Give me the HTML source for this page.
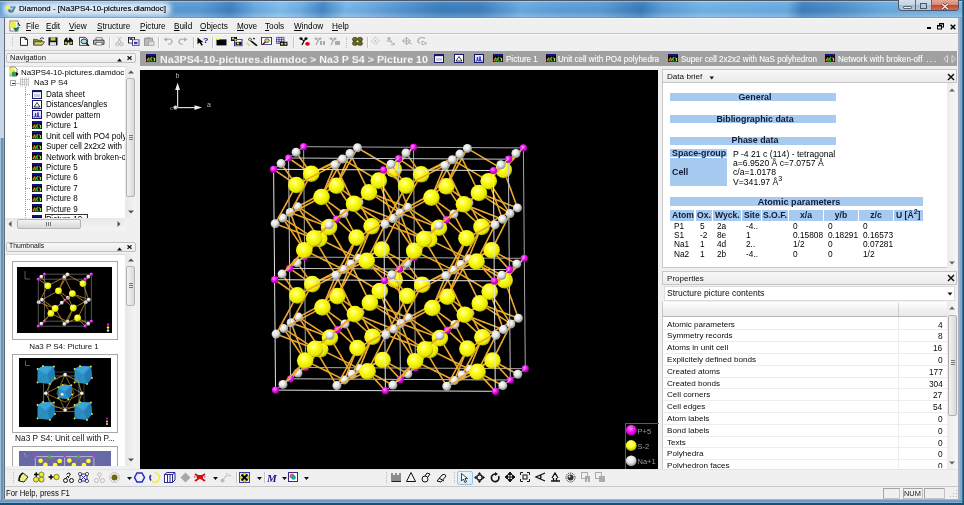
<!DOCTYPE html><html><head><meta charset="utf-8"><style>html,body{margin:0;padding:0;width:964px;height:505px;overflow:hidden;position:relative;background:#f0f0f0;font-family:'Liberation Sans',sans-serif;} div{will-change:transform}</style></head><body>
<div style="position:absolute;left:0px;top:0px;width:964px;height:505px;background:#6a9cc8;"></div><div style="position:absolute;left:0px;top:0px;width:964px;height:18px;background:linear-gradient(95deg,#5c9cd6 0px,#5a9ad4 200px,#3f80c0 230px,#6aaae0 255px,#80bcec 280px,#6eaee4 300px,#4586c4 322px,#78b6e8 345px,#6aa8de 370px,#5494d0 400px,#3c7ebe 440px,#4080c0 480px,#6aaae0 520px,#5e9ed8 560px,#5a9ad4 600px,#4686c4 625px,#3a7cbc 640px,#5c9cd6 660px,#72b2e6 700px,#6aaae0 785px,#3f80be 800px,#4a8ac6 830px,#6aaade 880px,#78b4e4 964px);"></div><div style="position:absolute;left:0px;top:0px;width:964px;height:18px;background:linear-gradient(to bottom,rgba(255,255,255,0.10) 0,rgba(255,255,255,0) 40%,rgba(0,0,0,0.03) 60%,rgba(255,255,255,0.22) 100%);"></div><div style="position:absolute;left:3px;top:2px;width:168px;height:14px;border-radius:7px;background:rgba(226,236,246,0.95);filter:blur(2.5px);"></div><div style="position:absolute;left:0px;top:0px;width:964px;height:1px;background:#4a5868;"></div><div style="position:absolute;left:0px;top:1px;width:964px;height:1px;background:rgba(255,255,255,0.35);"></div><div style="position:absolute;left:18.5px;top:4.08px;white-space:pre;font-family:'Liberation Sans',sans-serif;font-size:7.94px;line-height:9.940000000000001px;color:#0a1420;text-shadow:0 0 0.4px rgba(0,0,0,0.6);">Diamond - [Na3PS4-10-pictures.diamdoc]</div><svg style="position:absolute;left:5px;top:4px;overflow:visible" width="12" height="10"><polygon points="1,2.5 11,2.5 8,8.5 4,8.5" fill="#4f7394"/><polygon points="3,3.5 9,3.5 6.5,7" fill="#a8d0e0"/><circle cx="3" cy="3.5" r="2.2" fill="#f4f070"/></svg><div style="position:absolute;left:898px;top:0;width:59px;height:10px;border:1px solid #4a5868;border-top:none;border-radius:0 0 4px 4px;overflow:hidden;background:linear-gradient(to bottom,#d4e0ec,#c4d4e4 50%,#a6bcd2 55%,#b4cade);"><div style="position:absolute;left:32px;top:0;width:27px;height:10px;background:linear-gradient(to bottom,#e4a898,#d88c78 45%,#c8482c 55%,#d46a50);"></div><div style="position:absolute;left:15.5px;top:0;width:1px;height:10px;background:#5a6878"></div><div style="position:absolute;left:32px;top:0;width:1px;height:10px;background:#5a6878"></div><div style="position:absolute;left:4px;top:5.5px;width:6.5px;height:0.5px;background:#e8eef4;border:1px solid #5a6a7a;border-radius:1px"></div><div style="position:absolute;left:21px;top:2.5px;width:5px;height:4px;border:1px solid #4a5a6a;border-top-width:1.5px;background:#b8c8d8"></div></div><svg style="position:absolute;left:941px;top:2.5px;overflow:visible" width="8" height="7"><path d="M1 0.8 L7 6.2 M7 0.8 L1 6.2" stroke="#6a2a20" stroke-width="2.6"/><path d="M1 0.8 L7 6.2 M7 0.8 L1 6.2" stroke="#f4f0f0" stroke-width="1.5"/></svg><div style="position:absolute;left:5px;top:18px;width:953px;height:481px;background:#f0f0f0;"></div><div style="position:absolute;left:0px;top:18px;width:4px;height:120px;background:#c8d8e8;"></div><div style="position:absolute;left:0px;top:138px;width:1px;height:367px;background:#a0c0dc;"></div><div style="position:absolute;left:1px;top:138px;width:2px;height:367px;background:#6a90b4;"></div><div style="position:absolute;left:3px;top:138px;width:1px;height:367px;background:#8aaccc;"></div><div style="position:absolute;left:4px;top:18px;width:1px;height:482px;background:#5f6b77;"></div><div style="position:absolute;left:958px;top:18px;width:1px;height:482px;background:#a8b0bc;"></div><div style="position:absolute;left:959px;top:18px;width:1px;height:487px;background:#9ab4d4;"></div><div style="position:absolute;left:960px;top:18px;width:1px;height:487px;background:#82a8cc;"></div><div style="position:absolute;left:961px;top:18px;width:1px;height:487px;background:#70acd0;"></div><div style="position:absolute;left:962px;top:0px;width:1px;height:505px;background:#3a7090;"></div><div style="position:absolute;left:963px;top:0px;width:1px;height:505px;background:#1a5070;"></div><div style="position:absolute;left:4px;top:499px;width:955px;height:1px;background:#a8b4c0;"></div><div style="position:absolute;left:0px;top:500px;width:962px;height:1px;background:#7a98b8;"></div><div style="position:absolute;left:0px;top:501px;width:962px;height:1px;background:#6a9cc8;"></div><div style="position:absolute;left:0px;top:502px;width:962px;height:1px;background:#78b0dc;"></div><div style="position:absolute;left:0px;top:503px;width:964px;height:2px;background:#1a5070;"></div><div style="position:absolute;left:5px;top:18px;width:953px;height:15px;background:#f0f0f0;"></div><div style="position:absolute;left:5px;top:18px;width:953px;height:1px;background:#f8f8f8;"></div><div style="position:absolute;left:0px;top:17px;width:964px;height:1px;background:rgba(90,110,130,0.35);"></div><div style="position:absolute;left:5px;top:33px;width:953px;height:1px;background:#c4c4c4;"></div><div style="position:absolute;left:5px;top:34px;width:953px;height:1px;background:#fafafa;"></div><svg style="position:absolute;left:8px;top:20px;overflow:visible" width="13" height="13"><rect x="2" y="1" width="8" height="10" fill="#fff" stroke="#666" stroke-width="0.8"/><circle cx="5" cy="5" r="3.2" fill="#eeee40"/><path d="M5 8 L12 7 L8 12 Z" fill="#1e7a50"/><path d="M10 3 L12 6" stroke="#000" stroke-width="1"/></svg><div style="position:absolute;left:25.7px;top:21.86px;white-space:pre;font-family:'Liberation Sans',sans-serif;font-size:8.2px;line-height:10.2px;color:#000;"><span style="text-decoration:underline;text-underline-offset:1.2px;text-decoration-thickness:0.6px">F</span>ile</div><div style="position:absolute;left:46.2px;top:21.86px;white-space:pre;font-family:'Liberation Sans',sans-serif;font-size:8.2px;line-height:10.2px;color:#000;"><span style="text-decoration:underline;text-underline-offset:1.2px;text-decoration-thickness:0.6px">E</span>dit</div><div style="position:absolute;left:69.3px;top:21.86px;white-space:pre;font-family:'Liberation Sans',sans-serif;font-size:8.2px;line-height:10.2px;color:#000;"><span style="text-decoration:underline;text-underline-offset:1.2px;text-decoration-thickness:0.6px">V</span>iew</div><div style="position:absolute;left:96.6px;top:21.86px;white-space:pre;font-family:'Liberation Sans',sans-serif;font-size:8.2px;line-height:10.2px;color:#000;"><span style="text-decoration:underline;text-underline-offset:1.2px;text-decoration-thickness:0.6px">S</span>tructure</div><div style="position:absolute;left:139.8px;top:21.86px;white-space:pre;font-family:'Liberation Sans',sans-serif;font-size:8.2px;line-height:10.2px;color:#000;"><span style="text-decoration:underline;text-underline-offset:1.2px;text-decoration-thickness:0.6px">P</span>icture</div><div style="position:absolute;left:174.1px;top:21.86px;white-space:pre;font-family:'Liberation Sans',sans-serif;font-size:8.2px;line-height:10.2px;color:#000;"><span style="text-decoration:underline;text-underline-offset:1.2px;text-decoration-thickness:0.6px">B</span>uild</div><div style="position:absolute;left:199.9px;top:21.86px;white-space:pre;font-family:'Liberation Sans',sans-serif;font-size:8.2px;line-height:10.2px;color:#000;"><span style="text-decoration:underline;text-underline-offset:1.2px;text-decoration-thickness:0.6px">O</span>bjects</div><div style="position:absolute;left:236.6px;top:21.86px;white-space:pre;font-family:'Liberation Sans',sans-serif;font-size:8.2px;line-height:10.2px;color:#000;"><span style="text-decoration:underline;text-underline-offset:1.2px;text-decoration-thickness:0.6px">M</span>ove</div><div style="position:absolute;left:265.2px;top:21.86px;white-space:pre;font-family:'Liberation Sans',sans-serif;font-size:8.2px;line-height:10.2px;color:#000;"><span style="text-decoration:underline;text-underline-offset:1.2px;text-decoration-thickness:0.6px">T</span>ools</div><div style="position:absolute;left:293.6px;top:21.86px;white-space:pre;font-family:'Liberation Sans',sans-serif;font-size:8.2px;line-height:10.2px;color:#000;"><span style="text-decoration:underline;text-underline-offset:1.2px;text-decoration-thickness:0.6px">W</span>indow</div><div style="position:absolute;left:332.4px;top:21.86px;white-space:pre;font-family:'Liberation Sans',sans-serif;font-size:8.2px;line-height:10.2px;color:#000;"><span style="text-decoration:underline;text-underline-offset:1.2px;text-decoration-thickness:0.6px">H</span>elp</div><div style="position:absolute;left:927px;top:26.5px;width:4px;height:2px;background:#000"></div><svg style="position:absolute;left:937px;top:23px;overflow:visible" width="7" height="7"><rect x="2.5" y="0.5" width="4" height="3.5" fill="none" stroke="#000" stroke-width="1"/><rect x="2" y="0" width="5" height="1.5" fill="#000"/><rect x="0.5" y="2.5" width="4" height="3.5" fill="#f0f0f0" stroke="#000" stroke-width="1"/><rect x="0" y="2" width="5" height="1.5" fill="#000"/></svg><svg style="position:absolute;left:949.5px;top:23.5px;overflow:visible" width="6" height="6"><path d="M0.7 0.7 L5.3 5.3 M5.3 0.7 L0.7 5.3" stroke="#000" stroke-width="1.5"/></svg><div style="position:absolute;left:5px;top:35px;width:953px;height:15px;background:#f0f0f0;"></div><div style="position:absolute;left:5px;top:50px;width:135px;height:1px;background:#d0d0d0;"></div><div style="position:absolute;left:12px;top:37px;width:1px;height:1px;background:#bcbcbc;"></div><div style="position:absolute;left:12px;top:39px;width:1px;height:1px;background:#bcbcbc;"></div><div style="position:absolute;left:12px;top:41px;width:1px;height:1px;background:#bcbcbc;"></div><div style="position:absolute;left:12px;top:43px;width:1px;height:1px;background:#bcbcbc;"></div><div style="position:absolute;left:12px;top:45px;width:1px;height:1px;background:#bcbcbc;"></div><svg style="position:absolute;left:19px;top:37px;overflow:visible" width="12" height="9.6" viewBox="0 0 12 12" preserveAspectRatio="none"><path d="M1.5 0.5 H6 L8.5 3 V10.5 H1.5 Z" fill="#fff" stroke="#111"/><path d="M6 0.5 V3 H8.5" fill="none" stroke="#111"/></svg><svg style="position:absolute;left:33px;top:37px;overflow:visible" width="12" height="9.6" viewBox="0 0 12 12" preserveAspectRatio="none"><path d="M0.5 3 H4 L5 4 H9 V10 H0.5 Z" fill="#8a8a20" stroke="#333" stroke-width="0.8"/><path d="M2 6 H11.5 L9.5 10 H0.5 Z" fill="#d8d860" stroke="#333" stroke-width="0.8"/><path d="M7 2 Q9 0 11 2" stroke="#333" fill="none"/></svg><svg style="position:absolute;left:48px;top:37px;overflow:visible" width="12" height="9.6" viewBox="0 0 12 12" preserveAspectRatio="none"><rect x="0.5" y="0.5" width="9" height="10" fill="#111"/><rect x="2.5" y="0.5" width="5" height="4" fill="#c8c850"/><rect x="2" y="6.5" width="6" height="4" fill="#dde"/></svg><svg style="position:absolute;left:63px;top:37px;overflow:visible" width="12" height="9.6" viewBox="0 0 12 12" preserveAspectRatio="none"><path d="M1 4 L3 1 H4.5 V4 H6 V1 H7.5 L10 4 V10 H6.5 V7 H4.5 V10 H1 Z" fill="#111"/><rect x="1.8" y="6" width="2" height="3" fill="#c8c840"/><rect x="7.2" y="6" width="2" height="3" fill="#c8c840"/></svg><svg style="position:absolute;left:79px;top:37px;overflow:visible" width="12" height="9.6" viewBox="0 0 12 12" preserveAspectRatio="none"><path d="M0.5 0.5 H6 L8.5 3 V10.5 H0.5 Z" fill="#fff" stroke="#333"/><circle cx="5" cy="5.5" r="3" fill="#9ee0f0" stroke="#222"/><path d="M7 8 L10 11" stroke="#111" stroke-width="1.6"/></svg><svg style="position:absolute;left:93px;top:37px;overflow:visible" width="12" height="9.6" viewBox="0 0 12 12" preserveAspectRatio="none"><rect x="3" y="1" width="6" height="3" fill="#fff" stroke="#555" stroke-width="0.8"/><path d="M0.5 4 H11 V9 H0.5 Z" fill="#bbb" stroke="#333"/><rect x="3" y="7" width="6" height="3" fill="#fff" stroke="#555" stroke-width="0.8"/></svg><svg style="position:absolute;left:115px;top:37px;overflow:visible" width="12" height="9.6" viewBox="0 0 12 12" preserveAspectRatio="none"><circle cx="2.5" cy="9" r="1.8" fill="none" stroke="#aaa"/><circle cx="6.5" cy="9" r="1.8" fill="none" stroke="#aaa"/><path d="M2.5 7 L6 0.5 M6.5 7 L3 0.5" stroke="#aaa"/></svg><svg style="position:absolute;left:128px;top:37px;overflow:visible" width="12" height="9.6" viewBox="0 0 12 12" preserveAspectRatio="none"><rect x="0.5" y="0.5" width="6" height="7" fill="#fff" stroke="#222"/><rect x="4.5" y="3.5" width="6.5" height="7" fill="#fff" stroke="#3a3aa0"/><rect x="6" y="6" width="3.5" height="3" fill="#3a3aa0"/><rect x="1.5" y="1.5" width="3" height="2" fill="#222"/></svg><svg style="position:absolute;left:144px;top:37px;overflow:visible" width="12" height="9.6" viewBox="0 0 12 12" preserveAspectRatio="none"><rect x="0.5" y="1.5" width="8" height="9" fill="#bbb" stroke="#999"/><rect x="2.5" y="0.5" width="4" height="2" fill="#999"/><rect x="4.5" y="5.5" width="5.5" height="5" fill="#ddd" stroke="#aaa"/></svg><svg style="position:absolute;left:163px;top:37px;overflow:visible" width="12" height="9.6" viewBox="0 0 12 12" preserveAspectRatio="none"><path d="M3 3 Q9 1 9 6 Q9 9 5 9" fill="none" stroke="#aaa" stroke-width="1.3"/><path d="M0.5 3 L4 0.5 L4 5.5 Z" fill="#aaa"/></svg><svg style="position:absolute;left:178px;top:37px;overflow:visible" width="12" height="9.6" viewBox="0 0 12 12" preserveAspectRatio="none"><path d="M7 3 Q1 1 1 6 Q1 9 5 9" fill="none" stroke="#aaa" stroke-width="1.3"/><path d="M9.5 3 L6 0.5 L6 5.5 Z" fill="#aaa"/></svg><svg style="position:absolute;left:196.5px;top:37px;overflow:visible" width="12" height="9.6" viewBox="0 0 12 12" preserveAspectRatio="none"><path d="M0.5 0.5 L0.5 9 L2.5 7 L4.5 11 L6 10 L4 6.5 L6.5 6.5 Z" fill="#000"/><text x="6" y="8" font-family="Liberation Sans" font-weight="bold" font-size="9" fill="#1a1a7a">?</text></svg><svg style="position:absolute;left:215.5px;top:37px;overflow:visible" width="12" height="9.6" viewBox="0 0 12 12" preserveAspectRatio="none"><rect x="0.5" y="3.5" width="10" height="7" fill="#000"/><rect x="0.5" y="3" width="10" height="1" fill="#222266"/><circle cx="2" cy="2" r="1.8" fill="#ffff40"/></svg><svg style="position:absolute;left:230.5px;top:37px;overflow:visible" width="12" height="9.6" viewBox="0 0 12 12" preserveAspectRatio="none"><rect x="3.5" y="3" width="7.5" height="8" fill="#fff" stroke="#2a2a90"/><rect x="0" y="0" width="6" height="5" fill="#111"/><circle cx="2" cy="2" r="1.3" fill="#d8d860"/><circle cx="4.5" cy="3.5" r="1.2" fill="#d8d860"/><rect x="4.5" y="6" width="6" height="4" fill="#111"/><circle cx="7" cy="8" r="1.3" fill="#d8d860"/></svg><svg style="position:absolute;left:245.5px;top:37px;overflow:visible" width="12" height="9.6" viewBox="0 0 12 12" preserveAspectRatio="none"><path d="M5 5 L11 11" stroke="#111" stroke-width="2"/><path d="M4 1 L6 3 L4 5 L2 3 Z" fill="#d8d860" stroke="#111" stroke-width="0.6"/><circle cx="1.5" cy="8" r="1.2" fill="#d8d860"/><circle cx="3" cy="10" r="1.2" fill="#d8d860"/><circle cx="8" cy="2" r="1" fill="#111"/></svg><svg style="position:absolute;left:261px;top:37px;overflow:visible" width="12" height="9.6" viewBox="0 0 12 12" preserveAspectRatio="none"><rect x="0.5" y="0.5" width="10" height="9" fill="#fff" stroke="#2a2a90"/><circle cx="6" cy="4.5" r="2.3" fill="#d8d860" stroke="#222" stroke-width="0.7"/><path d="M4.5 6 L1.5 9.5" stroke="#600" stroke-width="1.4"/></svg><svg style="position:absolute;left:276px;top:37px;overflow:visible" width="12" height="9.6" viewBox="0 0 12 12" preserveAspectRatio="none"><path d="M0.5 0.5 H8 V8 H0.5 Z M3 0.5 V8 M5.5 0.5 V8 M0.5 3 H8 M0.5 5.5 H8" fill="none" stroke="#3a3aa0" stroke-width="0.9"/><rect x="4" y="6" width="7.5" height="5" fill="#111"/><circle cx="6" cy="8.5" r="1.2" fill="#d8d860"/><circle cx="9.5" cy="8.5" r="1.2" fill="#d8d860"/></svg><svg style="position:absolute;left:298.5px;top:37px;overflow:visible" width="12" height="9.6" viewBox="0 0 12 12" preserveAspectRatio="none"><circle cx="2" cy="2" r="1.6" fill="#111"/><circle cx="7" cy="2" r="1.6" fill="#111"/><path d="M2 2 L5 5 L7 2 M5 5 L3 10" stroke="#111" stroke-width="1.3" fill="none"/><circle cx="8.5" cy="8.5" r="2.3" fill="#e00000"/></svg><svg style="position:absolute;left:313.5px;top:37px;overflow:visible" width="12" height="9.6" viewBox="0 0 12 12" preserveAspectRatio="none"><circle cx="2" cy="2" r="1.5" fill="#aaa"/><circle cx="6" cy="2" r="1.5" fill="#aaa"/><path d="M2 2 L4 5 L6 2 M4 5 L2 10" stroke="#aaa" stroke-width="1.2" fill="none"/><rect x="6" y="5" width="2" height="5" fill="#aaa"/><rect x="9" y="5" width="2" height="5" fill="#aaa"/></svg><svg style="position:absolute;left:329px;top:37px;overflow:visible" width="12" height="9.6" viewBox="0 0 12 12" preserveAspectRatio="none"><circle cx="2" cy="2" r="1.5" fill="#aaa"/><circle cx="6" cy="2" r="1.5" fill="#aaa"/><path d="M2 2 L4 5 L6 2 M4 5 L2 10" stroke="#aaa" stroke-width="1.2" fill="none"/><rect x="6" y="5" width="5" height="5" fill="#aaa"/></svg><svg style="position:absolute;left:351.5px;top:37px;overflow:visible" width="12" height="9.6" viewBox="0 0 12 12" preserveAspectRatio="none"><circle cx="3" cy="3" r="2.6" fill="#6a6a20" stroke="#222" stroke-width="0.6"/><circle cx="8" cy="3" r="2.6" fill="#6a6a20" stroke="#222" stroke-width="0.6"/><circle cx="3" cy="8" r="2.6" fill="#6a6a20" stroke="#222" stroke-width="0.6"/><circle cx="8" cy="8" r="2.6" fill="#6a6a20" stroke="#222" stroke-width="0.6"/><circle cx="5.5" cy="5.5" r="1.2" fill="#f0f060"/></svg><svg style="position:absolute;left:371px;top:37px;overflow:visible" width="12" height="9.6" viewBox="0 0 12 12" preserveAspectRatio="none"><path d="M4.5 0.5 L8.5 5 L4.5 9.5 L0.5 5 Z" fill="none" stroke="#aaa" stroke-dasharray="1.5 1"/><circle cx="4.5" cy="5" r="1" fill="#aaa"/></svg><svg style="position:absolute;left:385.5px;top:37px;overflow:visible" width="12" height="9.6" viewBox="0 0 12 12" preserveAspectRatio="none"><circle cx="3" cy="2" r="1.6" fill="#aaa"/><path d="M0.5 5 H6 M3 5 L9 9 L5 10" stroke="#aaa" fill="none"/></svg><svg style="position:absolute;left:401.5px;top:37px;overflow:visible" width="12" height="9.6" viewBox="0 0 12 12" preserveAspectRatio="none"><path d="M4.5 0.5 L8.5 5 L4.5 9.5 L0.5 5 Z M0.5 5 H8.5 M4.5 0.5 V9.5" fill="none" stroke="#aaa"/><path d="M6 7 L10 9" stroke="#aaa"/></svg><svg style="position:absolute;left:416.5px;top:37px;overflow:visible" width="12" height="9.6" viewBox="0 0 12 12" preserveAspectRatio="none"><path d="M8 2 Q5 -1 2 2 Q-1 6 3 8" fill="none" stroke="#aaa" stroke-width="1.3"/><path d="M5 5 L10 8 L5 10 Z" fill="none" stroke="#aaa"/></svg><div style="position:absolute;left:109px;top:37px;width:1px;height:11px;background:#c4c4c4;"></div><div style="position:absolute;left:110px;top:37px;width:1px;height:11px;background:#fcfcfc;"></div><div style="position:absolute;left:158px;top:37px;width:1px;height:11px;background:#c4c4c4;"></div><div style="position:absolute;left:159px;top:37px;width:1px;height:11px;background:#fcfcfc;"></div><div style="position:absolute;left:193px;top:37px;width:1px;height:11px;background:#c4c4c4;"></div><div style="position:absolute;left:194px;top:37px;width:1px;height:11px;background:#fcfcfc;"></div><div style="position:absolute;left:212px;top:37px;width:1px;height:11px;background:#c4c4c4;"></div><div style="position:absolute;left:213px;top:37px;width:1px;height:11px;background:#fcfcfc;"></div><div style="position:absolute;left:293px;top:37px;width:1px;height:11px;background:#c4c4c4;"></div><div style="position:absolute;left:294px;top:37px;width:1px;height:11px;background:#fcfcfc;"></div><div style="position:absolute;left:346px;top:37px;width:1px;height:1px;background:#bcbcbc;"></div><div style="position:absolute;left:346px;top:39px;width:1px;height:1px;background:#bcbcbc;"></div><div style="position:absolute;left:346px;top:41px;width:1px;height:1px;background:#bcbcbc;"></div><div style="position:absolute;left:346px;top:43px;width:1px;height:1px;background:#bcbcbc;"></div><div style="position:absolute;left:346px;top:45px;width:1px;height:1px;background:#bcbcbc;"></div><div style="position:absolute;left:346px;top:47px;width:1px;height:1px;background:#bcbcbc;"></div><div style="position:absolute;left:367px;top:37px;width:1px;height:11px;background:#c4c4c4;"></div><div style="position:absolute;left:368px;top:37px;width:1px;height:11px;background:#fcfcfc;"></div><div style="position:absolute;left:140px;top:51px;width:817px;height:14.5px;background:#a0a0a0;"></div><div style="position:absolute;left:140px;top:66px;width:519px;height:3px;background:#f4f4f4;"></div><div style="position:absolute;left:159.6px;top:52.56px;white-space:pre;font-family:'Liberation Sans',sans-serif;font-size:10.68px;line-height:12.68px;color:#f6f6f6;font-weight:bold;transform:scaleY(0.9);transform-origin:0 10px;">Na3PS4-10-pictures.diamdoc &gt; Na3 P S4 &gt; Picture 10</div><svg style="position:absolute;left:146px;top:54px;overflow:visible" width="10" height="8"><rect x="0" y="0" width="10" height="8" fill="#050505"/><path d="M0 0 H10 L9.5 2 H0.5 Z" fill="#10108a"/><path d="M1 7 L3 3.5" stroke="#e07010" stroke-width="1.6"/><path d="M3 7 L6 3 M4 4 L6 7" stroke="#30c030" stroke-width="1.3"/><path d="M7 3 L8.5 5" stroke="#d02040" stroke-width="1.3"/><path d="M8.5 4 V7" stroke="#a8e050" stroke-width="1.3"/><path d="M1.5 7.5 H9" stroke="#108010" stroke-width="0.8"/></svg><svg style="position:absolute;left:433.5px;top:54px;overflow:visible" width="10" height="9"><rect x="0.5" y="0.5" width="9" height="8" fill="#f4f4f4" stroke="#18186a"/><rect x="0.5" y="0.5" width="9" height="1.6" fill="#18186a"/><rect x="2" y="4" width="6" height="3" fill="#c8c8d8"/></svg><svg style="position:absolute;left:453.5px;top:54px;overflow:visible" width="10" height="9"><rect x="0.5" y="0.5" width="9" height="8" fill="#fff" stroke="#18186a"/><path d="M2 7 L5 2.5 L8 7 Z" fill="none" stroke="#222" stroke-width="0.9"/></svg><svg style="position:absolute;left:473.5px;top:54px;overflow:visible" width="10" height="9"><rect x="0.5" y="0.5" width="9" height="8" fill="#e0e4ff" stroke="#18186a"/><path d="M1.5 7 L3 7 L3.5 3 L4 7 L5.5 7 L6 2.5 L6.5 7 L8.5 7" fill="none" stroke="#2222aa" stroke-width="0.9"/></svg><svg style="position:absolute;left:493px;top:54px;overflow:visible" width="10" height="8"><rect x="0" y="0" width="10" height="8" fill="#050505"/><path d="M0 0 H10 L9.5 2 H0.5 Z" fill="#10108a"/><path d="M1 7 L3 3.5" stroke="#e07010" stroke-width="1.6"/><path d="M3 7 L6 3 M4 4 L6 7" stroke="#30c030" stroke-width="1.3"/><path d="M7 3 L8.5 5" stroke="#d02040" stroke-width="1.3"/><path d="M8.5 4 V7" stroke="#a8e050" stroke-width="1.3"/><path d="M1.5 7.5 H9" stroke="#108010" stroke-width="0.8"/></svg><div style="position:absolute;left:506px;top:55.18px;white-space:pre;font-family:'Liberation Sans',sans-serif;font-size:8.06px;line-height:10.06px;color:#f6f6f6;transform:scaleY(1.12);transform-origin:0 7.8px;text-shadow:0 0 0.4px rgba(255,255,255,0.6);">Picture 1</div><svg style="position:absolute;left:545.5px;top:54px;overflow:visible" width="10" height="8"><rect x="0" y="0" width="10" height="8" fill="#050505"/><path d="M0 0 H10 L9.5 2 H0.5 Z" fill="#10108a"/><path d="M1 7 L3 3.5" stroke="#e07010" stroke-width="1.6"/><path d="M3 7 L6 3 M4 4 L6 7" stroke="#30c030" stroke-width="1.3"/><path d="M7 3 L8.5 5" stroke="#d02040" stroke-width="1.3"/><path d="M8.5 4 V7" stroke="#a8e050" stroke-width="1.3"/><path d="M1.5 7.5 H9" stroke="#108010" stroke-width="0.8"/></svg><div style="position:absolute;left:558.2px;top:55.18px;white-space:pre;font-family:'Liberation Sans',sans-serif;font-size:8.06px;line-height:10.06px;color:#f6f6f6;transform:scaleY(1.12);transform-origin:0 7.8px;text-shadow:0 0 0.4px rgba(255,255,255,0.6);">Unit cell with PO4 polyhedra</div><svg style="position:absolute;left:667.5px;top:54px;overflow:visible" width="10" height="8"><rect x="0" y="0" width="10" height="8" fill="#050505"/><path d="M0 0 H10 L9.5 2 H0.5 Z" fill="#10108a"/><path d="M1 7 L3 3.5" stroke="#e07010" stroke-width="1.6"/><path d="M3 7 L6 3 M4 4 L6 7" stroke="#30c030" stroke-width="1.3"/><path d="M7 3 L8.5 5" stroke="#d02040" stroke-width="1.3"/><path d="M8.5 4 V7" stroke="#a8e050" stroke-width="1.3"/><path d="M1.5 7.5 H9" stroke="#108010" stroke-width="0.8"/></svg><div style="position:absolute;left:680.5px;top:55.18px;white-space:pre;font-family:'Liberation Sans',sans-serif;font-size:8.06px;line-height:10.06px;color:#f6f6f6;transform:scaleY(1.12);transform-origin:0 7.8px;text-shadow:0 0 0.4px rgba(255,255,255,0.6);">Super cell 2x2x2 with NaS polyhedron</div><svg style="position:absolute;left:824.5px;top:54px;overflow:visible" width="10" height="8"><rect x="0" y="0" width="10" height="8" fill="#050505"/><path d="M0 0 H10 L9.5 2 H0.5 Z" fill="#10108a"/><path d="M1 7 L3 3.5" stroke="#e07010" stroke-width="1.6"/><path d="M3 7 L6 3 M4 4 L6 7" stroke="#30c030" stroke-width="1.3"/><path d="M7 3 L8.5 5" stroke="#d02040" stroke-width="1.3"/><path d="M8.5 4 V7" stroke="#a8e050" stroke-width="1.3"/><path d="M1.5 7.5 H9" stroke="#108010" stroke-width="0.8"/></svg><div style="position:absolute;left:837.6px;top:55.18px;white-space:pre;font-family:'Liberation Sans',sans-serif;font-size:8.06px;line-height:10.06px;color:#f6f6f6;transform:scaleY(1.12);transform-origin:0 7.8px;text-shadow:0 0 0.4px rgba(255,255,255,0.6);">Network with broken-off<span style="letter-spacing:1.6px"> ...</span></div><svg style="position:absolute;left:943px;top:55px;overflow:visible" width="6" height="8"><path d="M4.5 0.5 L0.8 4 L4.5 7.5 Z" fill="none" stroke="#e0e0e0" stroke-width="0.9"/></svg><svg style="position:absolute;left:951px;top:55px;overflow:visible" width="6" height="8"><path d="M1 0.5 L4.7 4 L1 7.5 Z" fill="none" stroke="#e0e0e0" stroke-width="0.9"/></svg><div style="position:absolute;left:140px;top:70px;width:518.2px;height:398.5px;background:#000;"></div><div style="position:absolute;left:658.2px;top:66px;width:3.8px;height:403px;background:#f0f0f0;"></div><svg style="position:absolute;left:0;top:0" width="964" height="505"><defs>
<radialGradient id="gSm" cx="0.4" cy="0.35" r="0.65"><stop offset="0" stop-color="#ffffb0"/><stop offset="0.35" stop-color="#ffff20"/><stop offset="0.85" stop-color="#e6e600"/><stop offset="1" stop-color="#a8a800"/></radialGradient>
<radialGradient id="gNm" cx="0.4" cy="0.35" r="0.65"><stop offset="0" stop-color="#ffffff"/><stop offset="0.5" stop-color="#e4e4e4"/><stop offset="1" stop-color="#8c8c8c"/></radialGradient>
<radialGradient id="gPm" cx="0.4" cy="0.35" r="0.65"><stop offset="0" stop-color="#ff90ff"/><stop offset="0.5" stop-color="#f010f0"/><stop offset="1" stop-color="#a000a0"/></radialGradient>
</defs><line x1="305.5" y1="367.5" x2="415.4" y2="368.1" stroke="#a8a8a8" stroke-width="1.0"/><line x1="305.5" y1="367.5" x2="304.6" y2="257.1" stroke="#a8a8a8" stroke-width="1.0"/><line x1="304.6" y1="257.1" x2="414.4" y2="257.7" stroke="#a8a8a8" stroke-width="1.0"/><line x1="304.6" y1="257.1" x2="303.6" y2="146.7" stroke="#a8a8a8" stroke-width="1.0"/><line x1="303.6" y1="146.7" x2="413.5" y2="147.3" stroke="#a8a8a8" stroke-width="1.0"/><line x1="415.4" y1="368.1" x2="525.3" y2="368.7" stroke="#a8a8a8" stroke-width="1.0"/><line x1="415.4" y1="368.1" x2="414.4" y2="257.7" stroke="#a8a8a8" stroke-width="1.0"/><line x1="414.4" y1="257.7" x2="524.3" y2="258.3" stroke="#a8a8a8" stroke-width="1.0"/><line x1="414.4" y1="257.7" x2="413.5" y2="147.3" stroke="#a8a8a8" stroke-width="1.0"/><line x1="413.5" y1="147.3" x2="523.4" y2="147.9" stroke="#a8a8a8" stroke-width="1.0"/><line x1="525.3" y1="368.7" x2="524.3" y2="258.3" stroke="#a8a8a8" stroke-width="1.0"/><line x1="524.3" y1="258.3" x2="523.4" y2="147.9" stroke="#a8a8a8" stroke-width="1.0"/><line x1="305.5" y1="367.5" x2="312.9" y2="358.4" stroke="#eaa82c" stroke-width="1.6" stroke-linecap="round"/><line x1="304.6" y1="257.1" x2="311.9" y2="248.0" stroke="#eaa82c" stroke-width="1.6" stroke-linecap="round"/><line x1="415.4" y1="368.1" x2="422.8" y2="359.0" stroke="#eaa82c" stroke-width="1.6" stroke-linecap="round"/><line x1="414.4" y1="257.7" x2="421.8" y2="248.6" stroke="#eaa82c" stroke-width="1.6" stroke-linecap="round"/><line x1="414.4" y1="257.7" x2="404.6" y2="268.7" stroke="#eaa82c" stroke-width="1.6" stroke-linecap="round"/><line x1="413.5" y1="147.3" x2="403.7" y2="158.3" stroke="#eaa82c" stroke-width="1.6" stroke-linecap="round"/><line x1="524.3" y1="258.3" x2="514.5" y2="269.3" stroke="#eaa82c" stroke-width="1.6" stroke-linecap="round"/><line x1="523.4" y1="147.9" x2="513.6" y2="158.9" stroke="#eaa82c" stroke-width="1.6" stroke-linecap="round"/><line x1="360.0" y1="312.6" x2="348.7" y2="304.3" stroke="#eaa82c" stroke-width="1.6" stroke-linecap="round"/><line x1="359.0" y1="202.2" x2="347.7" y2="193.9" stroke="#eaa82c" stroke-width="1.6" stroke-linecap="round"/><line x1="469.9" y1="313.2" x2="458.6" y2="304.9" stroke="#eaa82c" stroke-width="1.6" stroke-linecap="round"/><line x1="468.9" y1="202.8" x2="457.6" y2="194.5" stroke="#eaa82c" stroke-width="1.6" stroke-linecap="round"/><line x1="360.0" y1="312.6" x2="366.2" y2="324.6" stroke="#eaa82c" stroke-width="1.6" stroke-linecap="round"/><line x1="359.0" y1="202.2" x2="365.3" y2="214.2" stroke="#eaa82c" stroke-width="1.6" stroke-linecap="round"/><line x1="469.9" y1="313.2" x2="476.1" y2="325.2" stroke="#eaa82c" stroke-width="1.6" stroke-linecap="round"/><line x1="468.9" y1="202.8" x2="475.2" y2="214.8" stroke="#eaa82c" stroke-width="1.6" stroke-linecap="round"/><circle cx="305.5" cy="367.5" r="3.6" fill="url(#gPm)"/><circle cx="304.6" cy="257.1" r="3.6" fill="url(#gPm)"/><circle cx="303.6" cy="146.7" r="3.6" fill="url(#gPm)"/><circle cx="415.4" cy="368.1" r="3.6" fill="url(#gPm)"/><circle cx="414.4" cy="257.7" r="3.6" fill="url(#gPm)"/><circle cx="413.5" cy="147.3" r="3.6" fill="url(#gPm)"/><circle cx="525.3" cy="368.7" r="3.6" fill="url(#gPm)"/><circle cx="524.3" cy="258.3" r="3.6" fill="url(#gPm)"/><circle cx="523.4" cy="147.9" r="3.6" fill="url(#gPm)"/><circle cx="360.0" cy="312.6" r="4.5" fill="url(#gNm)"/><circle cx="359.0" cy="202.2" r="4.5" fill="url(#gNm)"/><circle cx="469.9" cy="313.2" r="4.5" fill="url(#gNm)"/><circle cx="468.9" cy="202.8" r="4.5" fill="url(#gNm)"/><line x1="359.4" y1="368.6" x2="339.8" y2="358.9" stroke="#eaa82c" stroke-width="1.6" stroke-linecap="round"/><line x1="358.4" y1="258.2" x2="338.8" y2="248.5" stroke="#eaa82c" stroke-width="1.6" stroke-linecap="round"/><line x1="469.3" y1="369.2" x2="449.7" y2="359.5" stroke="#eaa82c" stroke-width="1.6" stroke-linecap="round"/><line x1="468.3" y1="258.8" x2="448.7" y2="249.1" stroke="#eaa82c" stroke-width="1.6" stroke-linecap="round"/><line x1="358.4" y1="258.2" x2="376.6" y2="268.9" stroke="#eaa82c" stroke-width="1.6" stroke-linecap="round"/><line x1="357.5" y1="147.8" x2="375.6" y2="158.5" stroke="#eaa82c" stroke-width="1.6" stroke-linecap="round"/><line x1="468.3" y1="258.8" x2="486.5" y2="269.5" stroke="#eaa82c" stroke-width="1.6" stroke-linecap="round"/><line x1="467.4" y1="148.4" x2="485.5" y2="159.1" stroke="#eaa82c" stroke-width="1.6" stroke-linecap="round"/><line x1="358.4" y1="258.2" x2="347.9" y2="277.2" stroke="#eaa82c" stroke-width="1.6" stroke-linecap="round"/><line x1="357.5" y1="147.8" x2="347.0" y2="166.8" stroke="#eaa82c" stroke-width="1.6" stroke-linecap="round"/><line x1="468.3" y1="258.8" x2="457.8" y2="277.8" stroke="#eaa82c" stroke-width="1.6" stroke-linecap="round"/><line x1="467.4" y1="148.4" x2="456.9" y2="167.4" stroke="#eaa82c" stroke-width="1.6" stroke-linecap="round"/><line x1="359.4" y1="368.6" x2="365.9" y2="352.6" stroke="#eaa82c" stroke-width="1.6" stroke-linecap="round"/><line x1="358.4" y1="258.2" x2="365.0" y2="242.2" stroke="#eaa82c" stroke-width="1.6" stroke-linecap="round"/><line x1="469.3" y1="369.2" x2="475.8" y2="353.2" stroke="#eaa82c" stroke-width="1.6" stroke-linecap="round"/><line x1="468.3" y1="258.8" x2="474.9" y2="242.8" stroke="#eaa82c" stroke-width="1.6" stroke-linecap="round"/><circle cx="359.4" cy="368.6" r="4.5" fill="url(#gNm)"/><circle cx="358.4" cy="258.2" r="4.5" fill="url(#gNm)"/><circle cx="357.5" cy="147.8" r="4.5" fill="url(#gNm)"/><circle cx="469.3" cy="369.2" r="4.5" fill="url(#gNm)"/><circle cx="468.3" cy="258.8" r="4.5" fill="url(#gNm)"/><circle cx="467.4" cy="148.4" r="4.5" fill="url(#gNm)"/><line x1="320.2" y1="349.3" x2="312.9" y2="358.4" stroke="#eaa82c" stroke-width="1.6" stroke-linecap="round"/><line x1="319.3" y1="238.9" x2="311.9" y2="248.0" stroke="#eaa82c" stroke-width="1.6" stroke-linecap="round"/><line x1="430.1" y1="349.9" x2="422.8" y2="359.0" stroke="#eaa82c" stroke-width="1.6" stroke-linecap="round"/><line x1="429.2" y1="239.5" x2="421.8" y2="248.6" stroke="#eaa82c" stroke-width="1.6" stroke-linecap="round"/><line x1="394.8" y1="279.7" x2="404.6" y2="268.7" stroke="#eaa82c" stroke-width="1.6" stroke-linecap="round"/><line x1="393.8" y1="169.3" x2="403.7" y2="158.3" stroke="#eaa82c" stroke-width="1.6" stroke-linecap="round"/><line x1="504.7" y1="280.3" x2="514.5" y2="269.3" stroke="#eaa82c" stroke-width="1.6" stroke-linecap="round"/><line x1="503.7" y1="169.9" x2="513.6" y2="158.9" stroke="#eaa82c" stroke-width="1.6" stroke-linecap="round"/><line x1="320.2" y1="349.3" x2="339.8" y2="358.9" stroke="#eaa82c" stroke-width="1.6" stroke-linecap="round"/><line x1="320.2" y1="349.3" x2="309.4" y2="333.2" stroke="#eaa82c" stroke-width="1.6" stroke-linecap="round"/><line x1="320.2" y1="349.3" x2="309.1" y2="361.2" stroke="#eaa82c" stroke-width="1.6" stroke-linecap="round"/><line x1="319.3" y1="238.9" x2="338.8" y2="248.5" stroke="#eaa82c" stroke-width="1.6" stroke-linecap="round"/><line x1="319.3" y1="238.9" x2="308.5" y2="222.8" stroke="#eaa82c" stroke-width="1.6" stroke-linecap="round"/><line x1="319.3" y1="238.9" x2="308.2" y2="250.8" stroke="#eaa82c" stroke-width="1.6" stroke-linecap="round"/><line x1="430.1" y1="349.9" x2="449.7" y2="359.5" stroke="#eaa82c" stroke-width="1.6" stroke-linecap="round"/><line x1="430.1" y1="349.9" x2="419.3" y2="333.8" stroke="#eaa82c" stroke-width="1.6" stroke-linecap="round"/><line x1="430.1" y1="349.9" x2="419.0" y2="361.8" stroke="#eaa82c" stroke-width="1.6" stroke-linecap="round"/><line x1="429.2" y1="239.5" x2="448.7" y2="249.1" stroke="#eaa82c" stroke-width="1.6" stroke-linecap="round"/><line x1="429.2" y1="239.5" x2="418.4" y2="223.4" stroke="#eaa82c" stroke-width="1.6" stroke-linecap="round"/><line x1="429.2" y1="239.5" x2="418.1" y2="251.4" stroke="#eaa82c" stroke-width="1.6" stroke-linecap="round"/><line x1="394.8" y1="279.7" x2="376.6" y2="268.9" stroke="#eaa82c" stroke-width="1.6" stroke-linecap="round"/><line x1="394.8" y1="279.7" x2="401.6" y2="298.7" stroke="#eaa82c" stroke-width="1.6" stroke-linecap="round"/><line x1="394.8" y1="279.7" x2="400.9" y2="271.5" stroke="#eaa82c" stroke-width="1.6" stroke-linecap="round"/><line x1="393.8" y1="169.3" x2="375.6" y2="158.5" stroke="#eaa82c" stroke-width="1.6" stroke-linecap="round"/><line x1="393.8" y1="169.3" x2="400.7" y2="188.3" stroke="#eaa82c" stroke-width="1.6" stroke-linecap="round"/><line x1="393.8" y1="169.3" x2="399.9" y2="161.1" stroke="#eaa82c" stroke-width="1.6" stroke-linecap="round"/><line x1="504.7" y1="280.3" x2="486.5" y2="269.5" stroke="#eaa82c" stroke-width="1.6" stroke-linecap="round"/><line x1="504.7" y1="280.3" x2="511.5" y2="299.3" stroke="#eaa82c" stroke-width="1.6" stroke-linecap="round"/><line x1="504.7" y1="280.3" x2="510.8" y2="272.1" stroke="#eaa82c" stroke-width="1.6" stroke-linecap="round"/><line x1="503.7" y1="169.9" x2="485.5" y2="159.1" stroke="#eaa82c" stroke-width="1.6" stroke-linecap="round"/><line x1="503.7" y1="169.9" x2="510.6" y2="188.9" stroke="#eaa82c" stroke-width="1.6" stroke-linecap="round"/><line x1="503.7" y1="169.9" x2="509.8" y2="161.7" stroke="#eaa82c" stroke-width="1.6" stroke-linecap="round"/><circle cx="320.2" cy="349.3" r="8.3" fill="url(#gSm)"/><circle cx="319.3" cy="238.9" r="8.3" fill="url(#gSm)"/><circle cx="430.1" cy="349.9" r="8.3" fill="url(#gSm)"/><circle cx="429.2" cy="239.5" r="8.3" fill="url(#gSm)"/><circle cx="394.8" cy="279.7" r="8.3" fill="url(#gSm)"/><circle cx="393.8" cy="169.3" r="8.3" fill="url(#gSm)"/><circle cx="504.7" cy="280.3" r="8.3" fill="url(#gSm)"/><circle cx="503.7" cy="169.9" r="8.3" fill="url(#gSm)"/><line x1="337.4" y1="296.1" x2="344.9" y2="307.2" stroke="#eaa82c" stroke-width="1.6" stroke-linecap="round"/><line x1="372.5" y1="336.7" x2="362.5" y2="327.5" stroke="#eaa82c" stroke-width="1.6" stroke-linecap="round"/><line x1="336.5" y1="185.7" x2="344.0" y2="196.8" stroke="#eaa82c" stroke-width="1.6" stroke-linecap="round"/><line x1="371.6" y1="226.3" x2="361.5" y2="217.1" stroke="#eaa82c" stroke-width="1.6" stroke-linecap="round"/><line x1="447.3" y1="296.7" x2="454.8" y2="307.8" stroke="#eaa82c" stroke-width="1.6" stroke-linecap="round"/><line x1="482.4" y1="337.3" x2="472.4" y2="328.1" stroke="#eaa82c" stroke-width="1.6" stroke-linecap="round"/><line x1="446.4" y1="186.3" x2="453.9" y2="197.4" stroke="#eaa82c" stroke-width="1.6" stroke-linecap="round"/><line x1="481.5" y1="226.9" x2="471.4" y2="217.7" stroke="#eaa82c" stroke-width="1.6" stroke-linecap="round"/><line x1="337.4" y1="296.1" x2="347.9" y2="277.2" stroke="#eaa82c" stroke-width="1.6" stroke-linecap="round"/><line x1="337.4" y1="296.1" x2="318.0" y2="306.6" stroke="#eaa82c" stroke-width="1.6" stroke-linecap="round"/><line x1="337.4" y1="296.1" x2="344.2" y2="280.0" stroke="#eaa82c" stroke-width="1.6" stroke-linecap="round"/><line x1="337.4" y1="296.1" x2="348.7" y2="304.3" stroke="#eaa82c" stroke-width="1.6" stroke-linecap="round"/><line x1="336.5" y1="185.7" x2="347.0" y2="166.8" stroke="#eaa82c" stroke-width="1.6" stroke-linecap="round"/><line x1="336.5" y1="185.7" x2="317.1" y2="196.2" stroke="#eaa82c" stroke-width="1.6" stroke-linecap="round"/><line x1="336.5" y1="185.7" x2="343.2" y2="169.6" stroke="#eaa82c" stroke-width="1.6" stroke-linecap="round"/><line x1="336.5" y1="185.7" x2="347.7" y2="193.9" stroke="#eaa82c" stroke-width="1.6" stroke-linecap="round"/><line x1="447.3" y1="296.7" x2="457.8" y2="277.8" stroke="#eaa82c" stroke-width="1.6" stroke-linecap="round"/><line x1="447.3" y1="296.7" x2="427.9" y2="307.2" stroke="#eaa82c" stroke-width="1.6" stroke-linecap="round"/><line x1="447.3" y1="296.7" x2="454.1" y2="280.6" stroke="#eaa82c" stroke-width="1.6" stroke-linecap="round"/><line x1="447.3" y1="296.7" x2="458.6" y2="304.9" stroke="#eaa82c" stroke-width="1.6" stroke-linecap="round"/><line x1="446.4" y1="186.3" x2="456.9" y2="167.4" stroke="#eaa82c" stroke-width="1.6" stroke-linecap="round"/><line x1="446.4" y1="186.3" x2="427.0" y2="196.8" stroke="#eaa82c" stroke-width="1.6" stroke-linecap="round"/><line x1="446.4" y1="186.3" x2="453.1" y2="170.2" stroke="#eaa82c" stroke-width="1.6" stroke-linecap="round"/><line x1="446.4" y1="186.3" x2="457.6" y2="194.5" stroke="#eaa82c" stroke-width="1.6" stroke-linecap="round"/><line x1="372.5" y1="336.7" x2="365.9" y2="352.6" stroke="#eaa82c" stroke-width="1.6" stroke-linecap="round"/><line x1="372.5" y1="336.7" x2="390.5" y2="327.2" stroke="#eaa82c" stroke-width="1.6" stroke-linecap="round"/><line x1="372.5" y1="336.7" x2="362.2" y2="355.5" stroke="#eaa82c" stroke-width="1.6" stroke-linecap="round"/><line x1="372.5" y1="336.7" x2="366.2" y2="324.6" stroke="#eaa82c" stroke-width="1.6" stroke-linecap="round"/><line x1="371.6" y1="226.3" x2="365.0" y2="242.2" stroke="#eaa82c" stroke-width="1.6" stroke-linecap="round"/><line x1="371.6" y1="226.3" x2="389.6" y2="216.8" stroke="#eaa82c" stroke-width="1.6" stroke-linecap="round"/><line x1="371.6" y1="226.3" x2="361.2" y2="245.1" stroke="#eaa82c" stroke-width="1.6" stroke-linecap="round"/><line x1="371.6" y1="226.3" x2="365.3" y2="214.2" stroke="#eaa82c" stroke-width="1.6" stroke-linecap="round"/><line x1="482.4" y1="337.3" x2="475.8" y2="353.2" stroke="#eaa82c" stroke-width="1.6" stroke-linecap="round"/><line x1="482.4" y1="337.3" x2="500.4" y2="327.8" stroke="#eaa82c" stroke-width="1.6" stroke-linecap="round"/><line x1="482.4" y1="337.3" x2="472.1" y2="356.1" stroke="#eaa82c" stroke-width="1.6" stroke-linecap="round"/><line x1="482.4" y1="337.3" x2="476.1" y2="325.2" stroke="#eaa82c" stroke-width="1.6" stroke-linecap="round"/><line x1="481.5" y1="226.9" x2="474.9" y2="242.8" stroke="#eaa82c" stroke-width="1.6" stroke-linecap="round"/><line x1="481.5" y1="226.9" x2="499.5" y2="217.4" stroke="#eaa82c" stroke-width="1.6" stroke-linecap="round"/><line x1="481.5" y1="226.9" x2="471.1" y2="245.7" stroke="#eaa82c" stroke-width="1.6" stroke-linecap="round"/><line x1="481.5" y1="226.9" x2="475.2" y2="214.8" stroke="#eaa82c" stroke-width="1.6" stroke-linecap="round"/><circle cx="337.4" cy="296.1" r="8.3" fill="url(#gSm)"/><circle cx="336.5" cy="185.7" r="8.3" fill="url(#gSm)"/><circle cx="447.3" cy="296.7" r="8.3" fill="url(#gSm)"/><circle cx="446.4" cy="186.3" r="8.3" fill="url(#gSm)"/><circle cx="372.5" cy="336.7" r="8.3" fill="url(#gSm)"/><circle cx="371.6" cy="226.3" r="8.3" fill="url(#gSm)"/><circle cx="482.4" cy="337.3" r="8.3" fill="url(#gSm)"/><circle cx="481.5" cy="226.9" r="8.3" fill="url(#gSm)"/><line x1="298.6" y1="317.1" x2="309.4" y2="333.2" stroke="#eaa82c" stroke-width="1.6" stroke-linecap="round"/><line x1="297.7" y1="206.7" x2="308.5" y2="222.8" stroke="#eaa82c" stroke-width="1.6" stroke-linecap="round"/><line x1="408.5" y1="317.7" x2="419.3" y2="333.8" stroke="#eaa82c" stroke-width="1.6" stroke-linecap="round"/><line x1="407.6" y1="207.3" x2="418.4" y2="223.4" stroke="#eaa82c" stroke-width="1.6" stroke-linecap="round"/><line x1="408.5" y1="317.7" x2="401.6" y2="298.7" stroke="#eaa82c" stroke-width="1.6" stroke-linecap="round"/><line x1="407.6" y1="207.3" x2="400.7" y2="188.3" stroke="#eaa82c" stroke-width="1.6" stroke-linecap="round"/><line x1="518.4" y1="318.3" x2="511.5" y2="299.3" stroke="#eaa82c" stroke-width="1.6" stroke-linecap="round"/><line x1="517.5" y1="207.9" x2="510.6" y2="188.9" stroke="#eaa82c" stroke-width="1.6" stroke-linecap="round"/><line x1="298.6" y1="317.1" x2="318.0" y2="306.6" stroke="#eaa82c" stroke-width="1.6" stroke-linecap="round"/><line x1="297.7" y1="206.7" x2="317.1" y2="196.2" stroke="#eaa82c" stroke-width="1.6" stroke-linecap="round"/><line x1="408.5" y1="317.7" x2="427.9" y2="307.2" stroke="#eaa82c" stroke-width="1.6" stroke-linecap="round"/><line x1="407.6" y1="207.3" x2="427.0" y2="196.8" stroke="#eaa82c" stroke-width="1.6" stroke-linecap="round"/><line x1="408.5" y1="317.7" x2="390.5" y2="327.2" stroke="#eaa82c" stroke-width="1.6" stroke-linecap="round"/><line x1="407.6" y1="207.3" x2="389.6" y2="216.8" stroke="#eaa82c" stroke-width="1.6" stroke-linecap="round"/><line x1="518.4" y1="318.3" x2="500.4" y2="327.8" stroke="#eaa82c" stroke-width="1.6" stroke-linecap="round"/><line x1="517.5" y1="207.9" x2="499.5" y2="217.4" stroke="#eaa82c" stroke-width="1.6" stroke-linecap="round"/><line x1="298.6" y1="317.1" x2="314.3" y2="327.3" stroke="#eaa82c" stroke-width="1.6" stroke-linecap="round"/><line x1="297.7" y1="206.7" x2="313.4" y2="216.9" stroke="#eaa82c" stroke-width="1.6" stroke-linecap="round"/><line x1="408.5" y1="317.7" x2="424.2" y2="327.9" stroke="#eaa82c" stroke-width="1.6" stroke-linecap="round"/><line x1="407.6" y1="207.3" x2="423.3" y2="217.5" stroke="#eaa82c" stroke-width="1.6" stroke-linecap="round"/><line x1="408.5" y1="317.7" x2="389.2" y2="310.3" stroke="#eaa82c" stroke-width="1.6" stroke-linecap="round"/><line x1="407.6" y1="207.3" x2="388.3" y2="199.9" stroke="#eaa82c" stroke-width="1.6" stroke-linecap="round"/><line x1="518.4" y1="318.3" x2="499.1" y2="310.9" stroke="#eaa82c" stroke-width="1.6" stroke-linecap="round"/><line x1="517.5" y1="207.9" x2="498.2" y2="200.5" stroke="#eaa82c" stroke-width="1.6" stroke-linecap="round"/><circle cx="298.6" cy="317.1" r="4.5" fill="url(#gNm)"/><circle cx="297.7" cy="206.7" r="4.5" fill="url(#gNm)"/><circle cx="408.5" cy="317.7" r="4.5" fill="url(#gNm)"/><circle cx="407.6" cy="207.3" r="4.5" fill="url(#gNm)"/><circle cx="518.4" cy="318.3" r="4.5" fill="url(#gNm)"/><circle cx="517.5" cy="207.9" r="4.5" fill="url(#gNm)"/><line x1="305.5" y1="367.5" x2="290.5" y2="378.8" stroke="#b7b7b7" stroke-width="1.0"/><line x1="304.6" y1="257.1" x2="289.6" y2="268.4" stroke="#b7b7b7" stroke-width="1.0"/><line x1="303.6" y1="146.7" x2="288.6" y2="158.0" stroke="#b7b7b7" stroke-width="1.0"/><line x1="415.4" y1="368.1" x2="400.4" y2="379.4" stroke="#b7b7b7" stroke-width="1.0"/><line x1="414.4" y1="257.7" x2="399.4" y2="269.0" stroke="#b7b7b7" stroke-width="1.0"/><line x1="413.5" y1="147.3" x2="398.5" y2="158.6" stroke="#b7b7b7" stroke-width="1.0"/><line x1="525.3" y1="368.7" x2="510.3" y2="380.0" stroke="#b7b7b7" stroke-width="1.0"/><line x1="524.3" y1="258.3" x2="509.3" y2="269.6" stroke="#b7b7b7" stroke-width="1.0"/><line x1="523.4" y1="147.9" x2="508.4" y2="159.2" stroke="#b7b7b7" stroke-width="1.0"/><line x1="352.5" y1="318.2" x2="344.9" y2="307.2" stroke="#eaa82c" stroke-width="1.6" stroke-linecap="round"/><line x1="352.5" y1="318.2" x2="362.5" y2="327.5" stroke="#eaa82c" stroke-width="1.6" stroke-linecap="round"/><line x1="352.5" y1="318.2" x2="341.3" y2="327.9" stroke="#eaa82c" stroke-width="1.6" stroke-linecap="round"/><line x1="352.5" y1="318.2" x2="361.2" y2="310.5" stroke="#eaa82c" stroke-width="1.6" stroke-linecap="round"/><line x1="351.5" y1="207.8" x2="344.0" y2="196.8" stroke="#eaa82c" stroke-width="1.6" stroke-linecap="round"/><line x1="351.5" y1="207.8" x2="361.5" y2="217.1" stroke="#eaa82c" stroke-width="1.6" stroke-linecap="round"/><line x1="351.5" y1="207.8" x2="340.3" y2="217.5" stroke="#eaa82c" stroke-width="1.6" stroke-linecap="round"/><line x1="351.5" y1="207.8" x2="360.3" y2="200.1" stroke="#eaa82c" stroke-width="1.6" stroke-linecap="round"/><line x1="462.4" y1="318.8" x2="454.8" y2="307.8" stroke="#eaa82c" stroke-width="1.6" stroke-linecap="round"/><line x1="462.4" y1="318.8" x2="472.4" y2="328.1" stroke="#eaa82c" stroke-width="1.6" stroke-linecap="round"/><line x1="462.4" y1="318.8" x2="451.2" y2="328.5" stroke="#eaa82c" stroke-width="1.6" stroke-linecap="round"/><line x1="462.4" y1="318.8" x2="471.1" y2="311.1" stroke="#eaa82c" stroke-width="1.6" stroke-linecap="round"/><line x1="461.4" y1="208.4" x2="453.9" y2="197.4" stroke="#eaa82c" stroke-width="1.6" stroke-linecap="round"/><line x1="461.4" y1="208.4" x2="471.4" y2="217.7" stroke="#eaa82c" stroke-width="1.6" stroke-linecap="round"/><line x1="461.4" y1="208.4" x2="450.2" y2="218.1" stroke="#eaa82c" stroke-width="1.6" stroke-linecap="round"/><line x1="461.4" y1="208.4" x2="470.2" y2="200.7" stroke="#eaa82c" stroke-width="1.6" stroke-linecap="round"/><line x1="298.0" y1="373.1" x2="309.1" y2="361.2" stroke="#eaa82c" stroke-width="1.6" stroke-linecap="round"/><line x1="297.1" y1="262.8" x2="308.2" y2="250.8" stroke="#eaa82c" stroke-width="1.6" stroke-linecap="round"/><line x1="407.9" y1="373.8" x2="419.0" y2="361.8" stroke="#eaa82c" stroke-width="1.6" stroke-linecap="round"/><line x1="406.9" y1="263.4" x2="418.1" y2="251.4" stroke="#eaa82c" stroke-width="1.6" stroke-linecap="round"/><line x1="406.9" y1="263.4" x2="400.9" y2="271.5" stroke="#eaa82c" stroke-width="1.6" stroke-linecap="round"/><line x1="406.0" y1="153.0" x2="399.9" y2="161.1" stroke="#eaa82c" stroke-width="1.6" stroke-linecap="round"/><line x1="516.8" y1="263.9" x2="510.8" y2="272.1" stroke="#eaa82c" stroke-width="1.6" stroke-linecap="round"/><line x1="515.9" y1="153.5" x2="509.8" y2="161.7" stroke="#eaa82c" stroke-width="1.6" stroke-linecap="round"/><line x1="297.1" y1="262.8" x2="304.7" y2="273.4" stroke="#eaa82c" stroke-width="1.6" stroke-linecap="round"/><line x1="296.1" y1="152.3" x2="303.7" y2="163.0" stroke="#eaa82c" stroke-width="1.6" stroke-linecap="round"/><line x1="406.9" y1="263.4" x2="414.6" y2="274.0" stroke="#eaa82c" stroke-width="1.6" stroke-linecap="round"/><line x1="406.0" y1="153.0" x2="413.6" y2="163.6" stroke="#eaa82c" stroke-width="1.6" stroke-linecap="round"/><line x1="407.9" y1="373.8" x2="395.3" y2="366.9" stroke="#eaa82c" stroke-width="1.6" stroke-linecap="round"/><line x1="406.9" y1="263.4" x2="394.3" y2="256.5" stroke="#eaa82c" stroke-width="1.6" stroke-linecap="round"/><line x1="517.8" y1="374.3" x2="505.2" y2="367.5" stroke="#eaa82c" stroke-width="1.6" stroke-linecap="round"/><line x1="516.8" y1="263.9" x2="504.2" y2="257.1" stroke="#eaa82c" stroke-width="1.6" stroke-linecap="round"/><circle cx="352.5" cy="318.2" r="3.6" fill="url(#gPm)"/><circle cx="351.5" cy="207.8" r="3.6" fill="url(#gPm)"/><circle cx="462.4" cy="318.8" r="3.6" fill="url(#gPm)"/><circle cx="461.4" cy="208.4" r="3.6" fill="url(#gPm)"/><circle cx="298.0" cy="373.1" r="4.5" fill="url(#gNm)"/><circle cx="297.1" cy="262.8" r="4.5" fill="url(#gNm)"/><circle cx="296.1" cy="152.3" r="4.5" fill="url(#gNm)"/><circle cx="407.9" cy="373.8" r="4.5" fill="url(#gNm)"/><circle cx="406.9" cy="263.4" r="4.5" fill="url(#gNm)"/><circle cx="406.0" cy="153.0" r="4.5" fill="url(#gNm)"/><circle cx="517.8" cy="374.3" r="4.5" fill="url(#gNm)"/><circle cx="516.8" cy="263.9" r="4.5" fill="url(#gNm)"/><circle cx="515.9" cy="153.5" r="4.5" fill="url(#gNm)"/><line x1="350.9" y1="263.9" x2="331.6" y2="274.0" stroke="#eaa82c" stroke-width="1.6" stroke-linecap="round"/><line x1="350.0" y1="153.5" x2="330.6" y2="163.6" stroke="#eaa82c" stroke-width="1.6" stroke-linecap="round"/><line x1="460.8" y1="264.5" x2="441.5" y2="274.6" stroke="#eaa82c" stroke-width="1.6" stroke-linecap="round"/><line x1="459.9" y1="154.1" x2="440.5" y2="164.2" stroke="#eaa82c" stroke-width="1.6" stroke-linecap="round"/><line x1="351.9" y1="374.3" x2="367.2" y2="367.1" stroke="#eaa82c" stroke-width="1.6" stroke-linecap="round"/><line x1="350.9" y1="263.9" x2="366.3" y2="256.7" stroke="#eaa82c" stroke-width="1.6" stroke-linecap="round"/><line x1="461.8" y1="374.9" x2="477.1" y2="367.7" stroke="#eaa82c" stroke-width="1.6" stroke-linecap="round"/><line x1="460.8" y1="264.5" x2="476.2" y2="257.3" stroke="#eaa82c" stroke-width="1.6" stroke-linecap="round"/><line x1="350.9" y1="263.9" x2="344.2" y2="280.0" stroke="#eaa82c" stroke-width="1.6" stroke-linecap="round"/><line x1="350.0" y1="153.5" x2="343.2" y2="169.6" stroke="#eaa82c" stroke-width="1.6" stroke-linecap="round"/><line x1="460.8" y1="264.5" x2="454.1" y2="280.6" stroke="#eaa82c" stroke-width="1.6" stroke-linecap="round"/><line x1="459.9" y1="154.1" x2="453.1" y2="170.2" stroke="#eaa82c" stroke-width="1.6" stroke-linecap="round"/><line x1="351.9" y1="374.3" x2="362.2" y2="355.5" stroke="#eaa82c" stroke-width="1.6" stroke-linecap="round"/><line x1="350.9" y1="263.9" x2="361.2" y2="245.1" stroke="#eaa82c" stroke-width="1.6" stroke-linecap="round"/><line x1="461.8" y1="374.9" x2="472.1" y2="356.1" stroke="#eaa82c" stroke-width="1.6" stroke-linecap="round"/><line x1="460.8" y1="264.5" x2="471.1" y2="245.7" stroke="#eaa82c" stroke-width="1.6" stroke-linecap="round"/><line x1="351.9" y1="374.3" x2="340.9" y2="355.9" stroke="#eaa82c" stroke-width="1.6" stroke-linecap="round"/><line x1="350.9" y1="263.9" x2="340.0" y2="245.5" stroke="#eaa82c" stroke-width="1.6" stroke-linecap="round"/><line x1="461.8" y1="374.9" x2="450.8" y2="356.5" stroke="#eaa82c" stroke-width="1.6" stroke-linecap="round"/><line x1="460.8" y1="264.5" x2="449.9" y2="246.1" stroke="#eaa82c" stroke-width="1.6" stroke-linecap="round"/><line x1="350.9" y1="263.9" x2="360.4" y2="283.3" stroke="#eaa82c" stroke-width="1.6" stroke-linecap="round"/><line x1="350.0" y1="153.5" x2="359.5" y2="172.9" stroke="#eaa82c" stroke-width="1.6" stroke-linecap="round"/><line x1="460.8" y1="264.5" x2="470.3" y2="283.9" stroke="#eaa82c" stroke-width="1.6" stroke-linecap="round"/><line x1="459.9" y1="154.1" x2="469.4" y2="173.5" stroke="#eaa82c" stroke-width="1.6" stroke-linecap="round"/><circle cx="351.9" cy="374.3" r="4.5" fill="url(#gNm)"/><circle cx="350.9" cy="263.9" r="4.5" fill="url(#gNm)"/><circle cx="350.0" cy="153.5" r="4.5" fill="url(#gNm)"/><circle cx="461.8" cy="374.9" r="4.5" fill="url(#gNm)"/><circle cx="460.8" cy="264.5" r="4.5" fill="url(#gNm)"/><circle cx="459.9" cy="154.1" r="4.5" fill="url(#gNm)"/><line x1="330.0" y1="337.5" x2="341.3" y2="327.9" stroke="#eaa82c" stroke-width="1.6" stroke-linecap="round"/><line x1="369.9" y1="302.8" x2="361.2" y2="310.5" stroke="#eaa82c" stroke-width="1.6" stroke-linecap="round"/><line x1="329.1" y1="227.1" x2="340.3" y2="217.5" stroke="#eaa82c" stroke-width="1.6" stroke-linecap="round"/><line x1="369.0" y1="192.4" x2="360.3" y2="200.1" stroke="#eaa82c" stroke-width="1.6" stroke-linecap="round"/><line x1="439.9" y1="338.1" x2="451.2" y2="328.5" stroke="#eaa82c" stroke-width="1.6" stroke-linecap="round"/><line x1="479.8" y1="303.4" x2="471.1" y2="311.1" stroke="#eaa82c" stroke-width="1.6" stroke-linecap="round"/><line x1="439.0" y1="227.7" x2="450.2" y2="218.1" stroke="#eaa82c" stroke-width="1.6" stroke-linecap="round"/><line x1="478.9" y1="193.0" x2="470.2" y2="200.7" stroke="#eaa82c" stroke-width="1.6" stroke-linecap="round"/><line x1="330.0" y1="337.5" x2="310.6" y2="330.1" stroke="#eaa82c" stroke-width="1.6" stroke-linecap="round"/><line x1="330.0" y1="337.5" x2="314.3" y2="327.3" stroke="#eaa82c" stroke-width="1.6" stroke-linecap="round"/><line x1="330.0" y1="337.5" x2="340.9" y2="355.9" stroke="#eaa82c" stroke-width="1.6" stroke-linecap="round"/><line x1="330.0" y1="337.5" x2="337.5" y2="330.7" stroke="#eaa82c" stroke-width="1.6" stroke-linecap="round"/><line x1="329.1" y1="227.1" x2="309.6" y2="219.7" stroke="#eaa82c" stroke-width="1.6" stroke-linecap="round"/><line x1="329.1" y1="227.1" x2="313.4" y2="216.9" stroke="#eaa82c" stroke-width="1.6" stroke-linecap="round"/><line x1="329.1" y1="227.1" x2="340.0" y2="245.5" stroke="#eaa82c" stroke-width="1.6" stroke-linecap="round"/><line x1="329.1" y1="227.1" x2="336.6" y2="220.3" stroke="#eaa82c" stroke-width="1.6" stroke-linecap="round"/><line x1="439.9" y1="338.1" x2="420.5" y2="330.7" stroke="#eaa82c" stroke-width="1.6" stroke-linecap="round"/><line x1="439.9" y1="338.1" x2="424.2" y2="327.9" stroke="#eaa82c" stroke-width="1.6" stroke-linecap="round"/><line x1="439.9" y1="338.1" x2="450.8" y2="356.5" stroke="#eaa82c" stroke-width="1.6" stroke-linecap="round"/><line x1="439.9" y1="338.1" x2="447.4" y2="331.3" stroke="#eaa82c" stroke-width="1.6" stroke-linecap="round"/><line x1="439.0" y1="227.7" x2="419.5" y2="220.3" stroke="#eaa82c" stroke-width="1.6" stroke-linecap="round"/><line x1="439.0" y1="227.7" x2="423.3" y2="217.5" stroke="#eaa82c" stroke-width="1.6" stroke-linecap="round"/><line x1="439.0" y1="227.7" x2="449.9" y2="246.1" stroke="#eaa82c" stroke-width="1.6" stroke-linecap="round"/><line x1="439.0" y1="227.7" x2="446.5" y2="220.9" stroke="#eaa82c" stroke-width="1.6" stroke-linecap="round"/><line x1="369.9" y1="302.8" x2="385.5" y2="313.1" stroke="#eaa82c" stroke-width="1.6" stroke-linecap="round"/><line x1="369.9" y1="302.8" x2="389.2" y2="310.3" stroke="#eaa82c" stroke-width="1.6" stroke-linecap="round"/><line x1="369.9" y1="302.8" x2="360.4" y2="283.3" stroke="#eaa82c" stroke-width="1.6" stroke-linecap="round"/><line x1="369.9" y1="302.8" x2="357.5" y2="313.3" stroke="#eaa82c" stroke-width="1.6" stroke-linecap="round"/><line x1="369.0" y1="192.4" x2="384.5" y2="202.7" stroke="#eaa82c" stroke-width="1.6" stroke-linecap="round"/><line x1="369.0" y1="192.4" x2="388.3" y2="199.9" stroke="#eaa82c" stroke-width="1.6" stroke-linecap="round"/><line x1="369.0" y1="192.4" x2="359.5" y2="172.9" stroke="#eaa82c" stroke-width="1.6" stroke-linecap="round"/><line x1="369.0" y1="192.4" x2="356.5" y2="202.9" stroke="#eaa82c" stroke-width="1.6" stroke-linecap="round"/><line x1="479.8" y1="303.4" x2="495.4" y2="313.7" stroke="#eaa82c" stroke-width="1.6" stroke-linecap="round"/><line x1="479.8" y1="303.4" x2="499.1" y2="310.9" stroke="#eaa82c" stroke-width="1.6" stroke-linecap="round"/><line x1="479.8" y1="303.4" x2="470.3" y2="283.9" stroke="#eaa82c" stroke-width="1.6" stroke-linecap="round"/><line x1="479.8" y1="303.4" x2="467.4" y2="313.9" stroke="#eaa82c" stroke-width="1.6" stroke-linecap="round"/><line x1="478.9" y1="193.0" x2="494.4" y2="203.3" stroke="#eaa82c" stroke-width="1.6" stroke-linecap="round"/><line x1="478.9" y1="193.0" x2="498.2" y2="200.5" stroke="#eaa82c" stroke-width="1.6" stroke-linecap="round"/><line x1="478.9" y1="193.0" x2="469.4" y2="173.5" stroke="#eaa82c" stroke-width="1.6" stroke-linecap="round"/><line x1="478.9" y1="193.0" x2="466.4" y2="203.5" stroke="#eaa82c" stroke-width="1.6" stroke-linecap="round"/><circle cx="330.0" cy="337.5" r="8.3" fill="url(#gSm)"/><circle cx="329.1" cy="227.1" r="8.3" fill="url(#gSm)"/><circle cx="439.9" cy="338.1" r="8.3" fill="url(#gSm)"/><circle cx="439.0" cy="227.7" r="8.3" fill="url(#gSm)"/><circle cx="369.9" cy="302.8" r="8.3" fill="url(#gSm)"/><circle cx="369.0" cy="192.4" r="8.3" fill="url(#gSm)"/><circle cx="479.8" cy="303.4" r="8.3" fill="url(#gSm)"/><circle cx="478.9" cy="193.0" r="8.3" fill="url(#gSm)"/><line x1="312.3" y1="284.1" x2="300.9" y2="276.2" stroke="#eaa82c" stroke-width="1.6" stroke-linecap="round"/><line x1="311.3" y1="173.7" x2="300.0" y2="165.8" stroke="#eaa82c" stroke-width="1.6" stroke-linecap="round"/><line x1="382.6" y1="360.0" x2="391.5" y2="369.7" stroke="#eaa82c" stroke-width="1.6" stroke-linecap="round"/><line x1="422.2" y1="284.7" x2="410.8" y2="276.8" stroke="#eaa82c" stroke-width="1.6" stroke-linecap="round"/><line x1="381.7" y1="249.6" x2="390.6" y2="259.3" stroke="#eaa82c" stroke-width="1.6" stroke-linecap="round"/><line x1="421.2" y1="174.3" x2="409.9" y2="166.4" stroke="#eaa82c" stroke-width="1.6" stroke-linecap="round"/><line x1="492.5" y1="360.6" x2="501.4" y2="370.3" stroke="#eaa82c" stroke-width="1.6" stroke-linecap="round"/><line x1="491.6" y1="250.2" x2="500.5" y2="259.9" stroke="#eaa82c" stroke-width="1.6" stroke-linecap="round"/><line x1="312.3" y1="284.1" x2="327.8" y2="276.8" stroke="#eaa82c" stroke-width="1.6" stroke-linecap="round"/><line x1="312.3" y1="284.1" x2="301.7" y2="303.4" stroke="#eaa82c" stroke-width="1.6" stroke-linecap="round"/><line x1="312.3" y1="284.1" x2="331.6" y2="274.0" stroke="#eaa82c" stroke-width="1.6" stroke-linecap="round"/><line x1="312.3" y1="284.1" x2="304.7" y2="273.4" stroke="#eaa82c" stroke-width="1.6" stroke-linecap="round"/><line x1="311.3" y1="173.7" x2="326.9" y2="166.4" stroke="#eaa82c" stroke-width="1.6" stroke-linecap="round"/><line x1="311.3" y1="173.7" x2="300.8" y2="193.0" stroke="#eaa82c" stroke-width="1.6" stroke-linecap="round"/><line x1="311.3" y1="173.7" x2="330.6" y2="163.6" stroke="#eaa82c" stroke-width="1.6" stroke-linecap="round"/><line x1="311.3" y1="173.7" x2="303.7" y2="163.0" stroke="#eaa82c" stroke-width="1.6" stroke-linecap="round"/><line x1="422.2" y1="284.7" x2="437.7" y2="277.4" stroke="#eaa82c" stroke-width="1.6" stroke-linecap="round"/><line x1="422.2" y1="284.7" x2="411.6" y2="304.0" stroke="#eaa82c" stroke-width="1.6" stroke-linecap="round"/><line x1="422.2" y1="284.7" x2="441.5" y2="274.6" stroke="#eaa82c" stroke-width="1.6" stroke-linecap="round"/><line x1="422.2" y1="284.7" x2="414.6" y2="274.0" stroke="#eaa82c" stroke-width="1.6" stroke-linecap="round"/><line x1="421.2" y1="174.3" x2="436.8" y2="167.0" stroke="#eaa82c" stroke-width="1.6" stroke-linecap="round"/><line x1="421.2" y1="174.3" x2="410.7" y2="193.6" stroke="#eaa82c" stroke-width="1.6" stroke-linecap="round"/><line x1="421.2" y1="174.3" x2="440.5" y2="164.2" stroke="#eaa82c" stroke-width="1.6" stroke-linecap="round"/><line x1="421.2" y1="174.3" x2="413.6" y2="163.6" stroke="#eaa82c" stroke-width="1.6" stroke-linecap="round"/><line x1="382.6" y1="360.0" x2="363.5" y2="369.9" stroke="#eaa82c" stroke-width="1.6" stroke-linecap="round"/><line x1="382.6" y1="360.0" x2="391.8" y2="341.7" stroke="#eaa82c" stroke-width="1.6" stroke-linecap="round"/><line x1="382.6" y1="360.0" x2="367.2" y2="367.1" stroke="#eaa82c" stroke-width="1.6" stroke-linecap="round"/><line x1="382.6" y1="360.0" x2="395.3" y2="366.9" stroke="#eaa82c" stroke-width="1.6" stroke-linecap="round"/><line x1="381.7" y1="249.6" x2="362.5" y2="259.5" stroke="#eaa82c" stroke-width="1.6" stroke-linecap="round"/><line x1="381.7" y1="249.6" x2="390.9" y2="231.3" stroke="#eaa82c" stroke-width="1.6" stroke-linecap="round"/><line x1="381.7" y1="249.6" x2="366.3" y2="256.7" stroke="#eaa82c" stroke-width="1.6" stroke-linecap="round"/><line x1="381.7" y1="249.6" x2="394.3" y2="256.5" stroke="#eaa82c" stroke-width="1.6" stroke-linecap="round"/><line x1="492.5" y1="360.6" x2="473.4" y2="370.5" stroke="#eaa82c" stroke-width="1.6" stroke-linecap="round"/><line x1="492.5" y1="360.6" x2="501.7" y2="342.3" stroke="#eaa82c" stroke-width="1.6" stroke-linecap="round"/><line x1="492.5" y1="360.6" x2="477.1" y2="367.7" stroke="#eaa82c" stroke-width="1.6" stroke-linecap="round"/><line x1="492.5" y1="360.6" x2="505.2" y2="367.5" stroke="#eaa82c" stroke-width="1.6" stroke-linecap="round"/><line x1="491.6" y1="250.2" x2="472.4" y2="260.1" stroke="#eaa82c" stroke-width="1.6" stroke-linecap="round"/><line x1="491.6" y1="250.2" x2="500.8" y2="231.9" stroke="#eaa82c" stroke-width="1.6" stroke-linecap="round"/><line x1="491.6" y1="250.2" x2="476.2" y2="257.3" stroke="#eaa82c" stroke-width="1.6" stroke-linecap="round"/><line x1="491.6" y1="250.2" x2="504.2" y2="257.1" stroke="#eaa82c" stroke-width="1.6" stroke-linecap="round"/><circle cx="312.3" cy="284.1" r="8.3" fill="url(#gSm)"/><circle cx="311.3" cy="173.7" r="8.3" fill="url(#gSm)"/><circle cx="422.2" cy="284.7" r="8.3" fill="url(#gSm)"/><circle cx="421.2" cy="174.3" r="8.3" fill="url(#gSm)"/><circle cx="382.6" cy="360.0" r="8.3" fill="url(#gSm)"/><circle cx="381.7" cy="249.6" r="8.3" fill="url(#gSm)"/><circle cx="492.5" cy="360.6" r="8.3" fill="url(#gSm)"/><circle cx="491.6" cy="250.2" r="8.3" fill="url(#gSm)"/><line x1="291.1" y1="322.8" x2="298.2" y2="341.7" stroke="#eaa82c" stroke-width="1.6" stroke-linecap="round"/><line x1="290.2" y1="212.4" x2="297.2" y2="231.3" stroke="#eaa82c" stroke-width="1.6" stroke-linecap="round"/><line x1="401.0" y1="323.4" x2="408.1" y2="342.3" stroke="#eaa82c" stroke-width="1.6" stroke-linecap="round"/><line x1="400.1" y1="213.0" x2="407.1" y2="231.9" stroke="#eaa82c" stroke-width="1.6" stroke-linecap="round"/><line x1="401.0" y1="323.4" x2="390.4" y2="307.2" stroke="#eaa82c" stroke-width="1.6" stroke-linecap="round"/><line x1="400.1" y1="213.0" x2="389.4" y2="196.8" stroke="#eaa82c" stroke-width="1.6" stroke-linecap="round"/><line x1="510.9" y1="324.0" x2="500.3" y2="307.8" stroke="#eaa82c" stroke-width="1.6" stroke-linecap="round"/><line x1="510.0" y1="213.6" x2="499.3" y2="197.4" stroke="#eaa82c" stroke-width="1.6" stroke-linecap="round"/><line x1="291.1" y1="322.8" x2="301.7" y2="303.4" stroke="#eaa82c" stroke-width="1.6" stroke-linecap="round"/><line x1="290.2" y1="212.4" x2="300.8" y2="193.0" stroke="#eaa82c" stroke-width="1.6" stroke-linecap="round"/><line x1="401.0" y1="323.4" x2="411.6" y2="304.0" stroke="#eaa82c" stroke-width="1.6" stroke-linecap="round"/><line x1="400.1" y1="213.0" x2="410.7" y2="193.6" stroke="#eaa82c" stroke-width="1.6" stroke-linecap="round"/><line x1="401.0" y1="323.4" x2="391.8" y2="341.7" stroke="#eaa82c" stroke-width="1.6" stroke-linecap="round"/><line x1="400.1" y1="213.0" x2="390.9" y2="231.3" stroke="#eaa82c" stroke-width="1.6" stroke-linecap="round"/><line x1="510.9" y1="324.0" x2="501.7" y2="342.3" stroke="#eaa82c" stroke-width="1.6" stroke-linecap="round"/><line x1="510.0" y1="213.6" x2="500.8" y2="231.9" stroke="#eaa82c" stroke-width="1.6" stroke-linecap="round"/><line x1="291.1" y1="322.8" x2="310.6" y2="330.1" stroke="#eaa82c" stroke-width="1.6" stroke-linecap="round"/><line x1="290.2" y1="212.4" x2="309.6" y2="219.7" stroke="#eaa82c" stroke-width="1.6" stroke-linecap="round"/><line x1="401.0" y1="323.4" x2="420.5" y2="330.7" stroke="#eaa82c" stroke-width="1.6" stroke-linecap="round"/><line x1="400.1" y1="213.0" x2="419.5" y2="220.3" stroke="#eaa82c" stroke-width="1.6" stroke-linecap="round"/><line x1="401.0" y1="323.4" x2="385.5" y2="313.1" stroke="#eaa82c" stroke-width="1.6" stroke-linecap="round"/><line x1="400.1" y1="213.0" x2="384.5" y2="202.7" stroke="#eaa82c" stroke-width="1.6" stroke-linecap="round"/><line x1="510.9" y1="324.0" x2="495.4" y2="313.7" stroke="#eaa82c" stroke-width="1.6" stroke-linecap="round"/><line x1="510.0" y1="213.6" x2="494.4" y2="203.3" stroke="#eaa82c" stroke-width="1.6" stroke-linecap="round"/><circle cx="291.1" cy="322.8" r="4.5" fill="url(#gNm)"/><circle cx="290.2" cy="212.4" r="4.5" fill="url(#gNm)"/><circle cx="401.0" cy="323.4" r="4.5" fill="url(#gNm)"/><circle cx="400.1" cy="213.0" r="4.5" fill="url(#gNm)"/><circle cx="510.9" cy="324.0" r="4.5" fill="url(#gNm)"/><circle cx="510.0" cy="213.6" r="4.5" fill="url(#gNm)"/><line x1="290.5" y1="378.8" x2="400.4" y2="379.4" stroke="#c7c7c7" stroke-width="1.0"/><line x1="290.5" y1="378.8" x2="289.6" y2="268.4" stroke="#c7c7c7" stroke-width="1.0"/><line x1="289.6" y1="268.4" x2="399.4" y2="269.0" stroke="#c7c7c7" stroke-width="1.0"/><line x1="289.6" y1="268.4" x2="288.6" y2="158.0" stroke="#c7c7c7" stroke-width="1.0"/><line x1="288.6" y1="158.0" x2="398.5" y2="158.6" stroke="#c7c7c7" stroke-width="1.0"/><line x1="400.4" y1="379.4" x2="510.3" y2="380.0" stroke="#c7c7c7" stroke-width="1.0"/><line x1="400.4" y1="379.4" x2="399.4" y2="269.0" stroke="#c7c7c7" stroke-width="1.0"/><line x1="399.4" y1="269.0" x2="509.3" y2="269.6" stroke="#c7c7c7" stroke-width="1.0"/><line x1="399.4" y1="269.0" x2="398.5" y2="158.6" stroke="#c7c7c7" stroke-width="1.0"/><line x1="398.5" y1="158.6" x2="508.4" y2="159.2" stroke="#c7c7c7" stroke-width="1.0"/><line x1="510.3" y1="380.0" x2="509.3" y2="269.6" stroke="#c7c7c7" stroke-width="1.0"/><line x1="509.3" y1="269.6" x2="508.4" y2="159.2" stroke="#c7c7c7" stroke-width="1.0"/><line x1="290.5" y1="378.8" x2="297.9" y2="369.7" stroke="#eaa82c" stroke-width="1.6" stroke-linecap="round"/><line x1="289.6" y1="268.4" x2="296.9" y2="259.3" stroke="#eaa82c" stroke-width="1.6" stroke-linecap="round"/><line x1="289.6" y1="268.4" x2="300.9" y2="276.2" stroke="#eaa82c" stroke-width="1.6" stroke-linecap="round"/><line x1="288.6" y1="158.0" x2="300.0" y2="165.8" stroke="#eaa82c" stroke-width="1.6" stroke-linecap="round"/><line x1="400.4" y1="379.4" x2="407.8" y2="370.3" stroke="#eaa82c" stroke-width="1.6" stroke-linecap="round"/><line x1="400.4" y1="379.4" x2="391.5" y2="369.7" stroke="#eaa82c" stroke-width="1.6" stroke-linecap="round"/><line x1="399.4" y1="269.0" x2="406.8" y2="259.9" stroke="#eaa82c" stroke-width="1.6" stroke-linecap="round"/><line x1="399.4" y1="269.0" x2="389.6" y2="280.0" stroke="#eaa82c" stroke-width="1.6" stroke-linecap="round"/><line x1="399.4" y1="269.0" x2="410.8" y2="276.8" stroke="#eaa82c" stroke-width="1.6" stroke-linecap="round"/><line x1="399.4" y1="269.0" x2="390.6" y2="259.3" stroke="#eaa82c" stroke-width="1.6" stroke-linecap="round"/><line x1="398.5" y1="158.6" x2="388.7" y2="169.6" stroke="#eaa82c" stroke-width="1.6" stroke-linecap="round"/><line x1="398.5" y1="158.6" x2="409.9" y2="166.4" stroke="#eaa82c" stroke-width="1.6" stroke-linecap="round"/><line x1="510.3" y1="380.0" x2="501.4" y2="370.3" stroke="#eaa82c" stroke-width="1.6" stroke-linecap="round"/><line x1="509.3" y1="269.6" x2="499.5" y2="280.6" stroke="#eaa82c" stroke-width="1.6" stroke-linecap="round"/><line x1="509.3" y1="269.6" x2="500.5" y2="259.9" stroke="#eaa82c" stroke-width="1.6" stroke-linecap="round"/><line x1="508.4" y1="159.2" x2="498.6" y2="170.2" stroke="#eaa82c" stroke-width="1.6" stroke-linecap="round"/><line x1="345.0" y1="323.9" x2="333.7" y2="315.6" stroke="#eaa82c" stroke-width="1.6" stroke-linecap="round"/><line x1="344.0" y1="213.5" x2="332.7" y2="205.2" stroke="#eaa82c" stroke-width="1.6" stroke-linecap="round"/><line x1="454.9" y1="324.5" x2="443.6" y2="316.2" stroke="#eaa82c" stroke-width="1.6" stroke-linecap="round"/><line x1="453.9" y1="214.1" x2="442.6" y2="205.8" stroke="#eaa82c" stroke-width="1.6" stroke-linecap="round"/><line x1="345.0" y1="323.9" x2="351.2" y2="335.9" stroke="#eaa82c" stroke-width="1.6" stroke-linecap="round"/><line x1="344.0" y1="213.5" x2="350.3" y2="225.5" stroke="#eaa82c" stroke-width="1.6" stroke-linecap="round"/><line x1="454.9" y1="324.5" x2="461.1" y2="336.5" stroke="#eaa82c" stroke-width="1.6" stroke-linecap="round"/><line x1="453.9" y1="214.1" x2="460.2" y2="226.1" stroke="#eaa82c" stroke-width="1.6" stroke-linecap="round"/><line x1="345.0" y1="323.9" x2="337.5" y2="330.7" stroke="#eaa82c" stroke-width="1.6" stroke-linecap="round"/><line x1="344.0" y1="213.5" x2="336.6" y2="220.3" stroke="#eaa82c" stroke-width="1.6" stroke-linecap="round"/><line x1="454.9" y1="324.5" x2="447.4" y2="331.3" stroke="#eaa82c" stroke-width="1.6" stroke-linecap="round"/><line x1="453.9" y1="214.1" x2="446.5" y2="220.9" stroke="#eaa82c" stroke-width="1.6" stroke-linecap="round"/><line x1="345.0" y1="323.9" x2="357.5" y2="313.3" stroke="#eaa82c" stroke-width="1.6" stroke-linecap="round"/><line x1="344.0" y1="213.5" x2="356.5" y2="202.9" stroke="#eaa82c" stroke-width="1.6" stroke-linecap="round"/><line x1="454.9" y1="324.5" x2="467.4" y2="313.9" stroke="#eaa82c" stroke-width="1.6" stroke-linecap="round"/><line x1="453.9" y1="214.1" x2="466.4" y2="203.5" stroke="#eaa82c" stroke-width="1.6" stroke-linecap="round"/><circle cx="290.5" cy="378.8" r="3.6" fill="url(#gPm)"/><circle cx="289.6" cy="268.4" r="3.6" fill="url(#gPm)"/><circle cx="288.6" cy="158.0" r="3.6" fill="url(#gPm)"/><circle cx="400.4" cy="379.4" r="3.6" fill="url(#gPm)"/><circle cx="399.4" cy="269.0" r="3.6" fill="url(#gPm)"/><circle cx="398.5" cy="158.6" r="3.6" fill="url(#gPm)"/><circle cx="510.3" cy="380.0" r="3.6" fill="url(#gPm)"/><circle cx="509.3" cy="269.6" r="3.6" fill="url(#gPm)"/><circle cx="508.4" cy="159.2" r="3.6" fill="url(#gPm)"/><circle cx="345.0" cy="323.9" r="4.5" fill="url(#gNm)"/><circle cx="344.0" cy="213.5" r="4.5" fill="url(#gNm)"/><circle cx="454.9" cy="324.5" r="4.5" fill="url(#gNm)"/><circle cx="453.9" cy="214.1" r="4.5" fill="url(#gNm)"/><line x1="344.4" y1="379.9" x2="324.8" y2="370.2" stroke="#eaa82c" stroke-width="1.6" stroke-linecap="round"/><line x1="343.4" y1="269.5" x2="323.8" y2="259.8" stroke="#eaa82c" stroke-width="1.6" stroke-linecap="round"/><line x1="454.3" y1="380.5" x2="434.7" y2="370.8" stroke="#eaa82c" stroke-width="1.6" stroke-linecap="round"/><line x1="453.3" y1="270.1" x2="433.7" y2="260.4" stroke="#eaa82c" stroke-width="1.6" stroke-linecap="round"/><line x1="343.4" y1="269.5" x2="361.6" y2="280.2" stroke="#eaa82c" stroke-width="1.6" stroke-linecap="round"/><line x1="342.5" y1="159.1" x2="360.6" y2="169.8" stroke="#eaa82c" stroke-width="1.6" stroke-linecap="round"/><line x1="453.3" y1="270.1" x2="471.5" y2="280.8" stroke="#eaa82c" stroke-width="1.6" stroke-linecap="round"/><line x1="452.4" y1="159.7" x2="470.5" y2="170.4" stroke="#eaa82c" stroke-width="1.6" stroke-linecap="round"/><line x1="343.4" y1="269.5" x2="327.8" y2="276.8" stroke="#eaa82c" stroke-width="1.6" stroke-linecap="round"/><line x1="342.5" y1="159.1" x2="326.9" y2="166.4" stroke="#eaa82c" stroke-width="1.6" stroke-linecap="round"/><line x1="453.3" y1="270.1" x2="437.7" y2="277.4" stroke="#eaa82c" stroke-width="1.6" stroke-linecap="round"/><line x1="452.4" y1="159.7" x2="436.8" y2="167.0" stroke="#eaa82c" stroke-width="1.6" stroke-linecap="round"/><line x1="344.4" y1="379.9" x2="363.5" y2="369.9" stroke="#eaa82c" stroke-width="1.6" stroke-linecap="round"/><line x1="343.4" y1="269.5" x2="362.5" y2="259.5" stroke="#eaa82c" stroke-width="1.6" stroke-linecap="round"/><line x1="454.3" y1="380.5" x2="473.4" y2="370.5" stroke="#eaa82c" stroke-width="1.6" stroke-linecap="round"/><line x1="453.3" y1="270.1" x2="472.4" y2="260.1" stroke="#eaa82c" stroke-width="1.6" stroke-linecap="round"/><line x1="343.4" y1="269.5" x2="332.9" y2="288.5" stroke="#eaa82c" stroke-width="1.6" stroke-linecap="round"/><line x1="342.5" y1="159.1" x2="332.0" y2="178.1" stroke="#eaa82c" stroke-width="1.6" stroke-linecap="round"/><line x1="453.3" y1="270.1" x2="442.8" y2="289.1" stroke="#eaa82c" stroke-width="1.6" stroke-linecap="round"/><line x1="452.4" y1="159.7" x2="441.9" y2="178.7" stroke="#eaa82c" stroke-width="1.6" stroke-linecap="round"/><line x1="344.4" y1="379.9" x2="350.9" y2="363.9" stroke="#eaa82c" stroke-width="1.6" stroke-linecap="round"/><line x1="343.4" y1="269.5" x2="350.0" y2="253.5" stroke="#eaa82c" stroke-width="1.6" stroke-linecap="round"/><line x1="454.3" y1="380.5" x2="460.8" y2="364.5" stroke="#eaa82c" stroke-width="1.6" stroke-linecap="round"/><line x1="453.3" y1="270.1" x2="459.9" y2="254.1" stroke="#eaa82c" stroke-width="1.6" stroke-linecap="round"/><circle cx="344.4" cy="379.9" r="4.5" fill="url(#gNm)"/><circle cx="343.4" cy="269.5" r="4.5" fill="url(#gNm)"/><circle cx="342.5" cy="159.1" r="4.5" fill="url(#gNm)"/><circle cx="454.3" cy="380.5" r="4.5" fill="url(#gNm)"/><circle cx="453.3" cy="270.1" r="4.5" fill="url(#gNm)"/><circle cx="452.4" cy="159.7" r="4.5" fill="url(#gNm)"/><line x1="305.2" y1="360.6" x2="297.9" y2="369.7" stroke="#eaa82c" stroke-width="1.6" stroke-linecap="round"/><line x1="304.3" y1="250.2" x2="296.9" y2="259.3" stroke="#eaa82c" stroke-width="1.6" stroke-linecap="round"/><line x1="415.1" y1="361.2" x2="407.8" y2="370.3" stroke="#eaa82c" stroke-width="1.6" stroke-linecap="round"/><line x1="414.2" y1="250.8" x2="406.8" y2="259.9" stroke="#eaa82c" stroke-width="1.6" stroke-linecap="round"/><line x1="379.8" y1="291.0" x2="389.6" y2="280.0" stroke="#eaa82c" stroke-width="1.6" stroke-linecap="round"/><line x1="378.8" y1="180.6" x2="388.7" y2="169.6" stroke="#eaa82c" stroke-width="1.6" stroke-linecap="round"/><line x1="489.7" y1="291.6" x2="499.5" y2="280.6" stroke="#eaa82c" stroke-width="1.6" stroke-linecap="round"/><line x1="488.7" y1="181.2" x2="498.6" y2="170.2" stroke="#eaa82c" stroke-width="1.6" stroke-linecap="round"/><line x1="305.2" y1="360.6" x2="324.8" y2="370.2" stroke="#eaa82c" stroke-width="1.6" stroke-linecap="round"/><line x1="305.2" y1="360.6" x2="298.2" y2="341.7" stroke="#eaa82c" stroke-width="1.6" stroke-linecap="round"/><line x1="305.2" y1="360.6" x2="294.4" y2="344.5" stroke="#eaa82c" stroke-width="1.6" stroke-linecap="round"/><line x1="305.2" y1="360.6" x2="294.1" y2="372.5" stroke="#eaa82c" stroke-width="1.6" stroke-linecap="round"/><line x1="304.3" y1="250.2" x2="323.8" y2="259.8" stroke="#eaa82c" stroke-width="1.6" stroke-linecap="round"/><line x1="304.3" y1="250.2" x2="297.2" y2="231.3" stroke="#eaa82c" stroke-width="1.6" stroke-linecap="round"/><line x1="304.3" y1="250.2" x2="293.5" y2="234.1" stroke="#eaa82c" stroke-width="1.6" stroke-linecap="round"/><line x1="304.3" y1="250.2" x2="293.2" y2="262.1" stroke="#eaa82c" stroke-width="1.6" stroke-linecap="round"/><line x1="415.1" y1="361.2" x2="434.7" y2="370.8" stroke="#eaa82c" stroke-width="1.6" stroke-linecap="round"/><line x1="415.1" y1="361.2" x2="408.1" y2="342.3" stroke="#eaa82c" stroke-width="1.6" stroke-linecap="round"/><line x1="415.1" y1="361.2" x2="404.3" y2="345.1" stroke="#eaa82c" stroke-width="1.6" stroke-linecap="round"/><line x1="415.1" y1="361.2" x2="404.0" y2="373.1" stroke="#eaa82c" stroke-width="1.6" stroke-linecap="round"/><line x1="414.2" y1="250.8" x2="433.7" y2="260.4" stroke="#eaa82c" stroke-width="1.6" stroke-linecap="round"/><line x1="414.2" y1="250.8" x2="407.1" y2="231.9" stroke="#eaa82c" stroke-width="1.6" stroke-linecap="round"/><line x1="414.2" y1="250.8" x2="403.4" y2="234.7" stroke="#eaa82c" stroke-width="1.6" stroke-linecap="round"/><line x1="414.2" y1="250.8" x2="403.1" y2="262.7" stroke="#eaa82c" stroke-width="1.6" stroke-linecap="round"/><line x1="379.8" y1="291.0" x2="361.6" y2="280.2" stroke="#eaa82c" stroke-width="1.6" stroke-linecap="round"/><line x1="379.8" y1="291.0" x2="390.4" y2="307.2" stroke="#eaa82c" stroke-width="1.6" stroke-linecap="round"/><line x1="379.8" y1="291.0" x2="386.6" y2="310.0" stroke="#eaa82c" stroke-width="1.6" stroke-linecap="round"/><line x1="379.8" y1="291.0" x2="385.9" y2="282.8" stroke="#eaa82c" stroke-width="1.6" stroke-linecap="round"/><line x1="378.8" y1="180.6" x2="360.6" y2="169.8" stroke="#eaa82c" stroke-width="1.6" stroke-linecap="round"/><line x1="378.8" y1="180.6" x2="389.4" y2="196.8" stroke="#eaa82c" stroke-width="1.6" stroke-linecap="round"/><line x1="378.8" y1="180.6" x2="385.7" y2="199.6" stroke="#eaa82c" stroke-width="1.6" stroke-linecap="round"/><line x1="378.8" y1="180.6" x2="384.9" y2="172.4" stroke="#eaa82c" stroke-width="1.6" stroke-linecap="round"/><line x1="489.7" y1="291.6" x2="471.5" y2="280.8" stroke="#eaa82c" stroke-width="1.6" stroke-linecap="round"/><line x1="489.7" y1="291.6" x2="500.3" y2="307.8" stroke="#eaa82c" stroke-width="1.6" stroke-linecap="round"/><line x1="489.7" y1="291.6" x2="496.5" y2="310.6" stroke="#eaa82c" stroke-width="1.6" stroke-linecap="round"/><line x1="489.7" y1="291.6" x2="495.8" y2="283.4" stroke="#eaa82c" stroke-width="1.6" stroke-linecap="round"/><line x1="488.7" y1="181.2" x2="470.5" y2="170.4" stroke="#eaa82c" stroke-width="1.6" stroke-linecap="round"/><line x1="488.7" y1="181.2" x2="499.3" y2="197.4" stroke="#eaa82c" stroke-width="1.6" stroke-linecap="round"/><line x1="488.7" y1="181.2" x2="495.6" y2="200.2" stroke="#eaa82c" stroke-width="1.6" stroke-linecap="round"/><line x1="488.7" y1="181.2" x2="494.8" y2="173.0" stroke="#eaa82c" stroke-width="1.6" stroke-linecap="round"/><circle cx="305.2" cy="360.6" r="8.3" fill="url(#gSm)"/><circle cx="304.3" cy="250.2" r="8.3" fill="url(#gSm)"/><circle cx="415.1" cy="361.2" r="8.3" fill="url(#gSm)"/><circle cx="414.2" cy="250.8" r="8.3" fill="url(#gSm)"/><circle cx="379.8" cy="291.0" r="8.3" fill="url(#gSm)"/><circle cx="378.8" cy="180.6" r="8.3" fill="url(#gSm)"/><circle cx="489.7" cy="291.6" r="8.3" fill="url(#gSm)"/><circle cx="488.7" cy="181.2" r="8.3" fill="url(#gSm)"/><line x1="322.4" y1="307.4" x2="329.9" y2="318.5" stroke="#eaa82c" stroke-width="1.6" stroke-linecap="round"/><line x1="357.5" y1="348.0" x2="347.5" y2="338.8" stroke="#eaa82c" stroke-width="1.6" stroke-linecap="round"/><line x1="321.5" y1="197.0" x2="329.0" y2="208.1" stroke="#eaa82c" stroke-width="1.6" stroke-linecap="round"/><line x1="356.6" y1="237.6" x2="346.5" y2="228.4" stroke="#eaa82c" stroke-width="1.6" stroke-linecap="round"/><line x1="432.3" y1="308.0" x2="439.8" y2="319.1" stroke="#eaa82c" stroke-width="1.6" stroke-linecap="round"/><line x1="467.4" y1="348.6" x2="457.4" y2="339.4" stroke="#eaa82c" stroke-width="1.6" stroke-linecap="round"/><line x1="431.4" y1="197.6" x2="438.9" y2="208.7" stroke="#eaa82c" stroke-width="1.6" stroke-linecap="round"/><line x1="466.5" y1="238.2" x2="456.4" y2="229.0" stroke="#eaa82c" stroke-width="1.6" stroke-linecap="round"/><line x1="322.4" y1="307.4" x2="332.9" y2="288.5" stroke="#eaa82c" stroke-width="1.6" stroke-linecap="round"/><line x1="322.4" y1="307.4" x2="303.0" y2="317.9" stroke="#eaa82c" stroke-width="1.6" stroke-linecap="round"/><line x1="322.4" y1="307.4" x2="329.2" y2="291.3" stroke="#eaa82c" stroke-width="1.6" stroke-linecap="round"/><line x1="322.4" y1="307.4" x2="333.7" y2="315.6" stroke="#eaa82c" stroke-width="1.6" stroke-linecap="round"/><line x1="321.5" y1="197.0" x2="332.0" y2="178.1" stroke="#eaa82c" stroke-width="1.6" stroke-linecap="round"/><line x1="321.5" y1="197.0" x2="302.1" y2="207.5" stroke="#eaa82c" stroke-width="1.6" stroke-linecap="round"/><line x1="321.5" y1="197.0" x2="328.2" y2="180.9" stroke="#eaa82c" stroke-width="1.6" stroke-linecap="round"/><line x1="321.5" y1="197.0" x2="332.7" y2="205.2" stroke="#eaa82c" stroke-width="1.6" stroke-linecap="round"/><line x1="432.3" y1="308.0" x2="442.8" y2="289.1" stroke="#eaa82c" stroke-width="1.6" stroke-linecap="round"/><line x1="432.3" y1="308.0" x2="412.9" y2="318.5" stroke="#eaa82c" stroke-width="1.6" stroke-linecap="round"/><line x1="432.3" y1="308.0" x2="439.1" y2="291.9" stroke="#eaa82c" stroke-width="1.6" stroke-linecap="round"/><line x1="432.3" y1="308.0" x2="443.6" y2="316.2" stroke="#eaa82c" stroke-width="1.6" stroke-linecap="round"/><line x1="431.4" y1="197.6" x2="441.9" y2="178.7" stroke="#eaa82c" stroke-width="1.6" stroke-linecap="round"/><line x1="431.4" y1="197.6" x2="412.0" y2="208.1" stroke="#eaa82c" stroke-width="1.6" stroke-linecap="round"/><line x1="431.4" y1="197.6" x2="438.1" y2="181.5" stroke="#eaa82c" stroke-width="1.6" stroke-linecap="round"/><line x1="431.4" y1="197.6" x2="442.6" y2="205.8" stroke="#eaa82c" stroke-width="1.6" stroke-linecap="round"/><line x1="357.5" y1="348.0" x2="350.9" y2="363.9" stroke="#eaa82c" stroke-width="1.6" stroke-linecap="round"/><line x1="357.5" y1="348.0" x2="375.5" y2="338.5" stroke="#eaa82c" stroke-width="1.6" stroke-linecap="round"/><line x1="357.5" y1="348.0" x2="347.2" y2="366.8" stroke="#eaa82c" stroke-width="1.6" stroke-linecap="round"/><line x1="357.5" y1="348.0" x2="351.2" y2="335.9" stroke="#eaa82c" stroke-width="1.6" stroke-linecap="round"/><line x1="356.6" y1="237.6" x2="350.0" y2="253.5" stroke="#eaa82c" stroke-width="1.6" stroke-linecap="round"/><line x1="356.6" y1="237.6" x2="374.6" y2="228.1" stroke="#eaa82c" stroke-width="1.6" stroke-linecap="round"/><line x1="356.6" y1="237.6" x2="346.2" y2="256.4" stroke="#eaa82c" stroke-width="1.6" stroke-linecap="round"/><line x1="356.6" y1="237.6" x2="350.3" y2="225.5" stroke="#eaa82c" stroke-width="1.6" stroke-linecap="round"/><line x1="467.4" y1="348.6" x2="460.8" y2="364.5" stroke="#eaa82c" stroke-width="1.6" stroke-linecap="round"/><line x1="467.4" y1="348.6" x2="485.4" y2="339.1" stroke="#eaa82c" stroke-width="1.6" stroke-linecap="round"/><line x1="467.4" y1="348.6" x2="457.1" y2="367.4" stroke="#eaa82c" stroke-width="1.6" stroke-linecap="round"/><line x1="467.4" y1="348.6" x2="461.1" y2="336.5" stroke="#eaa82c" stroke-width="1.6" stroke-linecap="round"/><line x1="466.5" y1="238.2" x2="459.9" y2="254.1" stroke="#eaa82c" stroke-width="1.6" stroke-linecap="round"/><line x1="466.5" y1="238.2" x2="484.5" y2="228.7" stroke="#eaa82c" stroke-width="1.6" stroke-linecap="round"/><line x1="466.5" y1="238.2" x2="456.1" y2="257.0" stroke="#eaa82c" stroke-width="1.6" stroke-linecap="round"/><line x1="466.5" y1="238.2" x2="460.2" y2="226.1" stroke="#eaa82c" stroke-width="1.6" stroke-linecap="round"/><circle cx="322.4" cy="307.4" r="8.3" fill="url(#gSm)"/><circle cx="321.5" cy="197.0" r="8.3" fill="url(#gSm)"/><circle cx="432.3" cy="308.0" r="8.3" fill="url(#gSm)"/><circle cx="431.4" cy="197.6" r="8.3" fill="url(#gSm)"/><circle cx="357.5" cy="348.0" r="8.3" fill="url(#gSm)"/><circle cx="356.6" cy="237.6" r="8.3" fill="url(#gSm)"/><circle cx="467.4" cy="348.6" r="8.3" fill="url(#gSm)"/><circle cx="466.5" cy="238.2" r="8.3" fill="url(#gSm)"/><line x1="283.6" y1="328.4" x2="294.4" y2="344.5" stroke="#eaa82c" stroke-width="1.6" stroke-linecap="round"/><line x1="282.7" y1="218.0" x2="293.5" y2="234.1" stroke="#eaa82c" stroke-width="1.6" stroke-linecap="round"/><line x1="393.5" y1="329.0" x2="404.3" y2="345.1" stroke="#eaa82c" stroke-width="1.6" stroke-linecap="round"/><line x1="392.6" y1="218.6" x2="403.4" y2="234.7" stroke="#eaa82c" stroke-width="1.6" stroke-linecap="round"/><line x1="393.5" y1="329.0" x2="386.6" y2="310.0" stroke="#eaa82c" stroke-width="1.6" stroke-linecap="round"/><line x1="392.6" y1="218.6" x2="385.7" y2="199.6" stroke="#eaa82c" stroke-width="1.6" stroke-linecap="round"/><line x1="503.4" y1="329.6" x2="496.5" y2="310.6" stroke="#eaa82c" stroke-width="1.6" stroke-linecap="round"/><line x1="502.5" y1="219.2" x2="495.6" y2="200.2" stroke="#eaa82c" stroke-width="1.6" stroke-linecap="round"/><line x1="283.6" y1="328.4" x2="303.0" y2="317.9" stroke="#eaa82c" stroke-width="1.6" stroke-linecap="round"/><line x1="282.7" y1="218.0" x2="302.1" y2="207.5" stroke="#eaa82c" stroke-width="1.6" stroke-linecap="round"/><line x1="393.5" y1="329.0" x2="412.9" y2="318.5" stroke="#eaa82c" stroke-width="1.6" stroke-linecap="round"/><line x1="392.6" y1="218.6" x2="412.0" y2="208.1" stroke="#eaa82c" stroke-width="1.6" stroke-linecap="round"/><line x1="393.5" y1="329.0" x2="375.5" y2="338.5" stroke="#eaa82c" stroke-width="1.6" stroke-linecap="round"/><line x1="392.6" y1="218.6" x2="374.6" y2="228.1" stroke="#eaa82c" stroke-width="1.6" stroke-linecap="round"/><line x1="503.4" y1="329.6" x2="485.4" y2="339.1" stroke="#eaa82c" stroke-width="1.6" stroke-linecap="round"/><line x1="502.5" y1="219.2" x2="484.5" y2="228.7" stroke="#eaa82c" stroke-width="1.6" stroke-linecap="round"/><line x1="283.6" y1="328.4" x2="299.3" y2="338.6" stroke="#eaa82c" stroke-width="1.6" stroke-linecap="round"/><line x1="282.7" y1="218.0" x2="298.4" y2="228.2" stroke="#eaa82c" stroke-width="1.6" stroke-linecap="round"/><line x1="393.5" y1="329.0" x2="409.2" y2="339.2" stroke="#eaa82c" stroke-width="1.6" stroke-linecap="round"/><line x1="392.6" y1="218.6" x2="408.3" y2="228.8" stroke="#eaa82c" stroke-width="1.6" stroke-linecap="round"/><line x1="393.5" y1="329.0" x2="374.2" y2="321.6" stroke="#eaa82c" stroke-width="1.6" stroke-linecap="round"/><line x1="392.6" y1="218.6" x2="373.3" y2="211.2" stroke="#eaa82c" stroke-width="1.6" stroke-linecap="round"/><line x1="503.4" y1="329.6" x2="484.1" y2="322.2" stroke="#eaa82c" stroke-width="1.6" stroke-linecap="round"/><line x1="502.5" y1="219.2" x2="483.2" y2="211.8" stroke="#eaa82c" stroke-width="1.6" stroke-linecap="round"/><circle cx="283.6" cy="328.4" r="4.5" fill="url(#gNm)"/><circle cx="282.7" cy="218.0" r="4.5" fill="url(#gNm)"/><circle cx="393.5" cy="329.0" r="4.5" fill="url(#gNm)"/><circle cx="392.6" cy="218.6" r="4.5" fill="url(#gNm)"/><circle cx="503.4" cy="329.6" r="4.5" fill="url(#gNm)"/><circle cx="502.5" cy="219.2" r="4.5" fill="url(#gNm)"/><line x1="290.5" y1="378.8" x2="275.5" y2="390.1" stroke="#d6d6d6" stroke-width="1.0"/><line x1="289.6" y1="268.4" x2="274.6" y2="279.7" stroke="#d6d6d6" stroke-width="1.0"/><line x1="288.6" y1="158.0" x2="273.6" y2="169.3" stroke="#d6d6d6" stroke-width="1.0"/><line x1="400.4" y1="379.4" x2="385.4" y2="390.7" stroke="#d6d6d6" stroke-width="1.0"/><line x1="399.4" y1="269.0" x2="384.4" y2="280.3" stroke="#d6d6d6" stroke-width="1.0"/><line x1="398.5" y1="158.6" x2="383.5" y2="169.9" stroke="#d6d6d6" stroke-width="1.0"/><line x1="510.3" y1="380.0" x2="495.3" y2="391.3" stroke="#d6d6d6" stroke-width="1.0"/><line x1="509.3" y1="269.6" x2="494.3" y2="280.9" stroke="#d6d6d6" stroke-width="1.0"/><line x1="508.4" y1="159.2" x2="493.4" y2="170.5" stroke="#d6d6d6" stroke-width="1.0"/><line x1="337.5" y1="329.6" x2="329.9" y2="318.5" stroke="#eaa82c" stroke-width="1.6" stroke-linecap="round"/><line x1="337.5" y1="329.6" x2="347.5" y2="338.8" stroke="#eaa82c" stroke-width="1.6" stroke-linecap="round"/><line x1="337.5" y1="329.6" x2="326.3" y2="339.2" stroke="#eaa82c" stroke-width="1.6" stroke-linecap="round"/><line x1="337.5" y1="329.6" x2="346.2" y2="321.8" stroke="#eaa82c" stroke-width="1.6" stroke-linecap="round"/><line x1="336.5" y1="219.1" x2="329.0" y2="208.1" stroke="#eaa82c" stroke-width="1.6" stroke-linecap="round"/><line x1="336.5" y1="219.1" x2="346.5" y2="228.4" stroke="#eaa82c" stroke-width="1.6" stroke-linecap="round"/><line x1="336.5" y1="219.1" x2="325.3" y2="228.8" stroke="#eaa82c" stroke-width="1.6" stroke-linecap="round"/><line x1="336.5" y1="219.1" x2="345.3" y2="211.4" stroke="#eaa82c" stroke-width="1.6" stroke-linecap="round"/><line x1="447.4" y1="330.1" x2="439.8" y2="319.1" stroke="#eaa82c" stroke-width="1.6" stroke-linecap="round"/><line x1="447.4" y1="330.1" x2="457.4" y2="339.4" stroke="#eaa82c" stroke-width="1.6" stroke-linecap="round"/><line x1="447.4" y1="330.1" x2="436.2" y2="339.8" stroke="#eaa82c" stroke-width="1.6" stroke-linecap="round"/><line x1="447.4" y1="330.1" x2="456.1" y2="322.4" stroke="#eaa82c" stroke-width="1.6" stroke-linecap="round"/><line x1="446.4" y1="219.7" x2="438.9" y2="208.7" stroke="#eaa82c" stroke-width="1.6" stroke-linecap="round"/><line x1="446.4" y1="219.7" x2="456.4" y2="229.0" stroke="#eaa82c" stroke-width="1.6" stroke-linecap="round"/><line x1="446.4" y1="219.7" x2="435.2" y2="229.4" stroke="#eaa82c" stroke-width="1.6" stroke-linecap="round"/><line x1="446.4" y1="219.7" x2="455.2" y2="212.0" stroke="#eaa82c" stroke-width="1.6" stroke-linecap="round"/><line x1="283.0" y1="384.4" x2="294.1" y2="372.5" stroke="#eaa82c" stroke-width="1.6" stroke-linecap="round"/><line x1="282.1" y1="274.1" x2="293.2" y2="262.1" stroke="#eaa82c" stroke-width="1.6" stroke-linecap="round"/><line x1="392.9" y1="385.1" x2="404.0" y2="373.1" stroke="#eaa82c" stroke-width="1.6" stroke-linecap="round"/><line x1="391.9" y1="274.7" x2="403.1" y2="262.7" stroke="#eaa82c" stroke-width="1.6" stroke-linecap="round"/><line x1="391.9" y1="274.7" x2="385.9" y2="282.8" stroke="#eaa82c" stroke-width="1.6" stroke-linecap="round"/><line x1="391.0" y1="164.2" x2="384.9" y2="172.4" stroke="#eaa82c" stroke-width="1.6" stroke-linecap="round"/><line x1="501.8" y1="275.2" x2="495.8" y2="283.4" stroke="#eaa82c" stroke-width="1.6" stroke-linecap="round"/><line x1="500.9" y1="164.8" x2="494.8" y2="173.0" stroke="#eaa82c" stroke-width="1.6" stroke-linecap="round"/><line x1="282.1" y1="274.1" x2="289.7" y2="284.7" stroke="#eaa82c" stroke-width="1.6" stroke-linecap="round"/><line x1="281.1" y1="163.6" x2="288.7" y2="174.3" stroke="#eaa82c" stroke-width="1.6" stroke-linecap="round"/><line x1="391.9" y1="274.7" x2="399.6" y2="285.3" stroke="#eaa82c" stroke-width="1.6" stroke-linecap="round"/><line x1="391.0" y1="164.2" x2="398.6" y2="174.9" stroke="#eaa82c" stroke-width="1.6" stroke-linecap="round"/><line x1="392.9" y1="385.1" x2="380.3" y2="378.2" stroke="#eaa82c" stroke-width="1.6" stroke-linecap="round"/><line x1="391.9" y1="274.7" x2="379.3" y2="267.8" stroke="#eaa82c" stroke-width="1.6" stroke-linecap="round"/><line x1="502.8" y1="385.6" x2="490.2" y2="378.8" stroke="#eaa82c" stroke-width="1.6" stroke-linecap="round"/><line x1="501.8" y1="275.2" x2="489.2" y2="268.4" stroke="#eaa82c" stroke-width="1.6" stroke-linecap="round"/><circle cx="337.5" cy="329.6" r="3.6" fill="url(#gPm)"/><circle cx="336.5" cy="219.1" r="3.6" fill="url(#gPm)"/><circle cx="447.4" cy="330.1" r="3.6" fill="url(#gPm)"/><circle cx="446.4" cy="219.7" r="3.6" fill="url(#gPm)"/><circle cx="283.0" cy="384.4" r="4.5" fill="url(#gNm)"/><circle cx="282.1" cy="274.1" r="4.5" fill="url(#gNm)"/><circle cx="281.1" cy="163.6" r="4.5" fill="url(#gNm)"/><circle cx="392.9" cy="385.1" r="4.5" fill="url(#gNm)"/><circle cx="391.9" cy="274.7" r="4.5" fill="url(#gNm)"/><circle cx="391.0" cy="164.2" r="4.5" fill="url(#gNm)"/><circle cx="502.8" cy="385.6" r="4.5" fill="url(#gNm)"/><circle cx="501.8" cy="275.2" r="4.5" fill="url(#gNm)"/><circle cx="500.9" cy="164.8" r="4.5" fill="url(#gNm)"/><line x1="335.9" y1="275.2" x2="316.6" y2="285.3" stroke="#eaa82c" stroke-width="1.6" stroke-linecap="round"/><line x1="335.0" y1="164.8" x2="315.6" y2="174.9" stroke="#eaa82c" stroke-width="1.6" stroke-linecap="round"/><line x1="445.8" y1="275.8" x2="426.5" y2="285.9" stroke="#eaa82c" stroke-width="1.6" stroke-linecap="round"/><line x1="444.9" y1="165.4" x2="425.5" y2="175.5" stroke="#eaa82c" stroke-width="1.6" stroke-linecap="round"/><line x1="336.9" y1="385.6" x2="352.2" y2="378.4" stroke="#eaa82c" stroke-width="1.6" stroke-linecap="round"/><line x1="335.9" y1="275.2" x2="351.3" y2="268.0" stroke="#eaa82c" stroke-width="1.6" stroke-linecap="round"/><line x1="446.8" y1="386.2" x2="462.1" y2="379.0" stroke="#eaa82c" stroke-width="1.6" stroke-linecap="round"/><line x1="445.8" y1="275.8" x2="461.2" y2="268.6" stroke="#eaa82c" stroke-width="1.6" stroke-linecap="round"/><line x1="335.9" y1="275.2" x2="329.2" y2="291.3" stroke="#eaa82c" stroke-width="1.6" stroke-linecap="round"/><line x1="335.0" y1="164.8" x2="328.2" y2="180.9" stroke="#eaa82c" stroke-width="1.6" stroke-linecap="round"/><line x1="445.8" y1="275.8" x2="439.1" y2="291.9" stroke="#eaa82c" stroke-width="1.6" stroke-linecap="round"/><line x1="444.9" y1="165.4" x2="438.1" y2="181.5" stroke="#eaa82c" stroke-width="1.6" stroke-linecap="round"/><line x1="336.9" y1="385.6" x2="347.2" y2="366.8" stroke="#eaa82c" stroke-width="1.6" stroke-linecap="round"/><line x1="335.9" y1="275.2" x2="346.2" y2="256.4" stroke="#eaa82c" stroke-width="1.6" stroke-linecap="round"/><line x1="446.8" y1="386.2" x2="457.1" y2="367.4" stroke="#eaa82c" stroke-width="1.6" stroke-linecap="round"/><line x1="445.8" y1="275.8" x2="456.1" y2="257.0" stroke="#eaa82c" stroke-width="1.6" stroke-linecap="round"/><line x1="336.9" y1="385.6" x2="325.9" y2="367.2" stroke="#eaa82c" stroke-width="1.6" stroke-linecap="round"/><line x1="335.9" y1="275.2" x2="325.0" y2="256.8" stroke="#eaa82c" stroke-width="1.6" stroke-linecap="round"/><line x1="446.8" y1="386.2" x2="435.8" y2="367.8" stroke="#eaa82c" stroke-width="1.6" stroke-linecap="round"/><line x1="445.8" y1="275.8" x2="434.9" y2="257.4" stroke="#eaa82c" stroke-width="1.6" stroke-linecap="round"/><line x1="335.9" y1="275.2" x2="345.4" y2="294.6" stroke="#eaa82c" stroke-width="1.6" stroke-linecap="round"/><line x1="335.0" y1="164.8" x2="344.5" y2="184.2" stroke="#eaa82c" stroke-width="1.6" stroke-linecap="round"/><line x1="445.8" y1="275.8" x2="455.3" y2="295.2" stroke="#eaa82c" stroke-width="1.6" stroke-linecap="round"/><line x1="444.9" y1="165.4" x2="454.4" y2="184.8" stroke="#eaa82c" stroke-width="1.6" stroke-linecap="round"/><circle cx="336.9" cy="385.6" r="4.5" fill="url(#gNm)"/><circle cx="335.9" cy="275.2" r="4.5" fill="url(#gNm)"/><circle cx="335.0" cy="164.8" r="4.5" fill="url(#gNm)"/><circle cx="446.8" cy="386.2" r="4.5" fill="url(#gNm)"/><circle cx="445.8" cy="275.8" r="4.5" fill="url(#gNm)"/><circle cx="444.9" cy="165.4" r="4.5" fill="url(#gNm)"/><line x1="315.0" y1="348.8" x2="326.3" y2="339.2" stroke="#eaa82c" stroke-width="1.6" stroke-linecap="round"/><line x1="354.9" y1="314.1" x2="346.2" y2="321.8" stroke="#eaa82c" stroke-width="1.6" stroke-linecap="round"/><line x1="314.1" y1="238.4" x2="325.3" y2="228.8" stroke="#eaa82c" stroke-width="1.6" stroke-linecap="round"/><line x1="354.0" y1="203.7" x2="345.3" y2="211.4" stroke="#eaa82c" stroke-width="1.6" stroke-linecap="round"/><line x1="424.9" y1="349.4" x2="436.2" y2="339.8" stroke="#eaa82c" stroke-width="1.6" stroke-linecap="round"/><line x1="464.8" y1="314.7" x2="456.1" y2="322.4" stroke="#eaa82c" stroke-width="1.6" stroke-linecap="round"/><line x1="424.0" y1="239.0" x2="435.2" y2="229.4" stroke="#eaa82c" stroke-width="1.6" stroke-linecap="round"/><line x1="463.9" y1="204.3" x2="455.2" y2="212.0" stroke="#eaa82c" stroke-width="1.6" stroke-linecap="round"/><line x1="315.0" y1="348.8" x2="295.6" y2="341.4" stroke="#eaa82c" stroke-width="1.6" stroke-linecap="round"/><line x1="315.0" y1="348.8" x2="299.3" y2="338.6" stroke="#eaa82c" stroke-width="1.6" stroke-linecap="round"/><line x1="315.0" y1="348.8" x2="325.9" y2="367.2" stroke="#eaa82c" stroke-width="1.6" stroke-linecap="round"/><line x1="315.0" y1="348.8" x2="322.5" y2="342.0" stroke="#eaa82c" stroke-width="1.6" stroke-linecap="round"/><line x1="314.1" y1="238.4" x2="294.6" y2="231.0" stroke="#eaa82c" stroke-width="1.6" stroke-linecap="round"/><line x1="314.1" y1="238.4" x2="298.4" y2="228.2" stroke="#eaa82c" stroke-width="1.6" stroke-linecap="round"/><line x1="314.1" y1="238.4" x2="325.0" y2="256.8" stroke="#eaa82c" stroke-width="1.6" stroke-linecap="round"/><line x1="314.1" y1="238.4" x2="321.6" y2="231.6" stroke="#eaa82c" stroke-width="1.6" stroke-linecap="round"/><line x1="424.9" y1="349.4" x2="405.5" y2="342.0" stroke="#eaa82c" stroke-width="1.6" stroke-linecap="round"/><line x1="424.9" y1="349.4" x2="409.2" y2="339.2" stroke="#eaa82c" stroke-width="1.6" stroke-linecap="round"/><line x1="424.9" y1="349.4" x2="435.8" y2="367.8" stroke="#eaa82c" stroke-width="1.6" stroke-linecap="round"/><line x1="424.9" y1="349.4" x2="432.4" y2="342.6" stroke="#eaa82c" stroke-width="1.6" stroke-linecap="round"/><line x1="424.0" y1="239.0" x2="404.5" y2="231.6" stroke="#eaa82c" stroke-width="1.6" stroke-linecap="round"/><line x1="424.0" y1="239.0" x2="408.3" y2="228.8" stroke="#eaa82c" stroke-width="1.6" stroke-linecap="round"/><line x1="424.0" y1="239.0" x2="434.9" y2="257.4" stroke="#eaa82c" stroke-width="1.6" stroke-linecap="round"/><line x1="424.0" y1="239.0" x2="431.5" y2="232.2" stroke="#eaa82c" stroke-width="1.6" stroke-linecap="round"/><line x1="354.9" y1="314.1" x2="370.5" y2="324.4" stroke="#eaa82c" stroke-width="1.6" stroke-linecap="round"/><line x1="354.9" y1="314.1" x2="374.2" y2="321.6" stroke="#eaa82c" stroke-width="1.6" stroke-linecap="round"/><line x1="354.9" y1="314.1" x2="345.4" y2="294.6" stroke="#eaa82c" stroke-width="1.6" stroke-linecap="round"/><line x1="354.9" y1="314.1" x2="342.5" y2="324.6" stroke="#eaa82c" stroke-width="1.6" stroke-linecap="round"/><line x1="354.0" y1="203.7" x2="369.5" y2="214.0" stroke="#eaa82c" stroke-width="1.6" stroke-linecap="round"/><line x1="354.0" y1="203.7" x2="373.3" y2="211.2" stroke="#eaa82c" stroke-width="1.6" stroke-linecap="round"/><line x1="354.0" y1="203.7" x2="344.5" y2="184.2" stroke="#eaa82c" stroke-width="1.6" stroke-linecap="round"/><line x1="354.0" y1="203.7" x2="341.5" y2="214.2" stroke="#eaa82c" stroke-width="1.6" stroke-linecap="round"/><line x1="464.8" y1="314.7" x2="480.4" y2="325.0" stroke="#eaa82c" stroke-width="1.6" stroke-linecap="round"/><line x1="464.8" y1="314.7" x2="484.1" y2="322.2" stroke="#eaa82c" stroke-width="1.6" stroke-linecap="round"/><line x1="464.8" y1="314.7" x2="455.3" y2="295.2" stroke="#eaa82c" stroke-width="1.6" stroke-linecap="round"/><line x1="464.8" y1="314.7" x2="452.4" y2="325.2" stroke="#eaa82c" stroke-width="1.6" stroke-linecap="round"/><line x1="463.9" y1="204.3" x2="479.4" y2="214.6" stroke="#eaa82c" stroke-width="1.6" stroke-linecap="round"/><line x1="463.9" y1="204.3" x2="483.2" y2="211.8" stroke="#eaa82c" stroke-width="1.6" stroke-linecap="round"/><line x1="463.9" y1="204.3" x2="454.4" y2="184.8" stroke="#eaa82c" stroke-width="1.6" stroke-linecap="round"/><line x1="463.9" y1="204.3" x2="451.4" y2="214.8" stroke="#eaa82c" stroke-width="1.6" stroke-linecap="round"/><circle cx="315.0" cy="348.8" r="8.3" fill="url(#gSm)"/><circle cx="314.1" cy="238.4" r="8.3" fill="url(#gSm)"/><circle cx="424.9" cy="349.4" r="8.3" fill="url(#gSm)"/><circle cx="424.0" cy="239.0" r="8.3" fill="url(#gSm)"/><circle cx="354.9" cy="314.1" r="8.3" fill="url(#gSm)"/><circle cx="354.0" cy="203.7" r="8.3" fill="url(#gSm)"/><circle cx="464.8" cy="314.7" r="8.3" fill="url(#gSm)"/><circle cx="463.9" cy="204.3" r="8.3" fill="url(#gSm)"/><line x1="297.3" y1="295.4" x2="285.9" y2="287.5" stroke="#eaa82c" stroke-width="1.6" stroke-linecap="round"/><line x1="296.3" y1="185.0" x2="285.0" y2="177.1" stroke="#eaa82c" stroke-width="1.6" stroke-linecap="round"/><line x1="367.6" y1="371.3" x2="376.5" y2="381.0" stroke="#eaa82c" stroke-width="1.6" stroke-linecap="round"/><line x1="407.2" y1="296.0" x2="395.8" y2="288.1" stroke="#eaa82c" stroke-width="1.6" stroke-linecap="round"/><line x1="366.7" y1="260.9" x2="375.6" y2="270.6" stroke="#eaa82c" stroke-width="1.6" stroke-linecap="round"/><line x1="406.2" y1="185.6" x2="394.9" y2="177.7" stroke="#eaa82c" stroke-width="1.6" stroke-linecap="round"/><line x1="477.5" y1="371.9" x2="486.4" y2="381.6" stroke="#eaa82c" stroke-width="1.6" stroke-linecap="round"/><line x1="476.6" y1="261.5" x2="485.5" y2="271.2" stroke="#eaa82c" stroke-width="1.6" stroke-linecap="round"/><line x1="297.3" y1="295.4" x2="286.7" y2="314.7" stroke="#eaa82c" stroke-width="1.6" stroke-linecap="round"/><line x1="297.3" y1="295.4" x2="316.6" y2="285.3" stroke="#eaa82c" stroke-width="1.6" stroke-linecap="round"/><line x1="297.3" y1="295.4" x2="289.7" y2="284.7" stroke="#eaa82c" stroke-width="1.6" stroke-linecap="round"/><line x1="296.3" y1="185.0" x2="285.8" y2="204.3" stroke="#eaa82c" stroke-width="1.6" stroke-linecap="round"/><line x1="296.3" y1="185.0" x2="315.6" y2="174.9" stroke="#eaa82c" stroke-width="1.6" stroke-linecap="round"/><line x1="296.3" y1="185.0" x2="288.7" y2="174.3" stroke="#eaa82c" stroke-width="1.6" stroke-linecap="round"/><line x1="407.2" y1="296.0" x2="396.6" y2="315.3" stroke="#eaa82c" stroke-width="1.6" stroke-linecap="round"/><line x1="407.2" y1="296.0" x2="426.5" y2="285.9" stroke="#eaa82c" stroke-width="1.6" stroke-linecap="round"/><line x1="407.2" y1="296.0" x2="399.6" y2="285.3" stroke="#eaa82c" stroke-width="1.6" stroke-linecap="round"/><line x1="406.2" y1="185.6" x2="395.7" y2="204.9" stroke="#eaa82c" stroke-width="1.6" stroke-linecap="round"/><line x1="406.2" y1="185.6" x2="425.5" y2="175.5" stroke="#eaa82c" stroke-width="1.6" stroke-linecap="round"/><line x1="406.2" y1="185.6" x2="398.6" y2="174.9" stroke="#eaa82c" stroke-width="1.6" stroke-linecap="round"/><line x1="367.6" y1="371.3" x2="376.8" y2="353.0" stroke="#eaa82c" stroke-width="1.6" stroke-linecap="round"/><line x1="367.6" y1="371.3" x2="352.2" y2="378.4" stroke="#eaa82c" stroke-width="1.6" stroke-linecap="round"/><line x1="367.6" y1="371.3" x2="380.3" y2="378.2" stroke="#eaa82c" stroke-width="1.6" stroke-linecap="round"/><line x1="366.7" y1="260.9" x2="375.9" y2="242.6" stroke="#eaa82c" stroke-width="1.6" stroke-linecap="round"/><line x1="366.7" y1="260.9" x2="351.3" y2="268.0" stroke="#eaa82c" stroke-width="1.6" stroke-linecap="round"/><line x1="366.7" y1="260.9" x2="379.3" y2="267.8" stroke="#eaa82c" stroke-width="1.6" stroke-linecap="round"/><line x1="477.5" y1="371.9" x2="486.7" y2="353.6" stroke="#eaa82c" stroke-width="1.6" stroke-linecap="round"/><line x1="477.5" y1="371.9" x2="462.1" y2="379.0" stroke="#eaa82c" stroke-width="1.6" stroke-linecap="round"/><line x1="477.5" y1="371.9" x2="490.2" y2="378.8" stroke="#eaa82c" stroke-width="1.6" stroke-linecap="round"/><line x1="476.6" y1="261.5" x2="485.8" y2="243.2" stroke="#eaa82c" stroke-width="1.6" stroke-linecap="round"/><line x1="476.6" y1="261.5" x2="461.2" y2="268.6" stroke="#eaa82c" stroke-width="1.6" stroke-linecap="round"/><line x1="476.6" y1="261.5" x2="489.2" y2="268.4" stroke="#eaa82c" stroke-width="1.6" stroke-linecap="round"/><circle cx="297.3" cy="295.4" r="8.3" fill="url(#gSm)"/><circle cx="296.3" cy="185.0" r="8.3" fill="url(#gSm)"/><circle cx="407.2" cy="296.0" r="8.3" fill="url(#gSm)"/><circle cx="406.2" cy="185.6" r="8.3" fill="url(#gSm)"/><circle cx="367.6" cy="371.3" r="8.3" fill="url(#gSm)"/><circle cx="366.7" cy="260.9" r="8.3" fill="url(#gSm)"/><circle cx="477.5" cy="371.9" r="8.3" fill="url(#gSm)"/><circle cx="476.6" cy="261.5" r="8.3" fill="url(#gSm)"/><line x1="276.1" y1="334.1" x2="286.7" y2="314.7" stroke="#eaa82c" stroke-width="1.6" stroke-linecap="round"/><line x1="275.2" y1="223.7" x2="285.8" y2="204.3" stroke="#eaa82c" stroke-width="1.6" stroke-linecap="round"/><line x1="386.0" y1="334.7" x2="396.6" y2="315.3" stroke="#eaa82c" stroke-width="1.6" stroke-linecap="round"/><line x1="385.1" y1="224.3" x2="395.7" y2="204.9" stroke="#eaa82c" stroke-width="1.6" stroke-linecap="round"/><line x1="386.0" y1="334.7" x2="376.8" y2="353.0" stroke="#eaa82c" stroke-width="1.6" stroke-linecap="round"/><line x1="385.1" y1="224.3" x2="375.9" y2="242.6" stroke="#eaa82c" stroke-width="1.6" stroke-linecap="round"/><line x1="495.9" y1="335.3" x2="486.7" y2="353.6" stroke="#eaa82c" stroke-width="1.6" stroke-linecap="round"/><line x1="495.0" y1="224.9" x2="485.8" y2="243.2" stroke="#eaa82c" stroke-width="1.6" stroke-linecap="round"/><line x1="276.1" y1="334.1" x2="295.6" y2="341.4" stroke="#eaa82c" stroke-width="1.6" stroke-linecap="round"/><line x1="275.2" y1="223.7" x2="294.6" y2="231.0" stroke="#eaa82c" stroke-width="1.6" stroke-linecap="round"/><line x1="386.0" y1="334.7" x2="405.5" y2="342.0" stroke="#eaa82c" stroke-width="1.6" stroke-linecap="round"/><line x1="385.1" y1="224.3" x2="404.5" y2="231.6" stroke="#eaa82c" stroke-width="1.6" stroke-linecap="round"/><line x1="386.0" y1="334.7" x2="370.5" y2="324.4" stroke="#eaa82c" stroke-width="1.6" stroke-linecap="round"/><line x1="385.1" y1="224.3" x2="369.5" y2="214.0" stroke="#eaa82c" stroke-width="1.6" stroke-linecap="round"/><line x1="495.9" y1="335.3" x2="480.4" y2="325.0" stroke="#eaa82c" stroke-width="1.6" stroke-linecap="round"/><line x1="495.0" y1="224.9" x2="479.4" y2="214.6" stroke="#eaa82c" stroke-width="1.6" stroke-linecap="round"/><circle cx="276.1" cy="334.1" r="4.5" fill="url(#gNm)"/><circle cx="275.2" cy="223.7" r="4.5" fill="url(#gNm)"/><circle cx="386.0" cy="334.7" r="4.5" fill="url(#gNm)"/><circle cx="385.1" cy="224.3" r="4.5" fill="url(#gNm)"/><circle cx="495.9" cy="335.3" r="4.5" fill="url(#gNm)"/><circle cx="495.0" cy="224.9" r="4.5" fill="url(#gNm)"/><line x1="275.5" y1="390.1" x2="385.4" y2="390.7" stroke="#e6e6e6" stroke-width="1.0"/><line x1="275.5" y1="390.1" x2="274.6" y2="279.7" stroke="#e6e6e6" stroke-width="1.0"/><line x1="274.6" y1="279.7" x2="384.4" y2="280.3" stroke="#e6e6e6" stroke-width="1.0"/><line x1="274.6" y1="279.7" x2="273.6" y2="169.3" stroke="#e6e6e6" stroke-width="1.0"/><line x1="273.6" y1="169.3" x2="383.5" y2="169.9" stroke="#e6e6e6" stroke-width="1.0"/><line x1="385.4" y1="390.7" x2="495.3" y2="391.3" stroke="#e6e6e6" stroke-width="1.0"/><line x1="385.4" y1="390.7" x2="384.4" y2="280.3" stroke="#e6e6e6" stroke-width="1.0"/><line x1="384.4" y1="280.3" x2="494.3" y2="280.9" stroke="#e6e6e6" stroke-width="1.0"/><line x1="384.4" y1="280.3" x2="383.5" y2="169.9" stroke="#e6e6e6" stroke-width="1.0"/><line x1="383.5" y1="169.9" x2="493.4" y2="170.5" stroke="#e6e6e6" stroke-width="1.0"/><line x1="495.3" y1="391.3" x2="494.3" y2="280.9" stroke="#e6e6e6" stroke-width="1.0"/><line x1="494.3" y1="280.9" x2="493.4" y2="170.5" stroke="#e6e6e6" stroke-width="1.0"/><line x1="274.6" y1="279.7" x2="285.9" y2="287.5" stroke="#eaa82c" stroke-width="1.6" stroke-linecap="round"/><line x1="273.6" y1="169.3" x2="285.0" y2="177.1" stroke="#eaa82c" stroke-width="1.6" stroke-linecap="round"/><line x1="385.4" y1="390.7" x2="376.5" y2="381.0" stroke="#eaa82c" stroke-width="1.6" stroke-linecap="round"/><line x1="384.4" y1="280.3" x2="395.8" y2="288.1" stroke="#eaa82c" stroke-width="1.6" stroke-linecap="round"/><line x1="384.4" y1="280.3" x2="375.6" y2="270.6" stroke="#eaa82c" stroke-width="1.6" stroke-linecap="round"/><line x1="383.5" y1="169.9" x2="394.9" y2="177.7" stroke="#eaa82c" stroke-width="1.6" stroke-linecap="round"/><line x1="495.3" y1="391.3" x2="486.4" y2="381.6" stroke="#eaa82c" stroke-width="1.6" stroke-linecap="round"/><line x1="494.3" y1="280.9" x2="485.5" y2="271.2" stroke="#eaa82c" stroke-width="1.6" stroke-linecap="round"/><line x1="330.0" y1="335.2" x2="322.5" y2="342.0" stroke="#eaa82c" stroke-width="1.6" stroke-linecap="round"/><line x1="329.0" y1="224.8" x2="321.6" y2="231.6" stroke="#eaa82c" stroke-width="1.6" stroke-linecap="round"/><line x1="439.9" y1="335.8" x2="432.4" y2="342.6" stroke="#eaa82c" stroke-width="1.6" stroke-linecap="round"/><line x1="438.9" y1="225.4" x2="431.5" y2="232.2" stroke="#eaa82c" stroke-width="1.6" stroke-linecap="round"/><line x1="330.0" y1="335.2" x2="342.5" y2="324.6" stroke="#eaa82c" stroke-width="1.6" stroke-linecap="round"/><line x1="329.0" y1="224.8" x2="341.5" y2="214.2" stroke="#eaa82c" stroke-width="1.6" stroke-linecap="round"/><line x1="439.9" y1="335.8" x2="452.4" y2="325.2" stroke="#eaa82c" stroke-width="1.6" stroke-linecap="round"/><line x1="438.9" y1="225.4" x2="451.4" y2="214.8" stroke="#eaa82c" stroke-width="1.6" stroke-linecap="round"/><circle cx="275.5" cy="390.1" r="3.6" fill="url(#gPm)"/><circle cx="274.6" cy="279.7" r="3.6" fill="url(#gPm)"/><circle cx="273.6" cy="169.3" r="3.6" fill="url(#gPm)"/><circle cx="385.4" cy="390.7" r="3.6" fill="url(#gPm)"/><circle cx="384.4" cy="280.3" r="3.6" fill="url(#gPm)"/><circle cx="383.5" cy="169.9" r="3.6" fill="url(#gPm)"/><circle cx="495.3" cy="391.3" r="3.6" fill="url(#gPm)"/><circle cx="494.3" cy="280.9" r="3.6" fill="url(#gPm)"/><circle cx="493.4" cy="170.5" r="3.6" fill="url(#gPm)"/><circle cx="330.0" cy="335.2" r="4.5" fill="url(#gNm)"/><circle cx="329.0" cy="224.8" r="4.5" fill="url(#gNm)"/><circle cx="439.9" cy="335.8" r="4.5" fill="url(#gNm)"/><circle cx="438.9" cy="225.4" r="4.5" fill="url(#gNm)"/></svg><svg style="position:absolute;left:165px;top:70px;overflow:visible" width="60" height="45"><defs><radialGradient id="ax" cx="0.4" cy="0.35" r="0.7"><stop offset="0" stop-color="#fff"/><stop offset="1" stop-color="#888"/></radialGradient></defs><line x1="12.6" y1="37.6" x2="12.6" y2="17" stroke="#d8d8d8" stroke-width="1.2"/><path d="M12.6 12.5 L15 20 L10.2 20 Z" fill="#f0f0f0"/><line x1="12.6" y1="37.6" x2="32" y2="37.6" stroke="#d8d8d8" stroke-width="1.2"/><path d="M37 37.6 L29.5 35.3 L29.5 39.9 Z" fill="#f0f0f0"/><circle cx="10.5" cy="37.6" r="2.2" fill="url(#ax)"/><text x="10.5" y="8" font-family="Liberation Sans" font-size="7" fill="#b8b8b8">b</text><text x="42" y="37" font-family="Liberation Sans" font-size="7" fill="#b8b8b8">a</text><text x="5" y="40" font-family="Liberation Sans" font-size="6" fill="#888">c</text></svg><div style="position:absolute;left:624.5px;top:423px;width:34px;height:46px;border:1px solid #5a5a5a;border-right:none;border-bottom:none;box-sizing:border-box;"></div><svg style="position:absolute;left:624px;top:423px;overflow:visible" width="34" height="46"><defs><radialGradient id="lgP" cx="0.45" cy="0.35" r="0.65"><stop offset="0" stop-color="#ff80ff"/><stop offset="0.55" stop-color="#f010f0"/><stop offset="1" stop-color="#a000a0"/></radialGradient><radialGradient id="lgS" cx="0.45" cy="0.35" r="0.65"><stop offset="0" stop-color="#ffffa0"/><stop offset="0.55" stop-color="#ffff10"/><stop offset="1" stop-color="#b0b000"/></radialGradient><radialGradient id="lgN" cx="0.45" cy="0.35" r="0.65"><stop offset="0" stop-color="#ffffff"/><stop offset="0.55" stop-color="#e0e0e0"/><stop offset="1" stop-color="#909090"/></radialGradient></defs><circle cx="7.2" cy="7.2" r="5.4" fill="url(#lgP)"/><circle cx="7.2" cy="22.5" r="5.4" fill="url(#lgS)"/><circle cx="7.2" cy="37.8" r="5.4" fill="url(#lgN)"/><text x="13.5" y="10.5" font-family="Liberation Sans" font-size="7.5" fill="#9a9a9a">P+5</text><text x="13.5" y="25.8" font-family="Liberation Sans" font-size="7.5" fill="#9a9a9a">S-2</text><text x="13.5" y="41" font-family="Liberation Sans" font-size="7.5" fill="#9a9a9a">Na+1</text></svg><div style="position:absolute;left:6px;top:53px;width:130px;height:10px;background:linear-gradient(to bottom,#f8f8f8,#ebebeb);border:1px solid #c2c2c2;border-radius:2px;box-sizing:border-box;"></div><div style="position:absolute;left:9.5px;top:53.47px;white-space:pre;font-family:'Liberation Sans',sans-serif;font-size:7.6px;line-height:9.6px;color:#111;transform:scaleY(1.06);transform-origin:0 7.4px;">Navigation</div><svg style="position:absolute;left:117px;top:57.5px;overflow:visible" width="5" height="4"><path d="M0 3.5 L2.5 0.5 L5 3.5 Z" fill="#111"/></svg><svg style="position:absolute;left:127px;top:56.3px;overflow:visible" width="5" height="4"><path d="M0.5 0.3 L4.5 3.7 M4.5 0.3 L0.5 3.7" stroke="#111" stroke-width="1.2"/></svg><div style="position:absolute;left:5px;top:66px;width:131px;height:164px;background:#fff;border-top:1px solid #d8d8d8;box-sizing:border-box;"></div><svg style="position:absolute;left:7.5px;top:66px;overflow:visible" width="11" height="11"><path d="M2 1 H7 L9 3 V10 H2 Z" fill="#fff" stroke="#777" stroke-width="0.8"/><circle cx="4" cy="5" r="3" fill="#f0f040"/><circle cx="6" cy="8" r="2.5" fill="#2a9a60"/><path d="M8 6 L10.5 8 L8 10 Z" fill="#000"/></svg><div style="position:absolute;left:21px;top:67.50px;white-space:pre;font-family:'Liberation Sans',sans-serif;font-size:7.92px;line-height:9.92px;color:#000;">Na3PS4-10-pictures.diamdoc</div><div style="position:absolute;left:10px;top:80px;width:6px;height:6px;border:1px solid #a8a8a8;background:#fff;box-sizing:border-box;"></div><div style="position:absolute;left:11.5px;top:82.5px;width:3px;height:1px;background:#333;"></div><div style="position:absolute;left:16px;top:83px;width:4px;height:1px;background:#c8c8c8;"></div><svg style="position:absolute;left:20px;top:77px;overflow:visible" width="9" height="10"><path d="M0.5 0.5 V9.5 M2.5 0.5 V9.5 M4.5 0.5 V9.5 M6.5 0.5 V9.5 M8.5 0.5 V9.5 M0 2.5 H9 M0 5 H9 M0 7.5 H9" stroke="#b8b8b8" stroke-width="0.7"/></svg><div style="position:absolute;left:33.7px;top:78.11px;white-space:pre;font-family:'Liberation Sans',sans-serif;font-size:7.9px;line-height:9.9px;color:#000;">Na3 P S4</div><div style="position:absolute;left:25px;top:87px;width:1px;height:131px;background:repeating-linear-gradient(to bottom,#a0a0a0 0 1px,transparent 1px 2px);"></div><div style="position:absolute;left:5px;top:66px;width:120px;height:152px;overflow:hidden"><div style="position:absolute;left:20px;top:28.0px;width:6px;height:1px;background:repeating-linear-gradient(to right,#a0a0a0 0 1px,transparent 1px 2px)"></div><svg style="position:absolute;left:27px;top:23.5px" width="10" height="9"><rect x="0.5" y="0.5" width="9" height="8" fill="#f4f4f4" stroke="#18186a"/><rect x="0.5" y="0.5" width="9" height="1.6" fill="#18186a"/><rect x="2" y="4" width="6" height="3" fill="#c8c8d8"/></svg><div style="position:absolute;left:41.2px;top:23.81px;white-space:pre;font-family:'Liberation Sans',sans-serif;font-size:8.05px;line-height:9.9px;color:#000;transform:scaleY(1.08);transform-origin:0 7.7px">Data sheet</div><div style="position:absolute;left:20px;top:38.5px;width:6px;height:1px;background:repeating-linear-gradient(to right,#a0a0a0 0 1px,transparent 1px 2px)"></div><svg style="position:absolute;left:27px;top:34.0px" width="10" height="9"><rect x="0.5" y="0.5" width="9" height="8" fill="#fff" stroke="#18186a"/><path d="M2 7 L5 2.5 L8 7 Z" fill="none" stroke="#222" stroke-width="0.9"/></svg><div style="position:absolute;left:41.2px;top:34.26px;white-space:pre;font-family:'Liberation Sans',sans-serif;font-size:8.05px;line-height:9.9px;color:#000;transform:scaleY(1.08);transform-origin:0 7.7px">Distances/angles</div><div style="position:absolute;left:20px;top:48.9px;width:6px;height:1px;background:repeating-linear-gradient(to right,#a0a0a0 0 1px,transparent 1px 2px)"></div><svg style="position:absolute;left:27px;top:44.4px" width="10" height="9"><rect x="0.5" y="0.5" width="9" height="8" fill="#e0e4ff" stroke="#18186a"/><path d="M1.5 7 L3 7 L3.5 3 L4 7 L5.5 7 L6 2.5 L6.5 7 L8.5 7" fill="none" stroke="#2222aa" stroke-width="0.9"/></svg><div style="position:absolute;left:41.2px;top:44.71px;white-space:pre;font-family:'Liberation Sans',sans-serif;font-size:8.05px;line-height:9.9px;color:#000;transform:scaleY(1.08);transform-origin:0 7.7px">Powder pattern</div><div style="position:absolute;left:20px;top:59.3px;width:6px;height:1px;background:repeating-linear-gradient(to right,#a0a0a0 0 1px,transparent 1px 2px)"></div><svg style="position:absolute;left:27px;top:54.8px" width="10" height="9"><rect x="0" y="0" width="10" height="8" fill="#050505"/><path d="M0 0 H10 L9.5 2 H0.5 Z" fill="#10108a"/><path d="M1 7 L3 3.5" stroke="#e07010" stroke-width="1.6"/><path d="M3 7 L6 3 M4 4 L6 7" stroke="#30c030" stroke-width="1.3"/><path d="M7 3 L8.5 5" stroke="#d02040" stroke-width="1.3"/><path d="M8.5 4 V7" stroke="#a8e050" stroke-width="1.3"/><path d="M1.5 7.5 H9" stroke="#108010" stroke-width="0.8"/></svg><div style="position:absolute;left:41.2px;top:55.16px;white-space:pre;font-family:'Liberation Sans',sans-serif;font-size:8.05px;line-height:9.9px;color:#000;transform:scaleY(1.08);transform-origin:0 7.7px">Picture 1</div><div style="position:absolute;left:20px;top:69.8px;width:6px;height:1px;background:repeating-linear-gradient(to right,#a0a0a0 0 1px,transparent 1px 2px)"></div><svg style="position:absolute;left:27px;top:65.3px" width="10" height="9"><rect x="0" y="0" width="10" height="8" fill="#050505"/><path d="M0 0 H10 L9.5 2 H0.5 Z" fill="#10108a"/><path d="M1 7 L3 3.5" stroke="#e07010" stroke-width="1.6"/><path d="M3 7 L6 3 M4 4 L6 7" stroke="#30c030" stroke-width="1.3"/><path d="M7 3 L8.5 5" stroke="#d02040" stroke-width="1.3"/><path d="M8.5 4 V7" stroke="#a8e050" stroke-width="1.3"/><path d="M1.5 7.5 H9" stroke="#108010" stroke-width="0.8"/></svg><div style="position:absolute;left:41.2px;top:65.61px;white-space:pre;font-family:'Liberation Sans',sans-serif;font-size:8.05px;line-height:9.9px;color:#000;transform:scaleY(1.08);transform-origin:0 7.7px">Unit cell with PO4 polyhedra</div><div style="position:absolute;left:20px;top:80.3px;width:6px;height:1px;background:repeating-linear-gradient(to right,#a0a0a0 0 1px,transparent 1px 2px)"></div><svg style="position:absolute;left:27px;top:75.8px" width="10" height="9"><rect x="0" y="0" width="10" height="8" fill="#050505"/><path d="M0 0 H10 L9.5 2 H0.5 Z" fill="#10108a"/><path d="M1 7 L3 3.5" stroke="#e07010" stroke-width="1.6"/><path d="M3 7 L6 3 M4 4 L6 7" stroke="#30c030" stroke-width="1.3"/><path d="M7 3 L8.5 5" stroke="#d02040" stroke-width="1.3"/><path d="M8.5 4 V7" stroke="#a8e050" stroke-width="1.3"/><path d="M1.5 7.5 H9" stroke="#108010" stroke-width="0.8"/></svg><div style="position:absolute;left:41.2px;top:76.06px;white-space:pre;font-family:'Liberation Sans',sans-serif;font-size:8.05px;line-height:9.9px;color:#000;transform:scaleY(1.08);transform-origin:0 7.7px">Super cell 2x2x2 with NaS polyhedron</div><div style="position:absolute;left:20px;top:90.7px;width:6px;height:1px;background:repeating-linear-gradient(to right,#a0a0a0 0 1px,transparent 1px 2px)"></div><svg style="position:absolute;left:27px;top:86.2px" width="10" height="9"><rect x="0" y="0" width="10" height="8" fill="#050505"/><path d="M0 0 H10 L9.5 2 H0.5 Z" fill="#10108a"/><path d="M1 7 L3 3.5" stroke="#e07010" stroke-width="1.6"/><path d="M3 7 L6 3 M4 4 L6 7" stroke="#30c030" stroke-width="1.3"/><path d="M7 3 L8.5 5" stroke="#d02040" stroke-width="1.3"/><path d="M8.5 4 V7" stroke="#a8e050" stroke-width="1.3"/><path d="M1.5 7.5 H9" stroke="#108010" stroke-width="0.8"/></svg><div style="position:absolute;left:41.2px;top:86.51px;white-space:pre;font-family:'Liberation Sans',sans-serif;font-size:8.05px;line-height:9.9px;color:#000;transform:scaleY(1.08);transform-origin:0 7.7px">Network with broken-off fragments</div><div style="position:absolute;left:20px;top:101.1px;width:6px;height:1px;background:repeating-linear-gradient(to right,#a0a0a0 0 1px,transparent 1px 2px)"></div><svg style="position:absolute;left:27px;top:96.6px" width="10" height="9"><rect x="0" y="0" width="10" height="8" fill="#050505"/><path d="M0 0 H10 L9.5 2 H0.5 Z" fill="#10108a"/><path d="M1 7 L3 3.5" stroke="#e07010" stroke-width="1.6"/><path d="M3 7 L6 3 M4 4 L6 7" stroke="#30c030" stroke-width="1.3"/><path d="M7 3 L8.5 5" stroke="#d02040" stroke-width="1.3"/><path d="M8.5 4 V7" stroke="#a8e050" stroke-width="1.3"/><path d="M1.5 7.5 H9" stroke="#108010" stroke-width="0.8"/></svg><div style="position:absolute;left:41.2px;top:96.96px;white-space:pre;font-family:'Liberation Sans',sans-serif;font-size:8.05px;line-height:9.9px;color:#000;transform:scaleY(1.08);transform-origin:0 7.7px">Picture 5</div><div style="position:absolute;left:20px;top:111.6px;width:6px;height:1px;background:repeating-linear-gradient(to right,#a0a0a0 0 1px,transparent 1px 2px)"></div><svg style="position:absolute;left:27px;top:107.1px" width="10" height="9"><rect x="0" y="0" width="10" height="8" fill="#050505"/><path d="M0 0 H10 L9.5 2 H0.5 Z" fill="#10108a"/><path d="M1 7 L3 3.5" stroke="#e07010" stroke-width="1.6"/><path d="M3 7 L6 3 M4 4 L6 7" stroke="#30c030" stroke-width="1.3"/><path d="M7 3 L8.5 5" stroke="#d02040" stroke-width="1.3"/><path d="M8.5 4 V7" stroke="#a8e050" stroke-width="1.3"/><path d="M1.5 7.5 H9" stroke="#108010" stroke-width="0.8"/></svg><div style="position:absolute;left:41.2px;top:107.41px;white-space:pre;font-family:'Liberation Sans',sans-serif;font-size:8.05px;line-height:9.9px;color:#000;transform:scaleY(1.08);transform-origin:0 7.7px">Picture 6</div><div style="position:absolute;left:20px;top:122.0px;width:6px;height:1px;background:repeating-linear-gradient(to right,#a0a0a0 0 1px,transparent 1px 2px)"></div><svg style="position:absolute;left:27px;top:117.5px" width="10" height="9"><rect x="0" y="0" width="10" height="8" fill="#050505"/><path d="M0 0 H10 L9.5 2 H0.5 Z" fill="#10108a"/><path d="M1 7 L3 3.5" stroke="#e07010" stroke-width="1.6"/><path d="M3 7 L6 3 M4 4 L6 7" stroke="#30c030" stroke-width="1.3"/><path d="M7 3 L8.5 5" stroke="#d02040" stroke-width="1.3"/><path d="M8.5 4 V7" stroke="#a8e050" stroke-width="1.3"/><path d="M1.5 7.5 H9" stroke="#108010" stroke-width="0.8"/></svg><div style="position:absolute;left:41.2px;top:117.86px;white-space:pre;font-family:'Liberation Sans',sans-serif;font-size:8.05px;line-height:9.9px;color:#000;transform:scaleY(1.08);transform-origin:0 7.7px">Picture 7</div><div style="position:absolute;left:20px;top:132.5px;width:6px;height:1px;background:repeating-linear-gradient(to right,#a0a0a0 0 1px,transparent 1px 2px)"></div><svg style="position:absolute;left:27px;top:128.0px" width="10" height="9"><rect x="0" y="0" width="10" height="8" fill="#050505"/><path d="M0 0 H10 L9.5 2 H0.5 Z" fill="#10108a"/><path d="M1 7 L3 3.5" stroke="#e07010" stroke-width="1.6"/><path d="M3 7 L6 3 M4 4 L6 7" stroke="#30c030" stroke-width="1.3"/><path d="M7 3 L8.5 5" stroke="#d02040" stroke-width="1.3"/><path d="M8.5 4 V7" stroke="#a8e050" stroke-width="1.3"/><path d="M1.5 7.5 H9" stroke="#108010" stroke-width="0.8"/></svg><div style="position:absolute;left:41.2px;top:128.31px;white-space:pre;font-family:'Liberation Sans',sans-serif;font-size:8.05px;line-height:9.9px;color:#000;transform:scaleY(1.08);transform-origin:0 7.7px">Picture 8</div><div style="position:absolute;left:20px;top:142.9px;width:6px;height:1px;background:repeating-linear-gradient(to right,#a0a0a0 0 1px,transparent 1px 2px)"></div><svg style="position:absolute;left:27px;top:138.4px" width="10" height="9"><rect x="0" y="0" width="10" height="8" fill="#050505"/><path d="M0 0 H10 L9.5 2 H0.5 Z" fill="#10108a"/><path d="M1 7 L3 3.5" stroke="#e07010" stroke-width="1.6"/><path d="M3 7 L6 3 M4 4 L6 7" stroke="#30c030" stroke-width="1.3"/><path d="M7 3 L8.5 5" stroke="#d02040" stroke-width="1.3"/><path d="M8.5 4 V7" stroke="#a8e050" stroke-width="1.3"/><path d="M1.5 7.5 H9" stroke="#108010" stroke-width="0.8"/></svg><div style="position:absolute;left:41.2px;top:138.76px;white-space:pre;font-family:'Liberation Sans',sans-serif;font-size:8.05px;line-height:9.9px;color:#000;transform:scaleY(1.08);transform-origin:0 7.7px">Picture 9</div><div style="position:absolute;left:20px;top:153.4px;width:6px;height:1px;background:repeating-linear-gradient(to right,#a0a0a0 0 1px,transparent 1px 2px)"></div><svg style="position:absolute;left:27px;top:148.9px" width="10" height="9"><rect x="0" y="0" width="10" height="8" fill="#050505"/><path d="M0 0 H10 L9.5 2 H0.5 Z" fill="#10108a"/><path d="M1 7 L3 3.5" stroke="#e07010" stroke-width="1.6"/><path d="M3 7 L6 3 M4 4 L6 7" stroke="#30c030" stroke-width="1.3"/><path d="M7 3 L8.5 5" stroke="#d02040" stroke-width="1.3"/><path d="M8.5 4 V7" stroke="#a8e050" stroke-width="1.3"/><path d="M1.5 7.5 H9" stroke="#108010" stroke-width="0.8"/></svg><div style="position:absolute;left:41.2px;top:149.21px;white-space:pre;font-family:'Liberation Sans',sans-serif;font-size:8.05px;line-height:9.9px;color:#000;transform:scaleY(1.08);transform-origin:0 7.7px">Picture 10</div></div><div style="position:absolute;left:45px;top:214px;width:43px;height:4px;border:1px solid #333;border-bottom:none;box-sizing:border-box;"></div><div style="position:absolute;left:125px;top:66px;width:11px;height:152px;background:linear-gradient(to right,#e8e8e8,#f4f4f4);"></div><svg style="position:absolute;left:127.5px;top:70px;overflow:visible" width="6" height="4"><path d="M0 3.5 L3 0.5 L6 3.5 Z" fill="#555"/></svg><div style="position:absolute;left:126px;top:78px;width:9px;height:119px;background:linear-gradient(to right,#f2f2f2,#dadada);border:1px solid #b4b4b4;border-radius:2px;box-sizing:border-box;"></div><div style="position:absolute;left:128.5px;top:135px;width:4px;height:1px;background:#777;"></div><div style="position:absolute;left:128.5px;top:137px;width:4px;height:1px;background:#777;"></div><div style="position:absolute;left:128.5px;top:139px;width:4px;height:1px;background:#777;"></div><svg style="position:absolute;left:127.5px;top:210px;overflow:visible" width="6" height="4"><path d="M0 0.5 L3 3.5 L6 0.5 Z" fill="#555"/></svg><div style="position:absolute;left:5px;top:218px;width:131px;height:12px;background:linear-gradient(to bottom,#e8e8e8,#f4f4f4);"></div><svg style="position:absolute;left:8px;top:221px;overflow:visible" width="4" height="6"><path d="M3.5 0 L0.5 3 L3.5 6 Z" fill="#555"/></svg><div style="position:absolute;left:17px;top:219px;width:64px;height:10px;background:linear-gradient(to bottom,#f4f4f4,#d8d8d8);border:1px solid #b4b4b4;border-radius:2px;box-sizing:border-box;"></div><div style="position:absolute;left:46px;top:222px;width:1px;height:4px;background:#777;"></div><div style="position:absolute;left:48px;top:222px;width:1px;height:4px;background:#777;"></div><div style="position:absolute;left:50px;top:222px;width:1px;height:4px;background:#777;"></div><svg style="position:absolute;left:117px;top:221px;overflow:visible" width="4" height="6"><path d="M0.5 0 L3.5 3 L0.5 6 Z" fill="#555"/></svg><div style="position:absolute;left:125px;top:218px;width:11px;height:12px;background:#f0f0f0;"></div><div style="position:absolute;left:6px;top:242px;width:130px;height:10px;background:linear-gradient(to bottom,#f8f8f8,#ebebeb);border:1px solid #c2c2c2;border-radius:2px;box-sizing:border-box;"></div><div style="position:absolute;left:9.4px;top:242.14px;white-space:pre;font-family:'Liberation Sans',sans-serif;font-size:6.8px;line-height:8.8px;color:#111;transform:scaleY(1.12);transform-origin:0 6.8px;">Thumbnails</div><svg style="position:absolute;left:117px;top:246.5px;overflow:visible" width="5" height="4"><path d="M0 3.5 L2.5 0.5 L5 3.5 Z" fill="#111"/></svg><svg style="position:absolute;left:127px;top:245.3px;overflow:visible" width="5" height="4"><path d="M0.5 0.3 L4.5 3.7 M4.5 0.3 L0.5 3.7" stroke="#111" stroke-width="1.2"/></svg><div style="position:absolute;left:5px;top:254px;width:131px;height:212px;background:#fff;border-top:1px solid #d8d8d8;box-sizing:border-box;"></div><div style="position:absolute;left:125px;top:254px;width:11px;height:212px;background:linear-gradient(to right,#e8e8e8,#f4f4f4);"></div><svg style="position:absolute;left:127.5px;top:258px;overflow:visible" width="6" height="4"><path d="M0 3.5 L3 0.5 L6 3.5 Z" fill="#555"/></svg><div style="position:absolute;left:126px;top:266px;width:9px;height:40px;background:linear-gradient(to right,#f2f2f2,#dadada);border:1px solid #b4b4b4;border-radius:2px;box-sizing:border-box;"></div><div style="position:absolute;left:128.5px;top:283px;width:4px;height:1px;background:#777;"></div><div style="position:absolute;left:128.5px;top:285px;width:4px;height:1px;background:#777;"></div><div style="position:absolute;left:128.5px;top:287px;width:4px;height:1px;background:#777;"></div><svg style="position:absolute;left:127.5px;top:458px;overflow:visible" width="6" height="4"><path d="M0 0.5 L3 3.5 L6 0.5 Z" fill="#555"/></svg><div style="position:absolute;left:12px;top:261px;width:106px;height:79px;background:#fff;border:1px solid #a8a8a8;box-sizing:border-box;"></div><div style="position:absolute;left:17px;top:267px;width:95px;height:66px;background:#000;"></div><svg style="position:absolute;left:0;top:0" width="964" height="505"><defs><clipPath id="c1"><rect x="17" y="267" width="95" height="66"/></clipPath></defs><g clip-path="url(#c1)"><defs>
<radialGradient id="gSt" cx="0.4" cy="0.35" r="0.65"><stop offset="0" stop-color="#ffffb0"/><stop offset="0.35" stop-color="#ffff20"/><stop offset="0.85" stop-color="#e6e600"/><stop offset="1" stop-color="#a8a800"/></radialGradient>
<radialGradient id="gNt" cx="0.4" cy="0.35" r="0.65"><stop offset="0" stop-color="#ffffff"/><stop offset="0.5" stop-color="#e4e4e4"/><stop offset="1" stop-color="#8c8c8c"/></radialGradient>
<radialGradient id="gPt" cx="0.4" cy="0.35" r="0.65"><stop offset="0" stop-color="#ff90ff"/><stop offset="0.5" stop-color="#f010f0"/><stop offset="1" stop-color="#a000a0"/></radialGradient>
</defs><line x1="44.5" y1="321.2" x2="91.4" y2="321.2" stroke="#909090" stroke-width="0.6"/><line x1="44.5" y1="321.2" x2="44.5" y2="274.2" stroke="#909090" stroke-width="0.6"/><line x1="44.5" y1="274.2" x2="91.4" y2="274.2" stroke="#909090" stroke-width="0.6"/><line x1="91.4" y1="321.2" x2="91.4" y2="274.2" stroke="#909090" stroke-width="0.6"/><line x1="44.5" y1="321.2" x2="47.7" y2="317.3" stroke="#c08a30" stroke-width="0.8" stroke-linecap="round"/><line x1="91.4" y1="274.2" x2="87.2" y2="278.9" stroke="#c08a30" stroke-width="0.8" stroke-linecap="round"/><line x1="68.0" y1="297.7" x2="63.2" y2="294.2" stroke="#c08a30" stroke-width="0.8" stroke-linecap="round"/><line x1="68.0" y1="297.7" x2="70.6" y2="302.8" stroke="#c08a30" stroke-width="0.8" stroke-linecap="round"/><circle cx="44.5" cy="321.2" r="1.6" fill="url(#gPt)"/><circle cx="44.5" cy="274.2" r="1.6" fill="url(#gPt)"/><circle cx="91.4" cy="321.2" r="1.6" fill="url(#gPt)"/><circle cx="91.4" cy="274.2" r="1.6" fill="url(#gPt)"/><circle cx="68.0" cy="297.7" r="2.0" fill="url(#gNt)"/><line x1="67.5" y1="321.6" x2="59.2" y2="317.5" stroke="#c08a30" stroke-width="0.8" stroke-linecap="round"/><line x1="67.5" y1="274.6" x2="75.2" y2="279.1" stroke="#c08a30" stroke-width="0.8" stroke-linecap="round"/><line x1="67.5" y1="274.6" x2="63.0" y2="282.7" stroke="#c08a30" stroke-width="0.8" stroke-linecap="round"/><line x1="67.5" y1="321.6" x2="70.4" y2="314.8" stroke="#c08a30" stroke-width="0.8" stroke-linecap="round"/><circle cx="67.5" cy="321.6" r="2.0" fill="url(#gNt)"/><circle cx="67.5" cy="274.6" r="2.0" fill="url(#gNt)"/><line x1="50.9" y1="313.4" x2="47.7" y2="317.3" stroke="#c08a30" stroke-width="0.8" stroke-linecap="round"/><line x1="83.0" y1="283.6" x2="87.2" y2="278.9" stroke="#c08a30" stroke-width="0.8" stroke-linecap="round"/><line x1="50.9" y1="313.4" x2="59.2" y2="317.5" stroke="#c08a30" stroke-width="0.8" stroke-linecap="round"/><line x1="50.9" y1="313.4" x2="46.4" y2="306.6" stroke="#c08a30" stroke-width="0.8" stroke-linecap="round"/><line x1="50.9" y1="313.4" x2="46.1" y2="318.6" stroke="#c08a30" stroke-width="0.8" stroke-linecap="round"/><line x1="83.0" y1="283.6" x2="75.2" y2="279.1" stroke="#c08a30" stroke-width="0.8" stroke-linecap="round"/><line x1="83.0" y1="283.6" x2="85.9" y2="291.7" stroke="#c08a30" stroke-width="0.8" stroke-linecap="round"/><line x1="83.0" y1="283.6" x2="85.6" y2="280.2" stroke="#c08a30" stroke-width="0.8" stroke-linecap="round"/><circle cx="50.9" cy="313.4" r="3.4" fill="url(#gSt)"/><circle cx="83.0" cy="283.6" r="3.4" fill="url(#gSt)"/><line x1="58.5" y1="290.8" x2="61.7" y2="295.5" stroke="#c08a30" stroke-width="0.8" stroke-linecap="round"/><line x1="73.3" y1="308.0" x2="69.1" y2="304.1" stroke="#c08a30" stroke-width="0.8" stroke-linecap="round"/><line x1="58.5" y1="290.8" x2="63.0" y2="282.7" stroke="#c08a30" stroke-width="0.8" stroke-linecap="round"/><line x1="58.5" y1="290.8" x2="50.2" y2="295.3" stroke="#c08a30" stroke-width="0.8" stroke-linecap="round"/><line x1="58.5" y1="290.8" x2="61.4" y2="283.9" stroke="#c08a30" stroke-width="0.8" stroke-linecap="round"/><line x1="58.5" y1="290.8" x2="63.2" y2="294.2" stroke="#c08a30" stroke-width="0.8" stroke-linecap="round"/><line x1="73.3" y1="308.0" x2="70.4" y2="314.8" stroke="#c08a30" stroke-width="0.8" stroke-linecap="round"/><line x1="73.3" y1="308.0" x2="81.0" y2="303.9" stroke="#c08a30" stroke-width="0.8" stroke-linecap="round"/><line x1="73.3" y1="308.0" x2="68.8" y2="316.0" stroke="#c08a30" stroke-width="0.8" stroke-linecap="round"/><line x1="73.3" y1="308.0" x2="70.6" y2="302.8" stroke="#c08a30" stroke-width="0.8" stroke-linecap="round"/><circle cx="58.5" cy="290.8" r="3.4" fill="url(#gSt)"/><circle cx="73.3" cy="308.0" r="3.4" fill="url(#gSt)"/><line x1="41.9" y1="299.8" x2="46.4" y2="306.6" stroke="#c08a30" stroke-width="0.8" stroke-linecap="round"/><line x1="88.8" y1="299.8" x2="85.9" y2="291.7" stroke="#c08a30" stroke-width="0.8" stroke-linecap="round"/><line x1="41.9" y1="299.8" x2="50.2" y2="295.3" stroke="#c08a30" stroke-width="0.8" stroke-linecap="round"/><line x1="88.8" y1="299.8" x2="81.0" y2="303.9" stroke="#c08a30" stroke-width="0.8" stroke-linecap="round"/><line x1="41.9" y1="299.8" x2="48.5" y2="304.1" stroke="#c08a30" stroke-width="0.8" stroke-linecap="round"/><line x1="88.8" y1="299.8" x2="80.6" y2="296.7" stroke="#c08a30" stroke-width="0.8" stroke-linecap="round"/><circle cx="41.9" cy="299.8" r="2.0" fill="url(#gNt)"/><circle cx="88.8" cy="299.8" r="2.0" fill="url(#gNt)"/><line x1="44.5" y1="321.2" x2="38.3" y2="326.2" stroke="#909090" stroke-width="0.6"/><line x1="44.5" y1="274.2" x2="38.3" y2="279.2" stroke="#909090" stroke-width="0.6"/><line x1="91.4" y1="321.2" x2="85.2" y2="326.2" stroke="#909090" stroke-width="0.6"/><line x1="91.4" y1="274.2" x2="85.2" y2="279.2" stroke="#909090" stroke-width="0.6"/><line x1="64.9" y1="300.2" x2="61.7" y2="295.5" stroke="#c08a30" stroke-width="0.8" stroke-linecap="round"/><line x1="64.9" y1="300.2" x2="69.1" y2="304.1" stroke="#c08a30" stroke-width="0.8" stroke-linecap="round"/><line x1="64.9" y1="300.2" x2="60.0" y2="304.3" stroke="#c08a30" stroke-width="0.8" stroke-linecap="round"/><line x1="64.9" y1="300.2" x2="68.6" y2="296.9" stroke="#c08a30" stroke-width="0.8" stroke-linecap="round"/><line x1="41.4" y1="323.7" x2="46.1" y2="318.6" stroke="#c08a30" stroke-width="0.8" stroke-linecap="round"/><line x1="88.3" y1="276.7" x2="85.6" y2="280.2" stroke="#c08a30" stroke-width="0.8" stroke-linecap="round"/><line x1="41.4" y1="276.7" x2="44.7" y2="281.3" stroke="#c08a30" stroke-width="0.8" stroke-linecap="round"/><line x1="88.3" y1="323.7" x2="83.0" y2="320.8" stroke="#c08a30" stroke-width="0.8" stroke-linecap="round"/><circle cx="64.9" cy="300.2" r="1.6" fill="url(#gPt)"/><circle cx="41.4" cy="323.7" r="2.0" fill="url(#gNt)"/><circle cx="41.4" cy="276.7" r="2.0" fill="url(#gNt)"/><circle cx="88.3" cy="323.7" r="2.0" fill="url(#gNt)"/><circle cx="88.3" cy="276.7" r="2.0" fill="url(#gNt)"/><line x1="64.4" y1="277.1" x2="56.2" y2="281.4" stroke="#c08a30" stroke-width="0.8" stroke-linecap="round"/><line x1="64.4" y1="324.1" x2="71.0" y2="321.0" stroke="#c08a30" stroke-width="0.8" stroke-linecap="round"/><line x1="64.4" y1="277.1" x2="61.4" y2="283.9" stroke="#c08a30" stroke-width="0.8" stroke-linecap="round"/><line x1="64.4" y1="324.1" x2="68.8" y2="316.0" stroke="#c08a30" stroke-width="0.8" stroke-linecap="round"/><line x1="64.4" y1="324.1" x2="59.8" y2="316.3" stroke="#c08a30" stroke-width="0.8" stroke-linecap="round"/><line x1="64.4" y1="277.1" x2="68.4" y2="285.3" stroke="#c08a30" stroke-width="0.8" stroke-linecap="round"/><circle cx="64.4" cy="324.1" r="2.0" fill="url(#gNt)"/><circle cx="64.4" cy="277.1" r="2.0" fill="url(#gNt)"/><line x1="55.2" y1="308.5" x2="60.0" y2="304.3" stroke="#c08a30" stroke-width="0.8" stroke-linecap="round"/><line x1="72.4" y1="293.6" x2="68.6" y2="296.9" stroke="#c08a30" stroke-width="0.8" stroke-linecap="round"/><line x1="55.2" y1="308.5" x2="47.0" y2="305.4" stroke="#c08a30" stroke-width="0.8" stroke-linecap="round"/><line x1="55.2" y1="308.5" x2="48.5" y2="304.1" stroke="#c08a30" stroke-width="0.8" stroke-linecap="round"/><line x1="55.2" y1="308.5" x2="59.8" y2="316.3" stroke="#c08a30" stroke-width="0.8" stroke-linecap="round"/><line x1="55.2" y1="308.5" x2="58.5" y2="305.6" stroke="#c08a30" stroke-width="0.8" stroke-linecap="round"/><line x1="72.4" y1="293.6" x2="79.0" y2="298.0" stroke="#c08a30" stroke-width="0.8" stroke-linecap="round"/><line x1="72.4" y1="293.6" x2="80.6" y2="296.7" stroke="#c08a30" stroke-width="0.8" stroke-linecap="round"/><line x1="72.4" y1="293.6" x2="68.4" y2="285.3" stroke="#c08a30" stroke-width="0.8" stroke-linecap="round"/><line x1="72.4" y1="293.6" x2="67.1" y2="298.1" stroke="#c08a30" stroke-width="0.8" stroke-linecap="round"/><circle cx="55.2" cy="308.5" r="3.4" fill="url(#gSt)"/><circle cx="72.4" cy="293.6" r="3.4" fill="url(#gSt)"/><line x1="47.9" y1="285.8" x2="43.1" y2="282.5" stroke="#c08a30" stroke-width="0.8" stroke-linecap="round"/><line x1="77.6" y1="317.9" x2="81.4" y2="322.1" stroke="#c08a30" stroke-width="0.8" stroke-linecap="round"/><line x1="47.9" y1="285.8" x2="43.3" y2="294.1" stroke="#c08a30" stroke-width="0.8" stroke-linecap="round"/><line x1="47.9" y1="285.8" x2="56.2" y2="281.4" stroke="#c08a30" stroke-width="0.8" stroke-linecap="round"/><line x1="47.9" y1="285.8" x2="44.7" y2="281.3" stroke="#c08a30" stroke-width="0.8" stroke-linecap="round"/><line x1="77.6" y1="317.9" x2="81.7" y2="310.1" stroke="#c08a30" stroke-width="0.8" stroke-linecap="round"/><line x1="77.6" y1="317.9" x2="71.0" y2="321.0" stroke="#c08a30" stroke-width="0.8" stroke-linecap="round"/><line x1="77.6" y1="317.9" x2="83.0" y2="320.8" stroke="#c08a30" stroke-width="0.8" stroke-linecap="round"/><circle cx="47.9" cy="285.8" r="3.4" fill="url(#gSt)"/><circle cx="77.6" cy="317.9" r="3.4" fill="url(#gSt)"/><line x1="38.8" y1="302.3" x2="43.3" y2="294.1" stroke="#c08a30" stroke-width="0.8" stroke-linecap="round"/><line x1="85.7" y1="302.3" x2="81.7" y2="310.1" stroke="#c08a30" stroke-width="0.8" stroke-linecap="round"/><line x1="38.8" y1="302.3" x2="47.0" y2="305.4" stroke="#c08a30" stroke-width="0.8" stroke-linecap="round"/><line x1="85.7" y1="302.3" x2="79.0" y2="298.0" stroke="#c08a30" stroke-width="0.8" stroke-linecap="round"/><circle cx="38.8" cy="302.3" r="2.0" fill="url(#gNt)"/><circle cx="85.7" cy="302.3" r="2.0" fill="url(#gNt)"/><line x1="38.3" y1="326.2" x2="85.2" y2="326.2" stroke="#909090" stroke-width="0.6"/><line x1="38.3" y1="326.2" x2="38.3" y2="279.2" stroke="#909090" stroke-width="0.6"/><line x1="38.3" y1="279.2" x2="85.2" y2="279.2" stroke="#909090" stroke-width="0.6"/><line x1="85.2" y1="326.2" x2="85.2" y2="279.2" stroke="#909090" stroke-width="0.6"/><line x1="38.3" y1="279.2" x2="43.1" y2="282.5" stroke="#c08a30" stroke-width="0.8" stroke-linecap="round"/><line x1="85.2" y1="326.2" x2="81.4" y2="322.1" stroke="#c08a30" stroke-width="0.8" stroke-linecap="round"/><line x1="61.8" y1="302.7" x2="58.5" y2="305.6" stroke="#c08a30" stroke-width="0.8" stroke-linecap="round"/><line x1="61.8" y1="302.7" x2="67.1" y2="298.1" stroke="#c08a30" stroke-width="0.8" stroke-linecap="round"/><circle cx="38.3" cy="326.2" r="1.6" fill="url(#gPt)"/><circle cx="38.3" cy="279.2" r="1.6" fill="url(#gPt)"/><circle cx="85.2" cy="326.2" r="1.6" fill="url(#gPt)"/><circle cx="85.2" cy="279.2" r="1.6" fill="url(#gPt)"/><circle cx="61.8" cy="302.7" r="2.0" fill="url(#gNt)"/></g></svg><svg style="position:absolute;left:22px;top:270px;overflow:visible" width="12" height="12"><path d="M3 1 V9 H8" stroke="#999" stroke-width="0.6" fill="none"/></svg><svg style="position:absolute;left:106px;top:323px;overflow:visible" width="5" height="10"><circle cx="2" cy="1.5" r="1.2" fill="#f0f"/><circle cx="2" cy="4.5" r="1.2" fill="#ff0"/><circle cx="2" cy="7.5" r="1.2" fill="#ddd"/></svg><div style="position:absolute;left:-136px;width:400px;text-align:center;top:341.77px;white-space:pre;font-family:'Liberation Sans',sans-serif;font-size:7.95px;line-height:9.95px;color:#151515;">Na3 P S4: Picture 1</div><div style="position:absolute;left:12px;top:353.5px;width:106px;height:79px;background:#fff;border:1px solid #a8a8a8;box-sizing:border-box;"></div><div style="position:absolute;left:18.5px;top:358.3px;width:92px;height:69px;background:#000;"></div><svg style="position:absolute;left:0;top:0" width="964" height="505"><defs><clipPath id="c2"><rect x="18.5" y="358.3" width="92" height="69"/></clipPath></defs><g clip-path="url(#c2)"><rect x="43.6" y="376" width="35.4" height="35.4" fill="none" stroke="#808080" stroke-width="0.7"/><rect x="48.6" y="372" width="35.4" height="35.4" fill="none" stroke="#606060" stroke-width="0.6"/><polygon points="37.5,369.0 43.0,366.0 54.0,366.5 55.0,378.0 50.0,384.0 37.5,382.5" fill="#2a90c0"/><polygon points="37.5,369.0 43.0,366.0 54.0,366.5 47.0,375.0" fill="#3aa6d6"/><polygon points="54.0,366.5 55.0,378.0 50.0,384.0 47.0,375.0" fill="#2080b4"/><line x1="37.5" y1="382.5" x2="54.0" y2="366.5" stroke="#5060d0" stroke-width="0.6"/><circle cx="37.5" cy="369.0" r="0.9" fill="#e8e840"/><circle cx="43.0" cy="366.0" r="0.9" fill="#e8e840"/><circle cx="54.0" cy="366.5" r="0.9" fill="#e8e840"/><circle cx="55.0" cy="378.0" r="0.9" fill="#e8e840"/><circle cx="50.0" cy="384.0" r="0.9" fill="#e8e840"/><circle cx="37.5" cy="382.5" r="0.9" fill="#e8e840"/><polygon points="74.5,369.0 80.0,366.0 91.0,366.5 92.0,378.0 87.0,384.0 74.5,382.5" fill="#2a90c0"/><polygon points="74.5,369.0 80.0,366.0 91.0,366.5 84.0,375.0" fill="#3aa6d6"/><polygon points="91.0,366.5 92.0,378.0 87.0,384.0 84.0,375.0" fill="#2080b4"/><line x1="74.5" y1="382.5" x2="91.0" y2="366.5" stroke="#5060d0" stroke-width="0.6"/><circle cx="74.5" cy="369.0" r="0.9" fill="#e8e840"/><circle cx="80.0" cy="366.0" r="0.9" fill="#e8e840"/><circle cx="91.0" cy="366.5" r="0.9" fill="#e8e840"/><circle cx="92.0" cy="378.0" r="0.9" fill="#e8e840"/><circle cx="87.0" cy="384.0" r="0.9" fill="#e8e840"/><circle cx="74.5" cy="382.5" r="0.9" fill="#e8e840"/><polygon points="37.5,405.0 43.0,402.0 54.0,402.5 55.0,414.0 50.0,420.0 37.5,418.5" fill="#2a90c0"/><polygon points="37.5,405.0 43.0,402.0 54.0,402.5 47.0,411.0" fill="#3aa6d6"/><polygon points="54.0,402.5 55.0,414.0 50.0,420.0 47.0,411.0" fill="#2080b4"/><line x1="37.5" y1="418.5" x2="54.0" y2="402.5" stroke="#5060d0" stroke-width="0.6"/><circle cx="37.5" cy="405.0" r="0.9" fill="#e8e840"/><circle cx="43.0" cy="402.0" r="0.9" fill="#e8e840"/><circle cx="54.0" cy="402.5" r="0.9" fill="#e8e840"/><circle cx="55.0" cy="414.0" r="0.9" fill="#e8e840"/><circle cx="50.0" cy="420.0" r="0.9" fill="#e8e840"/><circle cx="37.5" cy="418.5" r="0.9" fill="#e8e840"/><polygon points="74.5,405.0 80.0,402.0 91.0,402.5 92.0,414.0 87.0,420.0 74.5,418.5" fill="#2a90c0"/><polygon points="74.5,405.0 80.0,402.0 91.0,402.5 84.0,411.0" fill="#3aa6d6"/><polygon points="91.0,402.5 92.0,414.0 87.0,420.0 84.0,411.0" fill="#2080b4"/><line x1="74.5" y1="418.5" x2="91.0" y2="402.5" stroke="#5060d0" stroke-width="0.6"/><circle cx="74.5" cy="405.0" r="0.9" fill="#e8e840"/><circle cx="80.0" cy="402.0" r="0.9" fill="#e8e840"/><circle cx="91.0" cy="402.5" r="0.9" fill="#e8e840"/><circle cx="92.0" cy="414.0" r="0.9" fill="#e8e840"/><circle cx="87.0" cy="420.0" r="0.9" fill="#e8e840"/><circle cx="74.5" cy="418.5" r="0.9" fill="#e8e840"/><path d="M65 374.6 L52 381 L45.7 393.3 L52 405 L65 410 L78 405 L81.8 393.3 L78 381 Z" fill="none" stroke="#d09830" stroke-width="0.8"/><path d="M65 374.6 L57 393 L65 410 L74 393 Z M45.7 393.3 L65 384 L81.8 393.3 L65 402 Z" fill="none" stroke="#c08a28" stroke-width="0.7"/><polygon points="58.2,387.2 62.6,384.8 71.4,385.2 72.2,394.4 68.2,399.2 58.2,398.0" fill="#2a90c0"/><polygon points="58.2,387.2 62.6,384.8 71.4,385.2 65.8,392.0" fill="#3aa6d6"/><polygon points="71.4,385.2 72.2,394.4 68.2,399.2 65.8,392.0" fill="#2080b4"/><line x1="58.2" y1="398.0" x2="71.4" y2="385.2" stroke="#5060d0" stroke-width="0.6"/><circle cx="58.2" cy="387.2" r="0.9" fill="#e8e840"/><circle cx="62.6" cy="384.8" r="0.9" fill="#e8e840"/><circle cx="71.4" cy="385.2" r="0.9" fill="#e8e840"/><circle cx="72.2" cy="394.4" r="0.9" fill="#e8e840"/><circle cx="68.2" cy="399.2" r="0.9" fill="#e8e840"/><circle cx="58.2" cy="398.0" r="0.9" fill="#e8e840"/><circle cx="65.1" cy="374.6" r="1.8" fill="#eee"/><circle cx="45.7" cy="393.3" r="1.8" fill="#eee"/><circle cx="81.8" cy="393.3" r="1.8" fill="#eee"/><circle cx="65.1" cy="410" r="1.8" fill="#eee"/><circle cx="62.1" cy="394.3" r="1.5" fill="#eee"/></g></svg><svg style="position:absolute;left:24px;top:360px;overflow:visible" width="8" height="8"><path d="M1.5 0.5 V5.5 H6" stroke="#999" stroke-width="0.6" fill="none"/></svg><svg style="position:absolute;left:105px;top:417px;overflow:visible" width="5" height="9"><circle cx="2" cy="1.5" r="1" fill="#f0f"/><circle cx="2" cy="4.5" r="1" fill="#ff0"/><circle cx="2" cy="7" r="1" fill="#ddd"/></svg><div style="position:absolute;left:-135.4px;width:400px;text-align:center;top:434.00px;white-space:pre;font-family:'Liberation Sans',sans-serif;font-size:8.27px;line-height:10.27px;color:#151515;">Na3 P S4: Unit cell with P...</div><div style="position:absolute;left:12px;top:445.7px;width:106px;height:21px;background:#fff;border:1px solid #a8a8a8;border-bottom:none;box-sizing:border-box;"></div><div style="position:absolute;left:18.6px;top:450.8px;width:91.6px;height:15.2px;background:#6868a6;"></div><svg style="position:absolute;left:0;top:0" width="964" height="505"><defs><clipPath id="c3"><rect x="18.6" y="450.8" width="91.6" height="15.2"/></clipPath></defs><g clip-path="url(#c3)"><path d="M35.3 466 V456.6 H93.9 V466 M64.6 456.6 V466" fill="none" stroke="#d8d8f0" stroke-width="0.7"/><path d="M49.4 456.6 L40.4 462 M49.4 456.6 L45.4 466 M49.4 456.6 L54.4 466 M49.4 456.6 L59.4 462" stroke="#b08850" stroke-width="0.5"/><path d="M78.5 456.6 L69.5 462 M78.5 456.6 L74.5 466 M78.5 456.6 L83.5 466 M78.5 456.6 L88.5 462" stroke="#b08850" stroke-width="0.5"/><circle cx="40.6" cy="460.8" r="2.3" fill="#ffff20"/><circle cx="59.7" cy="461" r="2.3" fill="#ffff20"/><circle cx="45.4" cy="464.9" r="2.3" fill="#ffff20"/><circle cx="55.1" cy="465" r="2.3" fill="#ffff20"/><circle cx="69.4" cy="460.5" r="2.3" fill="#ffff20"/><circle cx="88.5" cy="461" r="2.3" fill="#ffff20"/><circle cx="73.9" cy="465" r="2.3" fill="#ffff20"/><circle cx="84" cy="465" r="2.3" fill="#ffff20"/><circle cx="35.3" cy="456.6" r="1.1" fill="#e020e0"/><circle cx="64.6" cy="456.6" r="1.1" fill="#e020e0"/><circle cx="93.9" cy="456.6" r="1.1" fill="#e020e0"/><circle cx="49.4" cy="456.6" r="1.4" fill="#30c840"/><circle cx="78.5" cy="456.6" r="1.4" fill="#30c840"/><path d="M24.5 453 V455 M25 456 H27" stroke="#c8c8e0" stroke-width="0.5"/></g></svg><div style="position:absolute;left:5px;top:466px;width:131px;height:3px;background:#f0f0f0;"></div><div style="position:absolute;left:662px;top:69px;width:295px;height:14px;background:linear-gradient(to bottom,#f8f8f8,#ebebeb);border:1px solid #c6c6c6;box-sizing:border-box;"></div><div style="position:absolute;left:667.3px;top:71.93px;white-space:pre;font-family:'Liberation Sans',sans-serif;font-size:8.12px;line-height:10.12px;color:#111;">Data brief</div><svg style="position:absolute;left:708.5px;top:76px;overflow:visible" width="6" height="4"><path d="M0.5 0.5 L5 0.5 L2.75 3.5 Z" fill="#111"/></svg><svg style="position:absolute;left:947px;top:73px;overflow:visible" width="8" height="8"><path d="M1 1 L7 7 M7 1 L1 7" stroke="#111" stroke-width="1.5"/></svg><div style="position:absolute;left:662px;top:83px;width:295px;height:185px;background:#fff;border-left:1px solid #c8c8c8;border-bottom:1px solid #c8c8c8;box-sizing:border-box;"></div><div style="position:absolute;left:947px;top:83px;width:10px;height:185px;background:linear-gradient(to right,#ececec,#f6f6f6);"></div><svg style="position:absolute;left:949px;top:88px;overflow:visible" width="6" height="4"><path d="M0 3.5 L3 0.5 L6 3.5 Z" fill="#666"/></svg><svg style="position:absolute;left:949px;top:261px;overflow:visible" width="6" height="4"><path d="M0 0.5 L3 3.5 L6 0.5 Z" fill="#666"/></svg><div style="position:absolute;left:670px;top:93px;width:166px;height:8.299999999999997px;background:#a6caf0;"></div><div style="position:absolute;left:554.5px;width:400px;text-align:center;top:92.27px;white-space:pre;font-family:'Liberation Sans',sans-serif;font-size:8.9px;line-height:10.9px;color:#101c38;font-weight:bold;">General</div><div style="position:absolute;left:670px;top:114.8px;width:166px;height:7.799999999999997px;background:#a6caf0;"></div><div style="position:absolute;left:554.6px;width:400px;text-align:center;top:113.61px;white-space:pre;font-family:'Liberation Sans',sans-serif;font-size:8.85px;line-height:10.85px;color:#101c38;font-weight:bold;">Bibliographic data</div><div style="position:absolute;left:670px;top:136.6px;width:166px;height:7.900000000000006px;background:#a6caf0;"></div><div style="position:absolute;left:555px;width:400px;text-align:center;top:135.47px;white-space:pre;font-family:'Liberation Sans',sans-serif;font-size:8.9px;line-height:10.9px;color:#101c38;font-weight:bold;">Phase data</div><div style="position:absolute;left:670px;top:149px;width:57.4px;height:8.4px;background:#a6caf0;"></div><div style="position:absolute;left:670px;top:158.4px;width:57.4px;height:27.6px;background:#a6caf0;"></div><div style="position:absolute;left:671.8px;top:147.99px;white-space:pre;font-family:'Liberation Sans',sans-serif;font-size:8.87px;line-height:10.87px;color:#101c38;font-weight:bold;">Space-group</div><div style="position:absolute;left:671.8px;top:167.19px;white-space:pre;font-family:'Liberation Sans',sans-serif;font-size:8.87px;line-height:10.87px;color:#101c38;font-weight:bold;">Cell</div><div style="position:absolute;left:732.6px;top:148.68px;white-space:pre;font-family:'Liberation Sans',sans-serif;font-size:8.65px;line-height:10.65px;color:#000;">P -4 21 c (114) - tetragonal</div><div style="position:absolute;left:732.6px;top:157.88px;white-space:pre;font-family:'Liberation Sans',sans-serif;font-size:8.65px;line-height:10.65px;color:#000;">a=6.9520 Å c=7.0757 Å</div><div style="position:absolute;left:732.6px;top:166.98px;white-space:pre;font-family:'Liberation Sans',sans-serif;font-size:8.65px;line-height:10.65px;color:#000;">c/a=1.0178</div><div style="position:absolute;left:732.6px;top:176.98px;white-space:pre;font-family:'Liberation Sans',sans-serif;font-size:8.65px;line-height:10.65px;color:#000;">V=341.97 Å<sup style="font-size:7px;vertical-align:4px;line-height:0">3</sup></div><div style="position:absolute;left:670px;top:197.3px;width:252.89999999999998px;height:8.699999999999989px;background:#a6caf0;"></div><div style="position:absolute;left:598.6px;width:400px;text-align:center;top:196.77px;white-space:pre;font-family:'Liberation Sans',sans-serif;font-size:9.13px;line-height:11.13px;color:#101c38;font-weight:bold;">Atomic parameters</div><div style="position:absolute;left:670px;top:209.9px;width:24.399999999999977px;height:10.5px;background:#a6caf0;"></div><div style="position:absolute;left:695.8px;top:209.9px;width:16.100000000000023px;height:10.5px;background:#a6caf0;"></div><div style="position:absolute;left:713px;top:209.9px;width:27.600000000000023px;height:10.5px;background:#a6caf0;"></div><div style="position:absolute;left:742px;top:209.9px;width:18.5px;height:10.5px;background:#a6caf0;"></div><div style="position:absolute;left:761.6px;top:209.9px;width:26.399999999999977px;height:10.5px;background:#a6caf0;"></div><div style="position:absolute;left:789.4px;top:209.9px;width:33.60000000000002px;height:10.5px;background:#a6caf0;"></div><div style="position:absolute;left:824.4px;top:209.9px;width:33.60000000000002px;height:10.5px;background:#a6caf0;"></div><div style="position:absolute;left:859.4px;top:209.9px;width:33.60000000000002px;height:10.5px;background:#a6caf0;"></div><div style="position:absolute;left:894.4px;top:209.9px;width:28.5px;height:10.5px;background:#a6caf0;"></div><div style="position:absolute;left:671.5px;top:210.22px;white-space:pre;font-family:'Liberation Sans',sans-serif;font-size:8.6px;line-height:10.6px;color:#101c38;font-weight:bold;">Atom</div><div style="position:absolute;left:697.3px;top:210.22px;white-space:pre;font-family:'Liberation Sans',sans-serif;font-size:8.6px;line-height:10.6px;color:#101c38;font-weight:bold;">Ox.</div><div style="position:absolute;left:714.5px;top:210.22px;white-space:pre;font-family:'Liberation Sans',sans-serif;font-size:8.6px;line-height:10.6px;color:#101c38;font-weight:bold;">Wyck.</div><div style="position:absolute;left:743.5px;top:210.22px;white-space:pre;font-family:'Liberation Sans',sans-serif;font-size:8.6px;line-height:10.6px;color:#101c38;font-weight:bold;">Site</div><div style="position:absolute;left:763.1px;top:210.22px;white-space:pre;font-family:'Liberation Sans',sans-serif;font-size:8.6px;line-height:10.6px;color:#101c38;font-weight:bold;">S.O.F.</div><div style="position:absolute;left:606.2px;width:400px;text-align:center;top:210.22px;white-space:pre;font-family:'Liberation Sans',sans-serif;font-size:8.6px;line-height:10.6px;color:#101c38;font-weight:bold;">x/a</div><div style="position:absolute;left:641.2px;width:400px;text-align:center;top:210.22px;white-space:pre;font-family:'Liberation Sans',sans-serif;font-size:8.6px;line-height:10.6px;color:#101c38;font-weight:bold;">y/b</div><div style="position:absolute;left:676.2px;width:400px;text-align:center;top:210.22px;white-space:pre;font-family:'Liberation Sans',sans-serif;font-size:8.6px;line-height:10.6px;color:#101c38;font-weight:bold;">z/c</div><div style="position:absolute;left:896px;top:210.22px;white-space:pre;font-family:'Liberation Sans',sans-serif;font-size:8.6px;line-height:10.6px;color:#101c38;font-weight:bold;">U [Å<sup style="font-size:7px;vertical-align:4px;line-height:0">2</sup>]</div><div style="position:absolute;left:673.7px;top:220.97px;white-space:pre;font-family:'Liberation Sans',sans-serif;font-size:8.3px;line-height:10.3px;color:#000;">P1</div><div style="position:absolute;left:699.7px;top:220.97px;white-space:pre;font-family:'Liberation Sans',sans-serif;font-size:8.3px;line-height:10.3px;color:#000;">5</div><div style="position:absolute;left:716.8px;top:220.97px;white-space:pre;font-family:'Liberation Sans',sans-serif;font-size:8.3px;line-height:10.3px;color:#000;">2a</div><div style="position:absolute;left:746px;top:220.97px;white-space:pre;font-family:'Liberation Sans',sans-serif;font-size:8.3px;line-height:10.3px;color:#000;">-4..</div><div style="position:absolute;left:793.4px;top:220.97px;white-space:pre;font-family:'Liberation Sans',sans-serif;font-size:8.3px;line-height:10.3px;color:#000;">0</div><div style="position:absolute;left:828.3px;top:220.97px;white-space:pre;font-family:'Liberation Sans',sans-serif;font-size:8.3px;line-height:10.3px;color:#000;">0</div><div style="position:absolute;left:863.4px;top:220.97px;white-space:pre;font-family:'Liberation Sans',sans-serif;font-size:8.3px;line-height:10.3px;color:#000;">0</div><div style="position:absolute;left:673.7px;top:230.17px;white-space:pre;font-family:'Liberation Sans',sans-serif;font-size:8.3px;line-height:10.3px;color:#000;">S1</div><div style="position:absolute;left:699.7px;top:230.17px;white-space:pre;font-family:'Liberation Sans',sans-serif;font-size:8.3px;line-height:10.3px;color:#000;">-2</div><div style="position:absolute;left:716.8px;top:230.17px;white-space:pre;font-family:'Liberation Sans',sans-serif;font-size:8.3px;line-height:10.3px;color:#000;">8e</div><div style="position:absolute;left:746px;top:230.17px;white-space:pre;font-family:'Liberation Sans',sans-serif;font-size:8.3px;line-height:10.3px;color:#000;">1</div><div style="position:absolute;left:793.4px;top:230.17px;white-space:pre;font-family:'Liberation Sans',sans-serif;font-size:8.3px;line-height:10.3px;color:#000;">0.15808</div><div style="position:absolute;left:828.3px;top:230.17px;white-space:pre;font-family:'Liberation Sans',sans-serif;font-size:8.3px;line-height:10.3px;color:#000;">0.18291</div><div style="position:absolute;left:863.4px;top:230.17px;white-space:pre;font-family:'Liberation Sans',sans-serif;font-size:8.3px;line-height:10.3px;color:#000;">0.16573</div><div style="position:absolute;left:673.7px;top:239.37px;white-space:pre;font-family:'Liberation Sans',sans-serif;font-size:8.3px;line-height:10.3px;color:#000;">Na1</div><div style="position:absolute;left:699.7px;top:239.37px;white-space:pre;font-family:'Liberation Sans',sans-serif;font-size:8.3px;line-height:10.3px;color:#000;">1</div><div style="position:absolute;left:716.8px;top:239.37px;white-space:pre;font-family:'Liberation Sans',sans-serif;font-size:8.3px;line-height:10.3px;color:#000;">4d</div><div style="position:absolute;left:746px;top:239.37px;white-space:pre;font-family:'Liberation Sans',sans-serif;font-size:8.3px;line-height:10.3px;color:#000;">2..</div><div style="position:absolute;left:793.4px;top:239.37px;white-space:pre;font-family:'Liberation Sans',sans-serif;font-size:8.3px;line-height:10.3px;color:#000;">1/2</div><div style="position:absolute;left:828.3px;top:239.37px;white-space:pre;font-family:'Liberation Sans',sans-serif;font-size:8.3px;line-height:10.3px;color:#000;">0</div><div style="position:absolute;left:863.4px;top:239.37px;white-space:pre;font-family:'Liberation Sans',sans-serif;font-size:8.3px;line-height:10.3px;color:#000;">0.07281</div><div style="position:absolute;left:673.7px;top:248.57px;white-space:pre;font-family:'Liberation Sans',sans-serif;font-size:8.3px;line-height:10.3px;color:#000;">Na2</div><div style="position:absolute;left:699.7px;top:248.57px;white-space:pre;font-family:'Liberation Sans',sans-serif;font-size:8.3px;line-height:10.3px;color:#000;">1</div><div style="position:absolute;left:716.8px;top:248.57px;white-space:pre;font-family:'Liberation Sans',sans-serif;font-size:8.3px;line-height:10.3px;color:#000;">2b</div><div style="position:absolute;left:746px;top:248.57px;white-space:pre;font-family:'Liberation Sans',sans-serif;font-size:8.3px;line-height:10.3px;color:#000;">-4..</div><div style="position:absolute;left:793.4px;top:248.57px;white-space:pre;font-family:'Liberation Sans',sans-serif;font-size:8.3px;line-height:10.3px;color:#000;">0</div><div style="position:absolute;left:828.3px;top:248.57px;white-space:pre;font-family:'Liberation Sans',sans-serif;font-size:8.3px;line-height:10.3px;color:#000;">0</div><div style="position:absolute;left:863.4px;top:248.57px;white-space:pre;font-family:'Liberation Sans',sans-serif;font-size:8.3px;line-height:10.3px;color:#000;">1/2</div><div style="position:absolute;left:662px;top:271px;width:295px;height:14px;background:linear-gradient(to bottom,#f8f8f8,#ebebeb);border:1px solid #c6c6c6;box-sizing:border-box;"></div><div style="position:absolute;left:666.8px;top:274.27px;white-space:pre;font-family:'Liberation Sans',sans-serif;font-size:8.07px;line-height:10.07px;color:#111;">Properties</div><svg style="position:absolute;left:947px;top:274px;overflow:visible" width="8" height="8"><path d="M1 1 L7 7 M7 1 L1 7" stroke="#111" stroke-width="1.5"/></svg><div style="position:absolute;left:664px;top:285.5px;width:291px;height:15px;background:#fff;border:1px solid #dcdcdc;box-sizing:border-box;"></div><div style="position:absolute;left:666.8px;top:287.76px;white-space:pre;font-family:'Liberation Sans',sans-serif;font-size:8.55px;line-height:10.55px;color:#0a0a0a;">Structure picture contents</div><svg style="position:absolute;left:947px;top:292px;overflow:visible" width="6" height="4"><path d="M0.5 0.5 L5.5 0.5 L3 3.5 Z" fill="#111"/></svg><div style="position:absolute;left:662px;top:301.5px;width:295px;height:167.5px;background:#fff;border-left:1px solid #c8c8c8;box-sizing:border-box;"></div><div style="position:absolute;left:663px;top:302px;width:284px;height:15px;background:linear-gradient(to bottom,#ffffff,#f2f2f2 50%,#e8e8e8);border-bottom:1px solid #b8b8b8;box-sizing:border-box;"></div><div style="position:absolute;left:898px;top:303px;width:1px;height:13px;background:#cfcfcf;"></div><div style="position:absolute;left:663px;top:317px;width:284px;height:151px;overflow:hidden"><div style="position:absolute;left:0;top:12.3px;width:284px;height:1px;background:#ececec"></div><div style="position:absolute;left:4px;top:2.5px;white-space:pre;font-family:'Liberation Sans',sans-serif;font-size:8.1px;line-height:10px;color:#0a0a0a">Atomic parameters</div><div style="position:absolute;right:4.600000000000023px;top:2.5px;white-space:pre;font-family:'Liberation Sans',sans-serif;font-size:8.3px;line-height:10px;color:#0a0a0a">4</div><div style="position:absolute;left:0;top:24.1px;width:284px;height:1px;background:#ececec"></div><div style="position:absolute;left:4px;top:14.3px;white-space:pre;font-family:'Liberation Sans',sans-serif;font-size:8.1px;line-height:10px;color:#0a0a0a">Symmetry records</div><div style="position:absolute;right:4.600000000000023px;top:14.3px;white-space:pre;font-family:'Liberation Sans',sans-serif;font-size:8.3px;line-height:10px;color:#0a0a0a">8</div><div style="position:absolute;left:0;top:35.9px;width:284px;height:1px;background:#ececec"></div><div style="position:absolute;left:4px;top:26.1px;white-space:pre;font-family:'Liberation Sans',sans-serif;font-size:8.1px;line-height:10px;color:#0a0a0a">Atoms in unit cell</div><div style="position:absolute;right:4.600000000000023px;top:26.1px;white-space:pre;font-family:'Liberation Sans',sans-serif;font-size:8.3px;line-height:10px;color:#0a0a0a">16</div><div style="position:absolute;left:0;top:47.7px;width:284px;height:1px;background:#ececec"></div><div style="position:absolute;left:4px;top:37.9px;white-space:pre;font-family:'Liberation Sans',sans-serif;font-size:8.1px;line-height:10px;color:#0a0a0a">Explicitely defined bonds</div><div style="position:absolute;right:4.600000000000023px;top:37.9px;white-space:pre;font-family:'Liberation Sans',sans-serif;font-size:8.3px;line-height:10px;color:#0a0a0a">0</div><div style="position:absolute;left:0;top:59.5px;width:284px;height:1px;background:#ececec"></div><div style="position:absolute;left:4px;top:49.7px;white-space:pre;font-family:'Liberation Sans',sans-serif;font-size:8.1px;line-height:10px;color:#0a0a0a">Created atoms</div><div style="position:absolute;right:4.600000000000023px;top:49.7px;white-space:pre;font-family:'Liberation Sans',sans-serif;font-size:8.3px;line-height:10px;color:#0a0a0a">177</div><div style="position:absolute;left:0;top:71.3px;width:284px;height:1px;background:#ececec"></div><div style="position:absolute;left:4px;top:61.5px;white-space:pre;font-family:'Liberation Sans',sans-serif;font-size:8.1px;line-height:10px;color:#0a0a0a">Created bonds</div><div style="position:absolute;right:4.600000000000023px;top:61.5px;white-space:pre;font-family:'Liberation Sans',sans-serif;font-size:8.3px;line-height:10px;color:#0a0a0a">304</div><div style="position:absolute;left:0;top:83.1px;width:284px;height:1px;background:#ececec"></div><div style="position:absolute;left:4px;top:73.3px;white-space:pre;font-family:'Liberation Sans',sans-serif;font-size:8.1px;line-height:10px;color:#0a0a0a">Cell corners</div><div style="position:absolute;right:4.600000000000023px;top:73.3px;white-space:pre;font-family:'Liberation Sans',sans-serif;font-size:8.3px;line-height:10px;color:#0a0a0a">27</div><div style="position:absolute;left:0;top:94.9px;width:284px;height:1px;background:#ececec"></div><div style="position:absolute;left:4px;top:85.1px;white-space:pre;font-family:'Liberation Sans',sans-serif;font-size:8.1px;line-height:10px;color:#0a0a0a">Cell edges</div><div style="position:absolute;right:4.600000000000023px;top:85.1px;white-space:pre;font-family:'Liberation Sans',sans-serif;font-size:8.3px;line-height:10px;color:#0a0a0a">54</div><div style="position:absolute;left:0;top:106.7px;width:284px;height:1px;background:#ececec"></div><div style="position:absolute;left:4px;top:96.9px;white-space:pre;font-family:'Liberation Sans',sans-serif;font-size:8.1px;line-height:10px;color:#0a0a0a">Atom labels</div><div style="position:absolute;right:4.600000000000023px;top:96.9px;white-space:pre;font-family:'Liberation Sans',sans-serif;font-size:8.3px;line-height:10px;color:#0a0a0a">0</div><div style="position:absolute;left:0;top:118.5px;width:284px;height:1px;background:#ececec"></div><div style="position:absolute;left:4px;top:108.7px;white-space:pre;font-family:'Liberation Sans',sans-serif;font-size:8.1px;line-height:10px;color:#0a0a0a">Bond labels</div><div style="position:absolute;right:4.600000000000023px;top:108.7px;white-space:pre;font-family:'Liberation Sans',sans-serif;font-size:8.3px;line-height:10px;color:#0a0a0a">0</div><div style="position:absolute;left:0;top:130.3px;width:284px;height:1px;background:#ececec"></div><div style="position:absolute;left:4px;top:120.5px;white-space:pre;font-family:'Liberation Sans',sans-serif;font-size:8.1px;line-height:10px;color:#0a0a0a">Texts</div><div style="position:absolute;right:4.600000000000023px;top:120.5px;white-space:pre;font-family:'Liberation Sans',sans-serif;font-size:8.3px;line-height:10px;color:#0a0a0a">0</div><div style="position:absolute;left:0;top:142.1px;width:284px;height:1px;background:#ececec"></div><div style="position:absolute;left:4px;top:132.3px;white-space:pre;font-family:'Liberation Sans',sans-serif;font-size:8.1px;line-height:10px;color:#0a0a0a">Polyhedra</div><div style="position:absolute;right:4.600000000000023px;top:132.3px;white-space:pre;font-family:'Liberation Sans',sans-serif;font-size:8.3px;line-height:10px;color:#0a0a0a">0</div><div style="position:absolute;left:0;top:153.9px;width:284px;height:1px;background:#ececec"></div><div style="position:absolute;left:4px;top:144.1px;white-space:pre;font-family:'Liberation Sans',sans-serif;font-size:8.1px;line-height:10px;color:#0a0a0a">Polyhedron faces</div><div style="position:absolute;right:4.600000000000023px;top:144.1px;white-space:pre;font-family:'Liberation Sans',sans-serif;font-size:8.3px;line-height:10px;color:#0a0a0a">0</div></div><div style="position:absolute;left:898px;top:317px;width:1px;height:151px;background:#ececec;"></div><div style="position:absolute;left:947px;top:302px;width:10px;height:167px;background:linear-gradient(to right,#ececec,#f6f6f6);"></div><svg style="position:absolute;left:949px;top:305.5px;overflow:visible" width="6" height="4"><path d="M0 3.5 L3 0.5 L6 3.5 Z" fill="#666"/></svg><div style="position:absolute;left:948px;top:314.5px;width:9px;height:101px;background:linear-gradient(to right,#f2f2f2,#d8d8d8);border:1px solid #b0b0b0;border-radius:2px;box-sizing:border-box;"></div><div style="position:absolute;left:950.5px;top:360px;width:4px;height:1px;background:#777;"></div><div style="position:absolute;left:950.5px;top:362px;width:4px;height:1px;background:#777;"></div><div style="position:absolute;left:950.5px;top:364px;width:4px;height:1px;background:#777;"></div><svg style="position:absolute;left:949px;top:461px;overflow:visible" width="6" height="4"><path d="M0 0.5 L3 3.5 L6 0.5 Z" fill="#666"/></svg><div style="position:absolute;left:5px;top:469px;width:953px;height:17px;background:#f0f0f0;"></div><div style="position:absolute;left:5px;top:468.5px;width:953px;height:1px;background:#e4e4e4;"></div><div style="position:absolute;left:13px;top:472px;width:1px;height:1px;background:#bcbcbc;"></div><div style="position:absolute;left:13px;top:474px;width:1px;height:1px;background:#bcbcbc;"></div><div style="position:absolute;left:13px;top:476px;width:1px;height:1px;background:#bcbcbc;"></div><div style="position:absolute;left:13px;top:478px;width:1px;height:1px;background:#bcbcbc;"></div><div style="position:absolute;left:13px;top:480px;width:1px;height:1px;background:#bcbcbc;"></div><div style="position:absolute;left:13px;top:482px;width:1px;height:1px;background:#bcbcbc;"></div><svg style="position:absolute;left:18px;top:472px;overflow:visible" width="12" height="12"><path d="M1 9 Q1 3 5 1 L10 5 L6 10 Z" fill="#f0f080" stroke="#111" stroke-width="0.9"/><path d="M1 9 Q1 3 5 1" stroke="#111" stroke-width="1.6" fill="none"/></svg><svg style="position:absolute;left:33px;top:472px;overflow:visible" width="12" height="12"><circle cx="3" cy="7.5" r="2.6" fill="#f0f020" stroke="#333" stroke-width="0.6"/><circle cx="8.5" cy="7.5" r="2.6" fill="#f0f020" stroke="#333" stroke-width="0.6"/><circle cx="8.5" cy="2.5" r="2.5" fill="#f0f020" stroke="#333" stroke-width="0.6"/><path d="M1 2.5 H5.5 M3.25 0.3 V4.7" stroke="#000" stroke-width="1.3"/></svg><svg style="position:absolute;left:48px;top:472px;overflow:visible" width="12" height="12"><path d="M0.5 5 H5.5 M3 2.5 V7.5" stroke="#000" stroke-width="1.4"/><circle cx="8.5" cy="5" r="2.7" fill="#f0f020" stroke="#333" stroke-width="0.6"/></svg><svg style="position:absolute;left:63px;top:472px;overflow:visible" width="12" height="12"><circle cx="2.5" cy="8.5" r="2" fill="none" stroke="#111"/><circle cx="8.5" cy="8.5" r="2" fill="none" stroke="#111"/><path d="M2.5 6.5 L5 4 M3.5 2.5 Q5 0 7 1.5 Q8 3 5.5 4.5 V6" stroke="#111" fill="none"/></svg><svg style="position:absolute;left:78px;top:472px;overflow:visible" width="12" height="12"><rect x="2" y="2" width="7" height="7" fill="none" stroke="#2a2a90"/><path d="M2 2 L9 9 M9 2 L2 9" stroke="#2a2a90"/><circle cx="2" cy="2" r="1.6" fill="#fff" stroke="#111" stroke-width="0.7"/><circle cx="9" cy="2" r="1.6" fill="#fff" stroke="#111" stroke-width="0.7"/><circle cx="2" cy="9" r="1.6" fill="#fff" stroke="#111" stroke-width="0.7"/><circle cx="9" cy="9" r="1.6" fill="#fff" stroke="#111" stroke-width="0.7"/></svg><svg style="position:absolute;left:94px;top:472px;overflow:visible" width="12" height="12"><circle cx="5.5" cy="2.5" r="1.8" fill="none" stroke="#bbb"/><circle cx="2.5" cy="8.5" r="2" fill="none" stroke="#bbb"/><circle cx="8.5" cy="8.5" r="2" fill="none" stroke="#bbb"/><path d="M5.5 4.3 V7" stroke="#bbb"/></svg><svg style="position:absolute;left:108.5px;top:472px;overflow:visible" width="12" height="12"><circle cx="5.5" cy="5.5" r="4.8" fill="#f4f4f4" stroke="#aaa" stroke-width="0.7"/><circle cx="5.5" cy="5.5" r="3" fill="#6a6a10"/></svg><svg style="position:absolute;left:133.5px;top:472px;overflow:visible" width="12" height="12"><path d="M3 1 H8 L10.5 5.5 L8 10 H3 L0.5 5.5 Z" fill="none" stroke="#2a2acc" stroke-width="1.5"/></svg><svg style="position:absolute;left:149px;top:472px;overflow:visible" width="12" height="12"><path d="M5.5 0.8 A4.7 4.7 0 1 1 1.8 3" fill="none" stroke="#f0f040" stroke-width="1.8"/><path d="M1.8 3 A4.7 4.7 0 0 0 2 8.5" fill="none" stroke="#2a2acc" stroke-width="1.5"/></svg><svg style="position:absolute;left:164px;top:472px;overflow:visible" width="12" height="12"><rect x="0.5" y="2.5" width="8" height="8" fill="#fff" stroke="#2a2a90"/><path d="M0.5 2.5 L3 0.5 H11 V8 L8.5 10.5 M8.5 2.5 L11 0.5 M3.5 2.5 V10.5 M6 2.5 V10.5" fill="none" stroke="#2a2a90"/></svg><svg style="position:absolute;left:180px;top:472px;overflow:visible" width="12" height="12"><path d="M5.5 0.5 L10.5 5.5 L5.5 10.5 L0.5 5.5 Z" fill="#a8a8a8"/></svg><svg style="position:absolute;left:194px;top:472px;overflow:visible" width="12" height="12"><path d="M1 2 L11 9 M11 2 L1 9" stroke="#d01010" stroke-width="2"/><path d="M0 5 H12" stroke="#d01010" stroke-width="1" stroke-dasharray="1.5 1"/><rect x="3" y="3" width="6" height="4" fill="#d01010"/></svg><svg style="position:absolute;left:219.5px;top:472px;overflow:visible" width="12" height="12"><circle cx="2.5" cy="8.5" r="2" fill="#bbb"/><path d="M2.5 8.5 L6 4" stroke="#bbb"/><text x="5.5" y="5" font-family="Liberation Sans" font-size="5" fill="#bbb">Fe</text></svg><svg style="position:absolute;left:239px;top:472px;overflow:visible" width="12" height="12"><rect x="0.5" y="0.5" width="10" height="10" fill="#e8e8f4" stroke="#3a3aa8"/><path d="M2.5 2.5 L8.5 8.5 M8.5 2.5 L2.5 8.5" stroke="#000" stroke-width="1.8"/><circle cx="5.5" cy="2" r="1.3" fill="#f0f000" stroke="#333" stroke-width="0.3"/><circle cx="5.5" cy="9" r="1.3" fill="#f0f000" stroke="#333" stroke-width="0.3"/><circle cx="2" cy="5.5" r="1.3" fill="#f0f000" stroke="#333" stroke-width="0.3"/><circle cx="9" cy="5.5" r="1.3" fill="#f0f000" stroke="#333" stroke-width="0.3"/></svg><svg style="position:absolute;left:266.5px;top:472px;overflow:visible" width="12" height="12"><text x="0" y="9.5" font-family="Liberation Serif" font-style="italic" font-weight="bold" font-size="11" fill="#1a1a90">M</text></svg><svg style="position:absolute;left:287.5px;top:472px;overflow:visible" width="12" height="12"><rect x="0.5" y="0.5" width="9" height="9" fill="#fff" stroke="#2a2a90"/><circle cx="4" cy="4" r="2.5" fill="#e06060"/><circle cx="5.5" cy="5.5" r="2.3" fill="#20a0a0"/></svg><svg style="position:absolute;left:391px;top:472px;overflow:visible" width="12" height="12"><path d="M0.5 9.5 H10 M1 9.5 V1 M3 9.5 V3 M5 9.5 V1 M7 9.5 V3 M9 9.5 V1" stroke="#111" stroke-width="0.9"/></svg><svg style="position:absolute;left:406px;top:472px;overflow:visible" width="12" height="12"><path d="M5 0.5 L9.5 9.5 H0.5 Z" fill="none" stroke="#111" stroke-width="1"/></svg><svg style="position:absolute;left:421px;top:472px;overflow:visible" width="12" height="12"><circle cx="4" cy="7" r="3" fill="none" stroke="#111"/><path d="M4 4 L6 1 L9 2 L7 5" fill="none" stroke="#111"/></svg><svg style="position:absolute;left:436px;top:472px;overflow:visible" width="12" height="12"><path d="M1 9 L6 3 Q9 1 10 4 L5 10 Z" fill="none" stroke="#111"/><path d="M3 6 L8 9" stroke="#111"/></svg><svg style="position:absolute;left:474px;top:472px;overflow:visible" width="12" height="12"><path d="M5.5 0 L7.5 2.5 H3.5 Z M5.5 11 L7.5 8.5 H3.5 Z M0 5.5 L2.5 3.5 V7.5 Z M11 5.5 L8.5 3.5 V7.5 Z" fill="#111"/><circle cx="5.5" cy="5.5" r="2.6" fill="none" stroke="#111" stroke-width="1.3"/></svg><svg style="position:absolute;left:489.5px;top:472px;overflow:visible" width="12" height="12"><path d="M8.5 4 A3.8 3.8 0 1 1 5 2" fill="none" stroke="#111" stroke-width="1.6"/><path d="M5 0 L8 2 L5 4 Z" fill="#111"/></svg><svg style="position:absolute;left:504.5px;top:472px;overflow:visible" width="12" height="12"><path d="M5 0 L7 2.5 H3 Z M5 10 L7 7.5 H3 Z M0 5 L2.5 3 V7 Z M10 5 L7.5 3 V7 Z M5 2 V8 M2 5 H8" fill="#111" stroke="#111"/></svg><svg style="position:absolute;left:519.5px;top:472px;overflow:visible" width="12" height="12"><path d="M0.5 3 V0.5 H3 M7 0.5 H9.5 V3 M9.5 7 V9.5 H7 M3 9.5 H0.5 V7" stroke="#111" fill="none"/><rect x="3" y="3" width="4" height="4" fill="none" stroke="#111"/></svg><svg style="position:absolute;left:534.5px;top:472px;overflow:visible" width="12" height="12"><path d="M10 1 L1 5 L10 9 M5 3 Q7 5 5 7" stroke="#111" stroke-width="1.3" fill="none"/></svg><svg style="position:absolute;left:549.5px;top:472px;overflow:visible" width="12" height="12"><path d="M1 9 H10 M2 6 L5 1 L8 6 M3.5 6 V9 M6.5 6 V9" stroke="#111" stroke-width="1.3" fill="none"/></svg><svg style="position:absolute;left:564.5px;top:472px;overflow:visible" width="12" height="12"><circle cx="5.5" cy="5.5" r="3" fill="#333"/><circle cx="5.5" cy="5.5" r="4.5" fill="none" stroke="#111" stroke-dasharray="1 1"/><circle cx="4.5" cy="4.5" r="1" fill="#fff"/></svg><svg style="position:absolute;left:580.5px;top:472px;overflow:visible" width="12" height="12"><rect x="0.5" y="0.5" width="6" height="6" fill="none" stroke="#aaa"/><rect x="4" y="4" width="2" height="6" fill="#aaa"/><rect x="7" y="4" width="2" height="6" fill="#aaa"/></svg><svg style="position:absolute;left:594.5px;top:472px;overflow:visible" width="12" height="12"><rect x="0.5" y="0.5" width="6" height="6" fill="none" stroke="#aaa"/><rect x="4" y="4" width="6" height="6" fill="#aaa"/></svg><svg style="position:absolute;left:127px;top:477px;overflow:visible" width="5" height="3"><path d="M0 0 L5 0 L2.5 3 Z" fill="#111"/></svg><svg style="position:absolute;left:213px;top:477px;overflow:visible" width="5" height="3"><path d="M0 0 L5 0 L2.5 3 Z" fill="#111"/></svg><svg style="position:absolute;left:257px;top:477px;overflow:visible" width="5" height="3"><path d="M0 0 L5 0 L2.5 3 Z" fill="#111"/></svg><svg style="position:absolute;left:282px;top:477px;overflow:visible" width="5" height="3"><path d="M0 0 L5 0 L2.5 3 Z" fill="#111"/></svg><svg style="position:absolute;left:304px;top:477px;overflow:visible" width="5" height="3"><path d="M0 0 L5 0 L2.5 3 Z" fill="#111"/></svg><div style="position:absolute;left:235.5px;top:472px;width:1px;height:11px;background:#c4c4c4;"></div><div style="position:absolute;left:236.5px;top:472px;width:1px;height:11px;background:#fcfcfc;"></div><div style="position:absolute;left:264px;top:472px;width:1px;height:11px;background:#c4c4c4;"></div><div style="position:absolute;left:265px;top:472px;width:1px;height:11px;background:#fcfcfc;"></div><div style="position:absolute;left:386px;top:472px;width:1px;height:1px;background:#bcbcbc;"></div><div style="position:absolute;left:386px;top:474px;width:1px;height:1px;background:#bcbcbc;"></div><div style="position:absolute;left:386px;top:476px;width:1px;height:1px;background:#bcbcbc;"></div><div style="position:absolute;left:386px;top:478px;width:1px;height:1px;background:#bcbcbc;"></div><div style="position:absolute;left:386px;top:480px;width:1px;height:1px;background:#bcbcbc;"></div><div style="position:absolute;left:386px;top:482px;width:1px;height:1px;background:#bcbcbc;"></div><div style="position:absolute;left:454px;top:472px;width:1px;height:1px;background:#bcbcbc;"></div><div style="position:absolute;left:454px;top:474px;width:1px;height:1px;background:#bcbcbc;"></div><div style="position:absolute;left:454px;top:476px;width:1px;height:1px;background:#bcbcbc;"></div><div style="position:absolute;left:454px;top:478px;width:1px;height:1px;background:#bcbcbc;"></div><div style="position:absolute;left:454px;top:480px;width:1px;height:1px;background:#bcbcbc;"></div><div style="position:absolute;left:454px;top:482px;width:1px;height:1px;background:#bcbcbc;"></div><div style="position:absolute;left:457px;top:470.5px;width:15.5px;height:14px;background:linear-gradient(to bottom,#eaf4fc,#d6eaf8);border:1px solid #98c4e8;border-radius:2px;box-sizing:border-box;"></div><svg style="position:absolute;left:461px;top:473px;overflow:visible" width="10" height="10"><path d="M0.5 0.5 V8 L2.5 6 L4 9.5 L5.5 8.8 L4 5.5 H6.5 Z" fill="#fff" stroke="#111" stroke-width="0.8"/></svg><div style="position:absolute;left:5px;top:486px;width:953px;height:1px;background:#c8c8c8;"></div><div style="position:absolute;left:5px;top:487px;width:953px;height:12px;background:#f0f0f0;"></div><div style="position:absolute;left:5.8px;top:489.37px;white-space:pre;font-family:'Liberation Sans',sans-serif;font-size:7.72px;line-height:9.719999999999999px;color:#0a0a0a;transform:scaleY(1.06);transform-origin:0 7.5px;">For Help, press F1</div><div style="position:absolute;left:883.3px;top:488.3px;width:17.200000000000045px;height:11px;border:1px solid #a4a4a4;border-right-color:#c4c4c4;border-bottom-color:#c4c4c4;box-sizing:border-box;"></div><div style="position:absolute;left:902.5px;top:488.3px;width:20.200000000000045px;height:11px;border:1px solid #a4a4a4;border-right-color:#c4c4c4;border-bottom-color:#c4c4c4;box-sizing:border-box;"></div><div style="position:absolute;left:924.4px;top:488.3px;width:21.200000000000045px;height:11px;border:1px solid #a4a4a4;border-right-color:#c4c4c4;border-bottom-color:#c4c4c4;box-sizing:border-box;"></div><div style="position:absolute;left:904px;top:489.44px;white-space:pre;font-family:'Liberation Sans',sans-serif;font-size:7.4px;line-height:9.4px;color:#222;">NUM</div><svg style="position:absolute;left:950px;top:490px;overflow:visible" width="8" height="8"><circle cx="6.5" cy="6.5" r="0.6" fill="#aaa"/><circle cx="3.5" cy="6.5" r="0.6" fill="#aaa"/><circle cx="6.5" cy="3.5" r="0.6" fill="#aaa"/><circle cx="0.5" cy="6.5" r="0.6" fill="#aaa"/><circle cx="3.5" cy="3.5" r="0.6" fill="#aaa"/><circle cx="6.5" cy="0.5" r="0.6" fill="#aaa"/></svg>
</body></html>
